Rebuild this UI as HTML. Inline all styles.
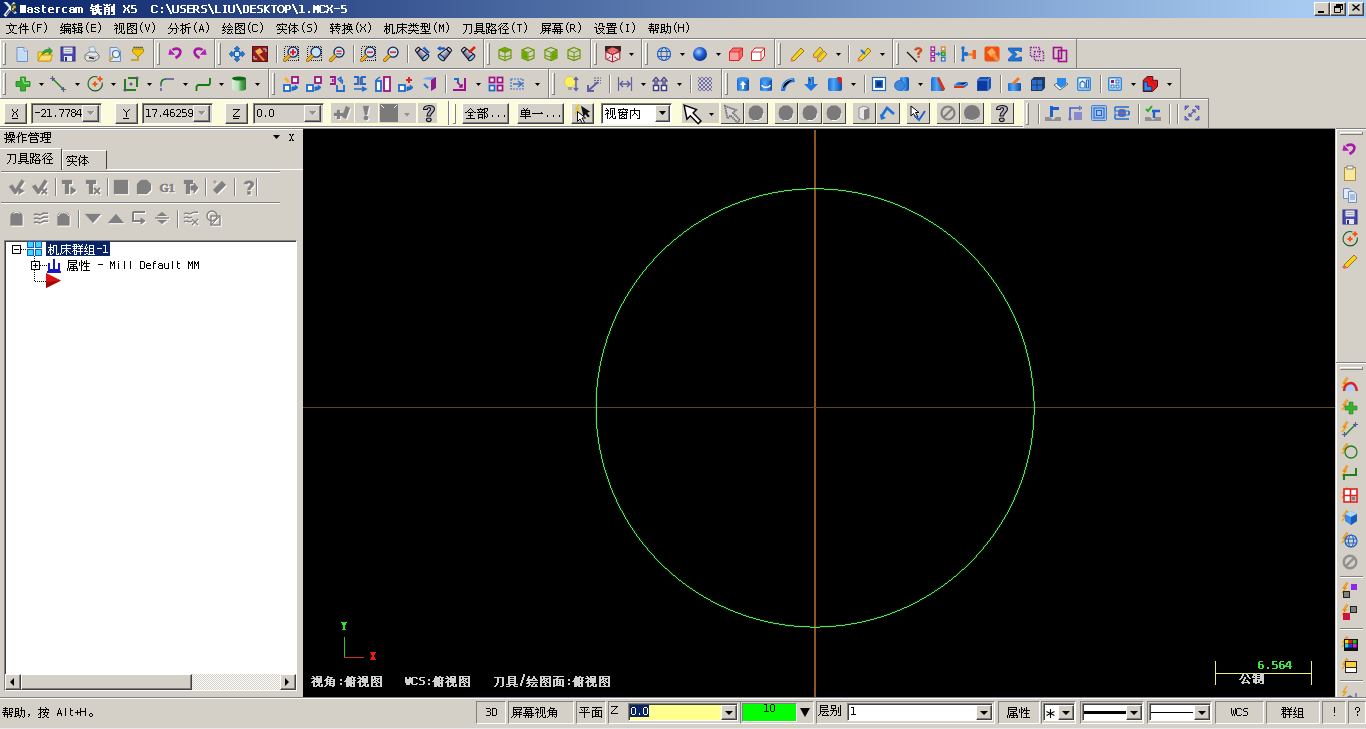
<!DOCTYPE html>
<html><head><meta charset="utf-8"><title>Mastercam X5</title>
<style>
*{margin:0;padding:0;box-sizing:border-box}
html,body{width:1366px;height:729px;overflow:hidden;background:#D4D0C8;position:relative;font-family:"Liberation Sans",sans-serif;font-size:12px}
.a{position:absolute}
.t{white-space:pre}
svg.a{overflow:visible}
</style></head><body>
<div class="a" style="left:0;top:0;width:1366px;height:18px;background:linear-gradient(90deg,#0A246A 0px,#A6CAF0 1300px)"></div>
<svg class="a" style="left:2px;top:1px" width="16" height="16" viewBox="0 0 16 16"><path d="M1.5 1L5 1L15 12L12.5 13Z" fill="#D8E4F0"/><path d="M1.5 14L4 16L14 2.5L11.5 1Z" fill="#F0F4FA"/><path d="M9 4L14 2L15 7L12 12L9 9Z" fill="#28301A" opacity=".85"/><circle cx="12.5" cy="6" r="1.6" fill="#C8B040"/><circle cx="11" cy="8" r="1" fill="#E8D880"/><path d="M4 14L8 9" stroke="#384838" stroke-width="1.2"/></svg>
<div class="a" style="left:20px;top:5px;width:6px;height:8px;background:#fff;"></div>
<svg class="a" style="left:19px;top:4px;" width="64" height="12" shape-rendering="crispEdges"><path d="M9 3h4v1h-4zM8 4h2v1h-2zM12 4h2v1h-2zM9 5h5v1h-5zM8 6h2v1h-2zM12 6h2v1h-2zM8 7h2v1h-2zM12 7h2v1h-2zM9 8h5v1h-5zM16 3h4v1h-4zM15 4h2v1h-2zM19 4h2v1h-2zM16 5h3v1h-3zM18 6h2v1h-2zM15 7h2v1h-2zM19 7h2v1h-2zM16 8h4v1h-4zM23 1h2v1h-2zM23 2h2v1h-2zM23 3h4v1h-4zM23 4h2v1h-2zM23 5h2v1h-2zM23 6h2v1h-2zM23 7h2v1h-2zM24 8h3v1h-3zM30 3h4v1h-4zM29 4h2v1h-2zM33 4h2v1h-2zM29 5h6v1h-6zM29 6h2v1h-2zM29 7h2v1h-2zM30 8h5v1h-5zM37 3h4v1h-4zM37 4h2v1h-2zM37 5h2v1h-2zM37 6h2v1h-2zM37 7h2v1h-2zM37 8h2v1h-2zM44 3h4v1h-4zM43 4h2v1h-2zM43 5h2v1h-2zM43 6h2v1h-2zM43 7h2v1h-2zM44 8h4v1h-4zM51 3h4v1h-4zM50 4h2v1h-2zM54 4h2v1h-2zM51 5h5v1h-5zM50 6h2v1h-2zM54 6h2v1h-2zM50 7h2v1h-2zM54 7h2v1h-2zM51 8h5v1h-5zM56 3h4v1h-4zM60 3h3v1h-3zM56 4h2v1h-2zM59 4h2v1h-2zM62 4h2v1h-2zM56 5h2v1h-2zM59 5h2v1h-2zM62 5h2v1h-2zM56 6h2v1h-2zM59 6h2v1h-2zM62 6h2v1h-2zM56 7h2v1h-2zM59 7h2v1h-2zM62 7h2v1h-2zM56 8h2v1h-2zM59 8h2v1h-2zM62 8h2v1h-2z" fill="#fff"/></svg>
<svg class="a" style="left:90px;top:4px;" width="27" height="12" shape-rendering="crispEdges"><path d="M1 0h2v1h-2zM7 0h2v1h-2zM1 1h2v1h-2zM5 1h2v1h-2zM7 1h2v1h-2zM1 2h11v1h-11zM0 3h2v1h-2zM5 3h2v1h-2zM7 3h2v1h-2zM0 4h6v1h-6zM7 4h2v1h-2zM2 5h2v1h-2zM5 5h7v1h-7zM0 6h6v1h-6zM6 6h2v1h-2zM8 6h2v1h-2zM2 7h2v1h-2zM6 7h2v1h-2zM8 7h2v1h-2zM2 8h2v1h-2zM4 8h2v1h-2zM6 8h2v1h-2zM8 8h2v1h-2zM10 8h2v1h-2zM2 9h3v1h-3zM5 9h2v1h-2zM8 9h2v1h-2zM10 9h2v1h-2zM2 10h2v1h-2zM4 10h2v1h-2zM9 10h3v1h-3zM13 0h2v1h-2zM16 0h2v1h-2zM19 0h2v1h-2zM23 0h2v1h-2zM14 1h2v1h-2zM16 1h2v1h-2zM18 1h2v1h-2zM23 1h2v1h-2zM16 2h2v1h-2zM21 2h2v1h-2zM23 2h2v1h-2zM14 3h6v1h-6zM21 3h2v1h-2zM23 3h2v1h-2zM14 4h2v1h-2zM18 4h2v1h-2zM21 4h2v1h-2zM23 4h2v1h-2zM14 5h6v1h-6zM21 5h2v1h-2zM23 5h2v1h-2zM14 6h2v1h-2zM18 6h2v1h-2zM21 6h2v1h-2zM23 6h2v1h-2zM14 7h6v1h-6zM21 7h2v1h-2zM23 7h2v1h-2zM14 8h2v1h-2zM18 8h2v1h-2zM23 8h2v1h-2zM14 9h2v1h-2zM18 9h2v1h-2zM23 9h2v1h-2zM14 10h2v1h-2zM17 10h3v1h-3zM21 10h4v1h-4z" fill="#fff"/></svg>
<svg class="a" style="left:123px;top:4px;" width="15" height="12" shape-rendering="crispEdges"><path d="M0 1h2v1h-2zM5 1h2v1h-2zM0 2h2v1h-2zM5 2h2v1h-2zM1 3h2v1h-2zM4 3h2v1h-2zM2 4h3v1h-3zM1 5h2v1h-2zM4 5h2v1h-2zM1 6h2v1h-2zM4 6h2v1h-2zM0 7h2v1h-2zM5 7h2v1h-2zM0 8h2v1h-2zM5 8h2v1h-2zM8 1h5v1h-5zM8 2h2v1h-2zM8 3h2v1h-2zM8 4h5v1h-5zM12 5h2v1h-2zM12 6h2v1h-2zM12 7h2v1h-2zM8 8h5v1h-5z" fill="#fff"/></svg>
<svg class="a" style="left:151px;top:4px;" width="197" height="12" shape-rendering="crispEdges"><path d="M1 1h5v1h-5zM0 2h2v1h-2zM5 2h2v1h-2zM0 3h2v1h-2zM0 4h2v1h-2zM0 5h2v1h-2zM0 6h2v1h-2zM0 7h2v1h-2zM5 7h2v1h-2zM1 8h5v1h-5zM10 3h2v1h-2zM10 4h2v1h-2zM10 7h2v1h-2zM10 8h2v1h-2zM15 0h2v1h-2zM15 1h2v1h-2zM16 2h2v1h-2zM16 3h2v1h-2zM17 4h2v1h-2zM17 5h2v1h-2zM18 6h2v1h-2zM18 7h2v1h-2zM19 8h2v1h-2zM19 9h2v1h-2zM21 1h2v1h-2zM26 1h2v1h-2zM21 2h2v1h-2zM26 2h2v1h-2zM21 3h2v1h-2zM26 3h2v1h-2zM21 4h2v1h-2zM26 4h2v1h-2zM21 5h2v1h-2zM26 5h2v1h-2zM21 6h2v1h-2zM26 6h2v1h-2zM21 7h2v1h-2zM26 7h2v1h-2zM22 8h5v1h-5zM30 1h5v1h-5zM29 2h2v1h-2zM29 3h2v1h-2zM30 4h4v1h-4zM33 5h2v1h-2zM33 6h2v1h-2zM33 7h2v1h-2zM29 8h5v1h-5zM36 1h6v1h-6zM36 2h2v1h-2zM36 3h2v1h-2zM36 4h6v1h-6zM36 5h2v1h-2zM36 6h2v1h-2zM36 7h2v1h-2zM36 8h6v1h-6zM42 1h5v1h-5zM42 2h2v1h-2zM46 2h2v1h-2zM42 3h2v1h-2zM46 3h2v1h-2zM42 4h2v1h-2zM46 4h2v1h-2zM42 5h5v1h-5zM42 6h2v1h-2zM45 6h2v1h-2zM42 7h2v1h-2zM46 7h2v1h-2zM42 8h2v1h-2zM47 8h2v1h-2zM51 1h5v1h-5zM50 2h2v1h-2zM50 3h2v1h-2zM51 4h4v1h-4zM54 5h2v1h-2zM54 6h2v1h-2zM54 7h2v1h-2zM50 8h5v1h-5zM57 0h2v1h-2zM57 1h2v1h-2zM58 2h2v1h-2zM58 3h2v1h-2zM59 4h2v1h-2zM59 5h2v1h-2zM60 6h2v1h-2zM60 7h2v1h-2zM61 8h2v1h-2zM61 9h2v1h-2zM64 1h2v1h-2zM64 2h2v1h-2zM64 3h2v1h-2zM64 4h2v1h-2zM64 5h2v1h-2zM64 6h2v1h-2zM64 7h2v1h-2zM64 8h6v1h-6zM72 1h4v1h-4zM73 2h2v1h-2zM73 3h2v1h-2zM73 4h2v1h-2zM73 5h2v1h-2zM73 6h2v1h-2zM73 7h2v1h-2zM72 8h4v1h-4zM77 1h2v1h-2zM82 1h2v1h-2zM77 2h2v1h-2zM82 2h2v1h-2zM77 3h2v1h-2zM82 3h2v1h-2zM77 4h2v1h-2zM82 4h2v1h-2zM77 5h2v1h-2zM82 5h2v1h-2zM77 6h2v1h-2zM82 6h2v1h-2zM77 7h2v1h-2zM82 7h2v1h-2zM78 8h5v1h-5zM85 0h2v1h-2zM85 1h2v1h-2zM86 2h2v1h-2zM86 3h2v1h-2zM87 4h2v1h-2zM87 5h2v1h-2zM88 6h2v1h-2zM88 7h2v1h-2zM89 8h2v1h-2zM89 9h2v1h-2zM92 1h5v1h-5zM92 2h2v1h-2zM96 2h2v1h-2zM92 3h2v1h-2zM96 3h2v1h-2zM92 4h2v1h-2zM96 4h2v1h-2zM92 5h2v1h-2zM96 5h2v1h-2zM92 6h2v1h-2zM96 6h2v1h-2zM92 7h2v1h-2zM96 7h2v1h-2zM92 8h5v1h-5zM99 1h6v1h-6zM99 2h2v1h-2zM99 3h2v1h-2zM99 4h6v1h-6zM99 5h2v1h-2zM99 6h2v1h-2zM99 7h2v1h-2zM99 8h6v1h-6zM107 1h5v1h-5zM106 2h2v1h-2zM106 3h2v1h-2zM107 4h4v1h-4zM110 5h2v1h-2zM110 6h2v1h-2zM110 7h2v1h-2zM106 8h5v1h-5zM113 1h2v1h-2zM117 1h2v1h-2zM113 2h2v1h-2zM116 2h2v1h-2zM113 3h2v1h-2zM115 3h2v1h-2zM113 4h3v1h-3zM113 5h3v1h-3zM113 6h2v1h-2zM115 6h2v1h-2zM113 7h2v1h-2zM116 7h2v1h-2zM113 8h2v1h-2zM117 8h2v1h-2zM120 1h6v1h-6zM122 2h2v1h-2zM122 3h2v1h-2zM122 4h2v1h-2zM122 5h2v1h-2zM122 6h2v1h-2zM122 7h2v1h-2zM122 8h2v1h-2zM128 1h4v1h-4zM127 2h2v1h-2zM131 2h2v1h-2zM126 3h2v1h-2zM132 3h2v1h-2zM126 4h2v1h-2zM132 4h2v1h-2zM126 5h2v1h-2zM132 5h2v1h-2zM126 6h2v1h-2zM132 6h2v1h-2zM127 7h2v1h-2zM131 7h2v1h-2zM128 8h4v1h-4zM134 1h5v1h-5zM134 2h2v1h-2zM138 2h2v1h-2zM134 3h2v1h-2zM138 3h2v1h-2zM134 4h2v1h-2zM138 4h2v1h-2zM134 5h5v1h-5zM134 6h2v1h-2zM134 7h2v1h-2zM134 8h2v1h-2zM141 0h2v1h-2zM141 1h2v1h-2zM142 2h2v1h-2zM142 3h2v1h-2zM143 4h2v1h-2zM143 5h2v1h-2zM144 6h2v1h-2zM144 7h2v1h-2zM145 8h2v1h-2zM145 9h2v1h-2zM148 1h4v1h-4zM150 2h2v1h-2zM150 3h2v1h-2zM150 4h2v1h-2zM150 5h2v1h-2zM150 6h2v1h-2zM150 7h2v1h-2zM148 8h6v1h-6zM157 7h2v1h-2zM157 8h2v1h-2zM162 1h2v1h-2zM166 1h2v1h-2zM162 2h3v1h-3zM165 2h3v1h-3zM162 3h3v1h-3zM165 3h3v1h-3zM162 4h2v1h-2zM164 4h2v1h-2zM166 4h2v1h-2zM162 5h2v1h-2zM164 5h2v1h-2zM166 5h2v1h-2zM162 6h2v1h-2zM166 6h2v1h-2zM162 7h2v1h-2zM166 7h2v1h-2zM162 8h2v1h-2zM166 8h2v1h-2zM169 1h5v1h-5zM168 2h2v1h-2zM173 2h2v1h-2zM168 3h2v1h-2zM168 4h2v1h-2zM168 5h2v1h-2zM168 6h2v1h-2zM168 7h2v1h-2zM173 7h2v1h-2zM169 8h5v1h-5zM175 1h2v1h-2zM180 1h2v1h-2zM175 2h2v1h-2zM180 2h2v1h-2zM176 3h2v1h-2zM179 3h2v1h-2zM177 4h3v1h-3zM176 5h2v1h-2zM179 5h2v1h-2zM176 6h2v1h-2zM179 6h2v1h-2zM175 7h2v1h-2zM180 7h2v1h-2zM175 8h2v1h-2zM180 8h2v1h-2zM183 4h6v1h-6zM190 1h5v1h-5zM190 2h2v1h-2zM190 3h2v1h-2zM190 4h5v1h-5zM194 5h2v1h-2zM194 6h2v1h-2zM194 7h2v1h-2zM190 8h5v1h-5z" fill="#fff"/></svg>
<div class="a" style="left:1314px;top:2px;width:16px;height:14px;background:#D4D0C8;border-top:1px solid #fff;border-left:1px solid #fff;border-right:1px solid #404040;border-bottom:1px solid #404040;box-shadow:inset -1px -1px 0 #808080"></div>
<div class="a" style="left:1330px;top:2px;width:16px;height:14px;background:#D4D0C8;border-top:1px solid #fff;border-left:1px solid #fff;border-right:1px solid #404040;border-bottom:1px solid #404040;box-shadow:inset -1px -1px 0 #808080"></div>
<div class="a" style="left:1348px;top:2px;width:16px;height:14px;background:#D4D0C8;border-top:1px solid #fff;border-left:1px solid #fff;border-right:1px solid #404040;border-bottom:1px solid #404040;box-shadow:inset -1px -1px 0 #808080"></div>
<svg class="a" style="left:1318px;top:11px" width="6" height="2" viewBox="0 0 6 2"><rect width="6" height="2" fill="#000"/></svg>
<svg class="a" style="left:1334px;top:4px" width="9" height="9" viewBox="0 0 9 9"><path d="M2.5 2.5V0.5H8.5V5.5H6.5M0.5 2.5H6.5V8.5H0.5Z M2.5 1H8.5" stroke="#000" fill="none"/><rect x="2" y="0" width="7" height="2" fill="#000"/><rect x="0" y="2.5" width="7" height="1.5" fill="#000"/></svg>
<svg class="a" style="left:1352px;top:4px" width="8" height="7" viewBox="0 0 8 7"><path d="M0.5 0.5L7.5 6.5M7.5 0.5L0.5 6.5" stroke="#000" stroke-width="1.6"/></svg>
<svg class="a" style="left:6px;top:23px;" width="43" height="12" shape-rendering="crispEdges"><path d="M4 0h1v1h-1zM5 1h1v1h-1zM0 2h11v1h-11zM3 3h1v1h-1zM7 3h1v1h-1zM3 4h1v1h-1zM7 4h1v1h-1zM3 5h1v1h-1zM7 5h1v1h-1zM4 6h1v1h-1zM6 6h1v1h-1zM4 7h1v1h-1zM6 7h1v1h-1zM5 8h1v1h-1zM3 9h2v1h-2zM6 9h2v1h-2zM0 10h3v1h-3zM8 10h3v1h-3zM15 0h1v1h-1zM19 0h1v1h-1zM15 1h1v1h-1zM17 1h1v1h-1zM19 1h1v1h-1zM14 2h1v1h-1zM17 2h1v1h-1zM19 2h1v1h-1zM14 3h1v1h-1zM16 3h6v1h-6zM13 4h3v1h-3zM19 4h1v1h-1zM12 5h1v1h-1zM14 5h1v1h-1zM19 5h1v1h-1zM14 6h1v1h-1zM16 6h7v1h-7zM14 7h1v1h-1zM19 7h1v1h-1zM14 8h1v1h-1zM19 8h1v1h-1zM14 9h1v1h-1zM19 9h1v1h-1zM14 10h1v1h-1zM19 10h1v1h-1zM28 -1h1v1h-1zM27 0h1v1h-1zM27 1h1v1h-1zM26 2h1v1h-1zM26 3h1v1h-1zM26 4h1v1h-1zM26 5h1v1h-1zM26 6h1v1h-1zM27 7h1v1h-1zM27 8h1v1h-1zM28 9h1v1h-1zM31 1h5v1h-5zM31 2h1v1h-1zM31 3h1v1h-1zM31 4h4v1h-4zM31 5h1v1h-1zM31 6h1v1h-1zM31 7h1v1h-1zM31 8h1v1h-1zM38 -1h1v1h-1zM39 0h1v1h-1zM39 1h1v1h-1zM40 2h1v1h-1zM40 3h1v1h-1zM40 4h1v1h-1zM40 5h1v1h-1zM40 6h1v1h-1zM39 7h1v1h-1zM39 8h1v1h-1zM38 9h1v1h-1z" fill="#000"/></svg>
<svg class="a" style="left:60px;top:23px;" width="43" height="12" shape-rendering="crispEdges"><path d="M2 0h1v1h-1zM7 0h1v1h-1zM2 1h1v1h-1zM4 1h7v1h-7zM1 2h1v1h-1zM4 2h1v1h-1zM10 2h1v1h-1zM1 3h1v1h-1zM3 3h8v1h-8zM0 4h3v1h-3zM4 4h1v1h-1zM2 5h1v1h-1zM4 5h7v1h-7zM1 6h1v1h-1zM4 6h1v1h-1zM6 6h1v1h-1zM8 6h1v1h-1zM10 6h1v1h-1zM0 7h11v1h-11zM4 8h1v1h-1zM6 8h1v1h-1zM8 8h1v1h-1zM10 8h1v1h-1zM2 9h3v1h-3zM6 9h1v1h-1zM8 9h1v1h-1zM10 9h1v1h-1zM0 10h2v1h-2zM4 10h1v1h-1zM9 10h2v1h-2zM14 0h1v1h-1zM18 0h4v1h-4zM12 1h5v1h-5zM18 1h1v1h-1zM21 1h1v1h-1zM13 2h1v1h-1zM18 2h4v1h-4zM13 3h2v1h-2zM12 4h1v1h-1zM14 4h1v1h-1zM17 4h6v1h-6zM12 5h5v1h-5zM18 5h1v1h-1zM21 5h1v1h-1zM14 6h1v1h-1zM18 6h2v1h-2zM21 6h1v1h-1zM14 7h3v1h-3zM18 7h1v1h-1zM20 7h2v1h-2zM12 8h3v1h-3zM18 8h1v1h-1zM21 8h2v1h-2zM14 9h1v1h-1zM16 9h6v1h-6zM14 10h1v1h-1zM21 10h1v1h-1zM28 -1h1v1h-1zM27 0h1v1h-1zM27 1h1v1h-1zM26 2h1v1h-1zM26 3h1v1h-1zM26 4h1v1h-1zM26 5h1v1h-1zM26 6h1v1h-1zM27 7h1v1h-1zM27 8h1v1h-1zM28 9h1v1h-1zM31 1h5v1h-5zM31 2h1v1h-1zM31 3h1v1h-1zM31 4h5v1h-5zM31 5h1v1h-1zM31 6h1v1h-1zM31 7h1v1h-1zM31 8h5v1h-5zM38 -1h1v1h-1zM39 0h1v1h-1zM39 1h1v1h-1zM40 2h1v1h-1zM40 3h1v1h-1zM40 4h1v1h-1zM40 5h1v1h-1zM40 6h1v1h-1zM39 7h1v1h-1zM39 8h1v1h-1zM38 9h1v1h-1z" fill="#000"/></svg>
<svg class="a" style="left:114px;top:23px;" width="43" height="12" shape-rendering="crispEdges"><path d="M1 0h1v1h-1zM5 0h5v1h-5zM2 1h1v1h-1zM5 1h1v1h-1zM9 1h1v1h-1zM0 2h4v1h-4zM5 2h1v1h-1zM7 2h1v1h-1zM9 2h1v1h-1zM3 3h1v1h-1zM5 3h1v1h-1zM7 3h1v1h-1zM9 3h1v1h-1zM2 4h1v1h-1zM5 4h1v1h-1zM7 4h1v1h-1zM9 4h1v1h-1zM1 5h3v1h-3zM5 5h1v1h-1zM7 5h1v1h-1zM9 5h1v1h-1zM0 6h1v1h-1zM2 6h1v1h-1zM5 6h1v1h-1zM7 6h1v1h-1zM9 6h1v1h-1zM2 7h1v1h-1zM7 7h1v1h-1zM2 8h1v1h-1zM6 8h2v1h-2zM10 8h1v1h-1zM2 9h1v1h-1zM5 9h1v1h-1zM7 9h1v1h-1zM10 9h1v1h-1zM2 10h1v1h-1zM4 10h1v1h-1zM8 10h3v1h-3zM13 0h10v1h-10zM13 1h1v1h-1zM16 1h1v1h-1zM22 1h1v1h-1zM13 2h1v1h-1zM16 2h5v1h-5zM22 2h1v1h-1zM13 3h1v1h-1zM15 3h2v1h-2zM19 3h1v1h-1zM22 3h1v1h-1zM13 4h2v1h-2zM17 4h2v1h-2zM22 4h1v1h-1zM13 5h1v1h-1zM16 5h1v1h-1zM19 5h1v1h-1zM22 5h1v1h-1zM13 6h3v1h-3zM17 6h1v1h-1zM20 6h3v1h-3zM13 7h1v1h-1zM18 7h1v1h-1zM22 7h1v1h-1zM13 8h1v1h-1zM17 8h1v1h-1zM22 8h1v1h-1zM13 9h1v1h-1zM18 9h1v1h-1zM22 9h1v1h-1zM13 10h10v1h-10zM28 -1h1v1h-1zM27 0h1v1h-1zM27 1h1v1h-1zM26 2h1v1h-1zM26 3h1v1h-1zM26 4h1v1h-1zM26 5h1v1h-1zM26 6h1v1h-1zM27 7h1v1h-1zM27 8h1v1h-1zM28 9h1v1h-1zM31 1h1v1h-1zM35 1h1v1h-1zM31 2h1v1h-1zM35 2h1v1h-1zM31 3h1v1h-1zM35 3h1v1h-1zM32 4h1v1h-1zM34 4h1v1h-1zM32 5h1v1h-1zM34 5h1v1h-1zM32 6h1v1h-1zM34 6h1v1h-1zM33 7h1v1h-1zM33 8h1v1h-1zM38 -1h1v1h-1zM39 0h1v1h-1zM39 1h1v1h-1zM40 2h1v1h-1zM40 3h1v1h-1zM40 4h1v1h-1zM40 5h1v1h-1zM40 6h1v1h-1zM39 7h1v1h-1zM39 8h1v1h-1zM38 9h1v1h-1z" fill="#000"/></svg>
<svg class="a" style="left:168px;top:23px;" width="43" height="12" shape-rendering="crispEdges"><path d="M3 0h1v1h-1zM7 0h1v1h-1zM3 1h1v1h-1zM7 1h1v1h-1zM2 2h1v1h-1zM8 2h1v1h-1zM2 3h1v1h-1zM8 3h1v1h-1zM1 4h1v1h-1zM9 4h1v1h-1zM0 5h1v1h-1zM2 5h7v1h-7zM10 5h1v1h-1zM4 6h1v1h-1zM8 6h1v1h-1zM4 7h1v1h-1zM8 7h1v1h-1zM3 8h1v1h-1zM8 8h1v1h-1zM2 9h1v1h-1zM8 9h1v1h-1zM0 10h2v1h-2zM6 10h2v1h-2zM14 0h1v1h-1zM20 0h2v1h-2zM14 1h1v1h-1zM17 1h3v1h-3zM12 2h6v1h-6zM14 3h1v1h-1zM17 3h1v1h-1zM14 4h1v1h-1zM17 4h6v1h-6zM14 5h2v1h-2zM17 5h1v1h-1zM20 5h1v1h-1zM13 6h2v1h-2zM16 6h2v1h-2zM20 6h1v1h-1zM12 7h1v1h-1zM14 7h1v1h-1zM17 7h1v1h-1zM20 7h1v1h-1zM14 8h1v1h-1zM17 8h1v1h-1zM20 8h1v1h-1zM14 9h1v1h-1zM16 9h1v1h-1zM20 9h1v1h-1zM14 10h2v1h-2zM20 10h1v1h-1zM28 -1h1v1h-1zM27 0h1v1h-1zM27 1h1v1h-1zM26 2h1v1h-1zM26 3h1v1h-1zM26 4h1v1h-1zM26 5h1v1h-1zM26 6h1v1h-1zM27 7h1v1h-1zM27 8h1v1h-1zM28 9h1v1h-1zM33 1h1v1h-1zM33 2h1v1h-1zM32 3h1v1h-1zM34 3h1v1h-1zM32 4h1v1h-1zM34 4h1v1h-1zM32 5h1v1h-1zM34 5h1v1h-1zM31 6h5v1h-5zM31 7h1v1h-1zM35 7h1v1h-1zM31 8h1v1h-1zM35 8h1v1h-1zM38 -1h1v1h-1zM39 0h1v1h-1zM39 1h1v1h-1zM40 2h1v1h-1zM40 3h1v1h-1zM40 4h1v1h-1zM40 5h1v1h-1zM40 6h1v1h-1zM39 7h1v1h-1zM39 8h1v1h-1zM38 9h1v1h-1z" fill="#000"/></svg>
<svg class="a" style="left:222px;top:23px;" width="43" height="12" shape-rendering="crispEdges"><path d="M2 0h1v1h-1zM7 0h1v1h-1zM2 1h1v1h-1zM7 1h1v1h-1zM1 2h1v1h-1zM6 2h1v1h-1zM8 2h1v1h-1zM1 3h1v1h-1zM3 3h1v1h-1zM5 3h1v1h-1zM9 3h1v1h-1zM0 4h3v1h-3zM4 4h1v1h-1zM6 4h3v1h-3zM10 4h1v1h-1zM2 5h1v1h-1zM1 6h1v1h-1zM3 6h1v1h-1zM5 6h6v1h-6zM0 7h3v1h-3zM7 7h1v1h-1zM3 8h1v1h-1zM6 8h1v1h-1zM9 8h1v1h-1zM2 9h1v1h-1zM5 9h1v1h-1zM9 9h1v1h-1zM0 10h2v1h-2zM5 10h4v1h-4zM10 10h1v1h-1zM13 0h10v1h-10zM13 1h1v1h-1zM16 1h1v1h-1zM22 1h1v1h-1zM13 2h1v1h-1zM16 2h5v1h-5zM22 2h1v1h-1zM13 3h1v1h-1zM15 3h2v1h-2zM19 3h1v1h-1zM22 3h1v1h-1zM13 4h2v1h-2zM17 4h2v1h-2zM22 4h1v1h-1zM13 5h1v1h-1zM16 5h1v1h-1zM19 5h1v1h-1zM22 5h1v1h-1zM13 6h3v1h-3zM17 6h1v1h-1zM20 6h3v1h-3zM13 7h1v1h-1zM18 7h1v1h-1zM22 7h1v1h-1zM13 8h1v1h-1zM17 8h1v1h-1zM22 8h1v1h-1zM13 9h1v1h-1zM18 9h1v1h-1zM22 9h1v1h-1zM13 10h10v1h-10zM28 -1h1v1h-1zM27 0h1v1h-1zM27 1h1v1h-1zM26 2h1v1h-1zM26 3h1v1h-1zM26 4h1v1h-1zM26 5h1v1h-1zM26 6h1v1h-1zM27 7h1v1h-1zM27 8h1v1h-1zM28 9h1v1h-1zM31 1h4v1h-4zM30 2h1v1h-1zM35 2h1v1h-1zM30 3h1v1h-1zM30 4h1v1h-1zM30 5h1v1h-1zM30 6h1v1h-1zM30 7h1v1h-1zM35 7h1v1h-1zM31 8h4v1h-4zM38 -1h1v1h-1zM39 0h1v1h-1zM39 1h1v1h-1zM40 2h1v1h-1zM40 3h1v1h-1zM40 4h1v1h-1zM40 5h1v1h-1zM40 6h1v1h-1zM39 7h1v1h-1zM39 8h1v1h-1zM38 9h1v1h-1z" fill="#000"/></svg>
<svg class="a" style="left:276px;top:23px;" width="43" height="12" shape-rendering="crispEdges"><path d="M6 0h1v1h-1zM1 1h10v1h-10zM1 2h1v1h-1zM3 2h1v1h-1zM10 2h1v1h-1zM0 3h1v1h-1zM4 3h1v1h-1zM6 3h1v1h-1zM9 3h1v1h-1zM2 4h1v1h-1zM6 4h1v1h-1zM3 5h1v1h-1zM6 5h1v1h-1zM1 6h10v1h-10zM6 7h1v1h-1zM5 8h1v1h-1zM7 8h1v1h-1zM4 9h1v1h-1zM8 9h1v1h-1zM1 10h3v1h-3zM9 10h2v1h-2zM14 0h1v1h-1zM18 0h1v1h-1zM14 1h1v1h-1zM18 1h1v1h-1zM13 2h1v1h-1zM15 2h7v1h-7zM13 3h1v1h-1zM18 3h1v1h-1zM12 4h2v1h-2zM17 4h3v1h-3zM13 5h1v1h-1zM16 5h1v1h-1zM18 5h1v1h-1zM20 5h1v1h-1zM13 6h1v1h-1zM15 6h1v1h-1zM18 6h1v1h-1zM21 6h1v1h-1zM13 7h2v1h-2zM18 7h1v1h-1zM22 7h1v1h-1zM13 8h1v1h-1zM16 8h5v1h-5zM13 9h1v1h-1zM18 9h1v1h-1zM13 10h1v1h-1zM18 10h1v1h-1zM28 -1h1v1h-1zM27 0h1v1h-1zM27 1h1v1h-1zM26 2h1v1h-1zM26 3h1v1h-1zM26 4h1v1h-1zM26 5h1v1h-1zM26 6h1v1h-1zM27 7h1v1h-1zM27 8h1v1h-1zM28 9h1v1h-1zM32 1h4v1h-4zM31 2h1v1h-1zM31 3h1v1h-1zM32 4h3v1h-3zM35 5h1v1h-1zM35 6h1v1h-1zM35 7h1v1h-1zM31 8h4v1h-4zM38 -1h1v1h-1zM39 0h1v1h-1zM39 1h1v1h-1zM40 2h1v1h-1zM40 3h1v1h-1zM40 4h1v1h-1zM40 5h1v1h-1zM40 6h1v1h-1zM39 7h1v1h-1zM39 8h1v1h-1zM38 9h1v1h-1z" fill="#000"/></svg>
<svg class="a" style="left:330px;top:23px;" width="43" height="12" shape-rendering="crispEdges"><path d="M2 0h1v1h-1zM7 0h1v1h-1zM0 1h4v1h-4zM5 1h5v1h-5zM1 2h1v1h-1zM7 2h1v1h-1zM1 3h2v1h-2zM4 3h7v1h-7zM0 4h1v1h-1zM2 4h1v1h-1zM6 4h1v1h-1zM0 5h4v1h-4zM5 5h5v1h-5zM2 6h1v1h-1zM9 6h1v1h-1zM2 7h3v1h-3zM6 7h1v1h-1zM8 7h1v1h-1zM0 8h3v1h-3zM7 8h1v1h-1zM2 9h1v1h-1zM8 9h1v1h-1zM2 10h1v1h-1zM8 10h1v1h-1zM14 0h1v1h-1zM18 0h1v1h-1zM14 1h1v1h-1zM18 1h4v1h-4zM12 2h6v1h-6zM20 2h1v1h-1zM14 3h1v1h-1zM17 3h5v1h-5zM14 4h1v1h-1zM16 4h2v1h-2zM19 4h1v1h-1zM21 4h1v1h-1zM14 5h2v1h-2zM17 5h1v1h-1zM19 5h1v1h-1zM21 5h1v1h-1zM13 6h2v1h-2zM16 6h7v1h-7zM12 7h1v1h-1zM14 7h1v1h-1zM19 7h1v1h-1zM14 8h1v1h-1zM18 8h1v1h-1zM20 8h1v1h-1zM14 9h1v1h-1zM17 9h1v1h-1zM21 9h1v1h-1zM12 10h3v1h-3zM16 10h1v1h-1zM22 10h1v1h-1zM28 -1h1v1h-1zM27 0h1v1h-1zM27 1h1v1h-1zM26 2h1v1h-1zM26 3h1v1h-1zM26 4h1v1h-1zM26 5h1v1h-1zM26 6h1v1h-1zM27 7h1v1h-1zM27 8h1v1h-1zM28 9h1v1h-1zM30 1h1v1h-1zM35 1h1v1h-1zM30 2h1v1h-1zM35 2h1v1h-1zM31 3h1v1h-1zM34 3h1v1h-1zM32 4h2v1h-2zM31 5h1v1h-1zM34 5h1v1h-1zM31 6h1v1h-1zM34 6h1v1h-1zM30 7h1v1h-1zM35 7h1v1h-1zM30 8h1v1h-1zM35 8h1v1h-1zM38 -1h1v1h-1zM39 0h1v1h-1zM39 1h1v1h-1zM40 2h1v1h-1zM40 3h1v1h-1zM40 4h1v1h-1zM40 5h1v1h-1zM40 6h1v1h-1zM39 7h1v1h-1zM39 8h1v1h-1zM38 9h1v1h-1z" fill="#000"/></svg>
<svg class="a" style="left:384px;top:23px;" width="67" height="12" shape-rendering="crispEdges"><path d="M2 0h1v1h-1zM2 1h1v1h-1zM5 1h4v1h-4zM2 2h1v1h-1zM5 2h1v1h-1zM8 2h1v1h-1zM0 3h6v1h-6zM8 3h1v1h-1zM2 4h1v1h-1zM5 4h1v1h-1zM8 4h1v1h-1zM1 5h3v1h-3zM5 5h1v1h-1zM8 5h1v1h-1zM1 6h2v1h-2zM4 6h2v1h-2zM8 6h1v1h-1zM0 7h1v1h-1zM2 7h1v1h-1zM5 7h1v1h-1zM8 7h1v1h-1zM0 8h1v1h-1zM2 8h1v1h-1zM5 8h1v1h-1zM8 8h1v1h-1zM2 9h1v1h-1zM4 9h1v1h-1zM8 9h1v1h-1zM10 9h1v1h-1zM2 10h2v1h-2zM8 10h3v1h-3zM18 0h1v1h-1zM13 1h10v1h-10zM13 2h1v1h-1zM18 2h1v1h-1zM13 3h1v1h-1zM18 3h1v1h-1zM13 4h10v1h-10zM13 5h1v1h-1zM18 5h1v1h-1zM13 6h1v1h-1zM17 6h3v1h-3zM13 7h1v1h-1zM16 7h1v1h-1zM18 7h1v1h-1zM20 7h1v1h-1zM13 8h1v1h-1zM15 8h1v1h-1zM18 8h1v1h-1zM21 8h1v1h-1zM12 9h1v1h-1zM14 9h1v1h-1zM18 9h1v1h-1zM22 9h1v1h-1zM12 10h1v1h-1zM18 10h1v1h-1zM26 0h1v1h-1zM29 0h1v1h-1zM32 0h1v1h-1zM27 1h1v1h-1zM29 1h1v1h-1zM31 1h1v1h-1zM24 2h11v1h-11zM27 3h1v1h-1zM29 3h1v1h-1zM31 3h1v1h-1zM26 4h1v1h-1zM29 4h1v1h-1zM32 4h1v1h-1zM25 5h1v1h-1zM33 5h1v1h-1zM29 6h1v1h-1zM24 7h11v1h-11zM28 8h1v1h-1zM30 8h1v1h-1zM27 9h1v1h-1zM31 9h1v1h-1zM24 10h3v1h-3zM32 10h3v1h-3zM37 0h6v1h-6zM45 0h1v1h-1zM38 1h1v1h-1zM40 1h1v1h-1zM43 1h1v1h-1zM45 1h1v1h-1zM38 2h1v1h-1zM40 2h1v1h-1zM43 2h1v1h-1zM45 2h1v1h-1zM36 3h8v1h-8zM45 3h1v1h-1zM38 4h1v1h-1zM40 4h1v1h-1zM43 4h1v1h-1zM45 4h1v1h-1zM38 5h1v1h-1zM40 5h1v1h-1zM45 5h1v1h-1zM37 6h1v1h-1zM40 6h2v1h-2zM44 6h2v1h-2zM41 7h1v1h-1zM38 8h7v1h-7zM41 9h1v1h-1zM36 10h11v1h-11zM52 -1h1v1h-1zM51 0h1v1h-1zM51 1h1v1h-1zM50 2h1v1h-1zM50 3h1v1h-1zM50 4h1v1h-1zM50 5h1v1h-1zM50 6h1v1h-1zM51 7h1v1h-1zM51 8h1v1h-1zM52 9h1v1h-1zM55 1h1v1h-1zM59 1h1v1h-1zM55 2h2v1h-2zM58 2h2v1h-2zM55 3h2v1h-2zM58 3h2v1h-2zM55 4h1v1h-1zM57 4h1v1h-1zM59 4h1v1h-1zM55 5h1v1h-1zM57 5h1v1h-1zM59 5h1v1h-1zM55 6h1v1h-1zM59 6h1v1h-1zM55 7h1v1h-1zM59 7h1v1h-1zM55 8h1v1h-1zM59 8h1v1h-1zM62 -1h1v1h-1zM63 0h1v1h-1zM63 1h1v1h-1zM64 2h1v1h-1zM64 3h1v1h-1zM64 4h1v1h-1zM64 5h1v1h-1zM64 6h1v1h-1zM63 7h1v1h-1zM63 8h1v1h-1zM62 9h1v1h-1z" fill="#000"/></svg>
<svg class="a" style="left:462px;top:23px;" width="67" height="12" shape-rendering="crispEdges"><path d="M1 1h9v1h-9zM4 2h1v1h-1zM9 2h1v1h-1zM4 3h1v1h-1zM9 3h1v1h-1zM4 4h1v1h-1zM9 4h1v1h-1zM4 5h1v1h-1zM9 5h1v1h-1zM4 6h1v1h-1zM9 6h1v1h-1zM3 7h1v1h-1zM9 7h1v1h-1zM3 8h1v1h-1zM9 8h1v1h-1zM2 9h1v1h-1zM9 9h1v1h-1zM1 10h1v1h-1zM7 10h2v1h-2zM14 0h7v1h-7zM14 1h1v1h-1zM20 1h1v1h-1zM14 2h7v1h-7zM14 3h1v1h-1zM20 3h1v1h-1zM14 4h7v1h-7zM14 5h1v1h-1zM20 5h1v1h-1zM14 6h7v1h-7zM14 7h1v1h-1zM20 7h1v1h-1zM12 8h11v1h-11zM15 9h1v1h-1zM19 9h1v1h-1zM12 10h3v1h-3zM20 10h3v1h-3zM24 0h4v1h-4zM29 0h1v1h-1zM24 1h1v1h-1zM27 1h1v1h-1zM29 1h5v1h-5zM24 2h1v1h-1zM27 2h1v1h-1zM29 2h1v1h-1zM33 2h1v1h-1zM24 3h1v1h-1zM27 3h2v1h-2zM30 3h1v1h-1zM32 3h1v1h-1zM24 4h4v1h-4zM31 4h1v1h-1zM26 5h1v1h-1zM30 5h1v1h-1zM32 5h1v1h-1zM24 6h1v1h-1zM26 6h2v1h-2zM29 6h1v1h-1zM33 6h1v1h-1zM24 7h1v1h-1zM26 7h1v1h-1zM28 7h7v1h-7zM24 8h1v1h-1zM26 8h1v1h-1zM29 8h1v1h-1zM33 8h1v1h-1zM24 9h1v1h-1zM26 9h2v1h-2zM29 9h1v1h-1zM33 9h1v1h-1zM24 10h2v1h-2zM29 10h5v1h-5zM39 0h1v1h-1zM41 0h5v1h-5zM38 1h1v1h-1zM44 1h1v1h-1zM37 2h1v1h-1zM40 2h1v1h-1zM43 2h1v1h-1zM36 3h1v1h-1zM39 3h1v1h-1zM42 3h1v1h-1zM44 3h1v1h-1zM38 4h1v1h-1zM41 4h1v1h-1zM45 4h1v1h-1zM37 5h2v1h-2zM40 5h1v1h-1zM46 5h1v1h-1zM36 6h1v1h-1zM38 6h1v1h-1zM41 6h5v1h-5zM38 7h1v1h-1zM43 7h1v1h-1zM38 8h1v1h-1zM43 8h1v1h-1zM38 9h1v1h-1zM43 9h1v1h-1zM38 10h1v1h-1zM40 10h7v1h-7zM52 -1h1v1h-1zM51 0h1v1h-1zM51 1h1v1h-1zM50 2h1v1h-1zM50 3h1v1h-1zM50 4h1v1h-1zM50 5h1v1h-1zM50 6h1v1h-1zM51 7h1v1h-1zM51 8h1v1h-1zM52 9h1v1h-1zM55 1h5v1h-5zM57 2h1v1h-1zM57 3h1v1h-1zM57 4h1v1h-1zM57 5h1v1h-1zM57 6h1v1h-1zM57 7h1v1h-1zM57 8h1v1h-1zM62 -1h1v1h-1zM63 0h1v1h-1zM63 1h1v1h-1zM64 2h1v1h-1zM64 3h1v1h-1zM64 4h1v1h-1zM64 5h1v1h-1zM64 6h1v1h-1zM63 7h1v1h-1zM63 8h1v1h-1zM62 9h1v1h-1z" fill="#000"/></svg>
<svg class="a" style="left:540px;top:23px;" width="43" height="12" shape-rendering="crispEdges"><path d="M2 0h9v1h-9zM2 1h1v1h-1zM10 1h1v1h-1zM2 2h9v1h-9zM2 3h1v1h-1zM4 3h1v1h-1zM9 3h1v1h-1zM2 4h1v1h-1zM5 4h1v1h-1zM8 4h1v1h-1zM2 5h9v1h-9zM2 6h1v1h-1zM5 6h1v1h-1zM8 6h1v1h-1zM2 7h9v1h-9zM2 8h1v1h-1zM5 8h1v1h-1zM8 8h1v1h-1zM1 9h1v1h-1zM4 9h1v1h-1zM8 9h1v1h-1zM0 10h1v1h-1zM3 10h1v1h-1zM8 10h1v1h-1zM12 0h11v1h-11zM15 1h1v1h-1zM19 1h1v1h-1zM14 2h7v1h-7zM14 3h1v1h-1zM20 3h1v1h-1zM14 4h7v1h-7zM14 5h1v1h-1zM16 5h1v1h-1zM20 5h1v1h-1zM12 6h11v1h-11zM15 7h1v1h-1zM17 7h1v1h-1zM20 7h1v1h-1zM12 8h11v1h-11zM14 9h1v1h-1zM17 9h1v1h-1zM20 9h1v1h-1zM14 10h1v1h-1zM17 10h1v1h-1zM19 10h2v1h-2zM28 -1h1v1h-1zM27 0h1v1h-1zM27 1h1v1h-1zM26 2h1v1h-1zM26 3h1v1h-1zM26 4h1v1h-1zM26 5h1v1h-1zM26 6h1v1h-1zM27 7h1v1h-1zM27 8h1v1h-1zM28 9h1v1h-1zM30 1h4v1h-4zM30 2h1v1h-1zM34 2h1v1h-1zM30 3h1v1h-1zM34 3h1v1h-1zM30 4h1v1h-1zM34 4h1v1h-1zM30 5h4v1h-4zM30 6h1v1h-1zM33 6h1v1h-1zM30 7h1v1h-1zM34 7h1v1h-1zM30 8h1v1h-1zM35 8h1v1h-1zM38 -1h1v1h-1zM39 0h1v1h-1zM39 1h1v1h-1zM40 2h1v1h-1zM40 3h1v1h-1zM40 4h1v1h-1zM40 5h1v1h-1zM40 6h1v1h-1zM39 7h1v1h-1zM39 8h1v1h-1zM38 9h1v1h-1z" fill="#000"/></svg>
<svg class="a" style="left:594px;top:23px;" width="43" height="12" shape-rendering="crispEdges"><path d="M1 0h1v1h-1zM5 0h4v1h-4zM2 1h1v1h-1zM5 1h1v1h-1zM8 1h1v1h-1zM5 2h1v1h-1zM8 2h1v1h-1zM4 3h1v1h-1zM8 3h3v1h-3zM0 4h3v1h-3zM2 5h1v1h-1zM4 5h6v1h-6zM2 6h1v1h-1zM5 6h1v1h-1zM9 6h1v1h-1zM2 7h1v1h-1zM6 7h1v1h-1zM8 7h1v1h-1zM2 8h2v1h-2zM7 8h1v1h-1zM2 9h1v1h-1zM6 9h1v1h-1zM8 9h1v1h-1zM3 10h3v1h-3zM9 10h2v1h-2zM13 0h9v1h-9zM13 1h1v1h-1zM16 1h1v1h-1zM18 1h1v1h-1zM21 1h1v1h-1zM13 2h9v1h-9zM17 3h1v1h-1zM12 4h11v1h-11zM14 5h1v1h-1zM20 5h1v1h-1zM14 6h7v1h-7zM14 7h1v1h-1zM20 7h1v1h-1zM14 8h7v1h-7zM14 9h1v1h-1zM20 9h1v1h-1zM12 10h11v1h-11zM28 -1h1v1h-1zM27 0h1v1h-1zM27 1h1v1h-1zM26 2h1v1h-1zM26 3h1v1h-1zM26 4h1v1h-1zM26 5h1v1h-1zM26 6h1v1h-1zM27 7h1v1h-1zM27 8h1v1h-1zM28 9h1v1h-1zM32 1h3v1h-3zM33 2h1v1h-1zM33 3h1v1h-1zM33 4h1v1h-1zM33 5h1v1h-1zM33 6h1v1h-1zM33 7h1v1h-1zM32 8h3v1h-3zM38 -1h1v1h-1zM39 0h1v1h-1zM39 1h1v1h-1zM40 2h1v1h-1zM40 3h1v1h-1zM40 4h1v1h-1zM40 5h1v1h-1zM40 6h1v1h-1zM39 7h1v1h-1zM39 8h1v1h-1zM38 9h1v1h-1z" fill="#000"/></svg>
<svg class="a" style="left:648px;top:23px;" width="43" height="12" shape-rendering="crispEdges"><path d="M3 0h1v1h-1zM1 1h5v1h-5zM7 1h4v1h-4zM3 2h1v1h-1zM7 2h1v1h-1zM10 2h1v1h-1zM1 3h5v1h-5zM7 3h1v1h-1zM9 3h1v1h-1zM3 4h1v1h-1zM7 4h1v1h-1zM10 4h1v1h-1zM0 5h6v1h-6zM7 5h4v1h-4zM2 6h1v1h-1zM5 6h1v1h-1zM7 6h1v1h-1zM1 7h9v1h-9zM2 8h1v1h-1zM5 8h1v1h-1zM9 8h1v1h-1zM2 9h1v1h-1zM5 9h1v1h-1zM8 9h2v1h-2zM5 10h1v1h-1zM19 0h1v1h-1zM13 1h4v1h-4zM19 1h1v1h-1zM13 2h1v1h-1zM16 2h1v1h-1zM19 2h1v1h-1zM13 3h1v1h-1zM16 3h1v1h-1zM18 3h5v1h-5zM13 4h4v1h-4zM19 4h1v1h-1zM22 4h1v1h-1zM13 5h1v1h-1zM16 5h1v1h-1zM19 5h1v1h-1zM22 5h1v1h-1zM13 6h4v1h-4zM19 6h1v1h-1zM22 6h1v1h-1zM13 7h1v1h-1zM16 7h1v1h-1zM19 7h1v1h-1zM22 7h1v1h-1zM13 8h1v1h-1zM15 8h4v1h-4zM22 8h1v1h-1zM12 9h3v1h-3zM18 9h1v1h-1zM20 9h1v1h-1zM22 9h1v1h-1zM17 10h1v1h-1zM21 10h1v1h-1zM28 -1h1v1h-1zM27 0h1v1h-1zM27 1h1v1h-1zM26 2h1v1h-1zM26 3h1v1h-1zM26 4h1v1h-1zM26 5h1v1h-1zM26 6h1v1h-1zM27 7h1v1h-1zM27 8h1v1h-1zM28 9h1v1h-1zM30 1h1v1h-1zM35 1h1v1h-1zM30 2h1v1h-1zM35 2h1v1h-1zM30 3h1v1h-1zM35 3h1v1h-1zM30 4h6v1h-6zM30 5h1v1h-1zM35 5h1v1h-1zM30 6h1v1h-1zM35 6h1v1h-1zM30 7h1v1h-1zM35 7h1v1h-1zM30 8h1v1h-1zM35 8h1v1h-1zM38 -1h1v1h-1zM39 0h1v1h-1zM39 1h1v1h-1zM40 2h1v1h-1zM40 3h1v1h-1zM40 4h1v1h-1zM40 5h1v1h-1zM40 6h1v1h-1zM39 7h1v1h-1zM39 8h1v1h-1zM38 9h1v1h-1z" fill="#000"/></svg>
<div class="a" style="left:0px;top:38px;width:1366px;height:1px;background:#808080;"></div>
<div class="a" style="left:0px;top:39px;width:1366px;height:1px;background:#FFFFFF;"></div>
<div class="a" style="left:0px;top:39px;width:154px;height:30px;background:#D4D0C8;"></div>
<div class="a" style="left:0px;top:39px;width:153px;height:1px;background:#FFFFFF;"></div>
<div class="a" style="left:0px;top:39px;width:1px;height:29px;background:#FFFFFF;"></div>
<div class="a" style="left:153px;top:39px;width:1px;height:30px;background:#808080;"></div>
<div class="a" style="left:0px;top:68px;width:154px;height:1px;background:#808080;"></div>
<div class="a" style="left:3px;top:43px;width:3px;height:22px;background:#808080;"></div>
<div class="a" style="left:3px;top:43px;width:2px;height:21px;background:#FFFFFF;"></div>
<div class="a" style="left:4px;top:44px;width:1px;height:20px;background:#D4D0C8;"></div>
<div class="a" style="left:154px;top:39px;width:61px;height:30px;background:#D4D0C8;"></div>
<div class="a" style="left:154px;top:39px;width:60px;height:1px;background:#FFFFFF;"></div>
<div class="a" style="left:154px;top:39px;width:1px;height:29px;background:#FFFFFF;"></div>
<div class="a" style="left:214px;top:39px;width:1px;height:30px;background:#808080;"></div>
<div class="a" style="left:154px;top:68px;width:61px;height:1px;background:#808080;"></div>
<div class="a" style="left:157px;top:43px;width:3px;height:22px;background:#808080;"></div>
<div class="a" style="left:157px;top:43px;width:2px;height:21px;background:#FFFFFF;"></div>
<div class="a" style="left:158px;top:44px;width:1px;height:20px;background:#D4D0C8;"></div>
<div class="a" style="left:215px;top:39px;width:269px;height:30px;background:#D4D0C8;"></div>
<div class="a" style="left:215px;top:39px;width:268px;height:1px;background:#FFFFFF;"></div>
<div class="a" style="left:215px;top:39px;width:1px;height:29px;background:#FFFFFF;"></div>
<div class="a" style="left:483px;top:39px;width:1px;height:30px;background:#808080;"></div>
<div class="a" style="left:215px;top:68px;width:269px;height:1px;background:#808080;"></div>
<div class="a" style="left:218px;top:43px;width:3px;height:22px;background:#808080;"></div>
<div class="a" style="left:218px;top:43px;width:2px;height:21px;background:#FFFFFF;"></div>
<div class="a" style="left:219px;top:44px;width:1px;height:20px;background:#D4D0C8;"></div>
<div class="a" style="left:484px;top:39px;width:107px;height:30px;background:#D4D0C8;"></div>
<div class="a" style="left:484px;top:39px;width:106px;height:1px;background:#FFFFFF;"></div>
<div class="a" style="left:484px;top:39px;width:1px;height:29px;background:#FFFFFF;"></div>
<div class="a" style="left:590px;top:39px;width:1px;height:30px;background:#808080;"></div>
<div class="a" style="left:484px;top:68px;width:107px;height:1px;background:#808080;"></div>
<div class="a" style="left:487px;top:43px;width:3px;height:22px;background:#808080;"></div>
<div class="a" style="left:487px;top:43px;width:2px;height:21px;background:#FFFFFF;"></div>
<div class="a" style="left:488px;top:44px;width:1px;height:20px;background:#D4D0C8;"></div>
<div class="a" style="left:591px;top:39px;width:51px;height:30px;background:#D4D0C8;"></div>
<div class="a" style="left:591px;top:39px;width:50px;height:1px;background:#FFFFFF;"></div>
<div class="a" style="left:591px;top:39px;width:1px;height:29px;background:#FFFFFF;"></div>
<div class="a" style="left:641px;top:39px;width:1px;height:30px;background:#808080;"></div>
<div class="a" style="left:591px;top:68px;width:51px;height:1px;background:#808080;"></div>
<div class="a" style="left:594px;top:43px;width:3px;height:22px;background:#808080;"></div>
<div class="a" style="left:594px;top:43px;width:2px;height:21px;background:#FFFFFF;"></div>
<div class="a" style="left:595px;top:44px;width:1px;height:20px;background:#D4D0C8;"></div>
<div class="a" style="left:642px;top:39px;width:133px;height:30px;background:#D4D0C8;"></div>
<div class="a" style="left:642px;top:39px;width:132px;height:1px;background:#FFFFFF;"></div>
<div class="a" style="left:642px;top:39px;width:1px;height:29px;background:#FFFFFF;"></div>
<div class="a" style="left:774px;top:39px;width:1px;height:30px;background:#808080;"></div>
<div class="a" style="left:642px;top:68px;width:133px;height:1px;background:#808080;"></div>
<div class="a" style="left:645px;top:43px;width:3px;height:22px;background:#808080;"></div>
<div class="a" style="left:645px;top:43px;width:2px;height:21px;background:#FFFFFF;"></div>
<div class="a" style="left:646px;top:44px;width:1px;height:20px;background:#D4D0C8;"></div>
<div class="a" style="left:775px;top:39px;width:118px;height:30px;background:#D4D0C8;"></div>
<div class="a" style="left:775px;top:39px;width:117px;height:1px;background:#FFFFFF;"></div>
<div class="a" style="left:775px;top:39px;width:1px;height:29px;background:#FFFFFF;"></div>
<div class="a" style="left:892px;top:39px;width:1px;height:30px;background:#808080;"></div>
<div class="a" style="left:775px;top:68px;width:118px;height:1px;background:#808080;"></div>
<div class="a" style="left:778px;top:43px;width:3px;height:22px;background:#808080;"></div>
<div class="a" style="left:778px;top:43px;width:2px;height:21px;background:#FFFFFF;"></div>
<div class="a" style="left:779px;top:44px;width:1px;height:20px;background:#D4D0C8;"></div>
<div class="a" style="left:893px;top:39px;width:184px;height:30px;background:#D4D0C8;"></div>
<div class="a" style="left:893px;top:39px;width:183px;height:1px;background:#FFFFFF;"></div>
<div class="a" style="left:893px;top:39px;width:1px;height:29px;background:#FFFFFF;"></div>
<div class="a" style="left:1076px;top:39px;width:1px;height:30px;background:#808080;"></div>
<div class="a" style="left:893px;top:68px;width:184px;height:1px;background:#808080;"></div>
<div class="a" style="left:896px;top:43px;width:3px;height:22px;background:#808080;"></div>
<div class="a" style="left:896px;top:43px;width:2px;height:21px;background:#FFFFFF;"></div>
<div class="a" style="left:897px;top:44px;width:1px;height:20px;background:#D4D0C8;"></div>
<svg class="a" style="left:14px;top:46px" width="16" height="16" viewBox="0 0 16 16"><path d="M3 1.5H10L13.5 5V15.5H3Z" fill="#DDEBFB" stroke="#6F8FC0"/><path d="M10 1.5V5H13.5" fill="#fff" stroke="#6F8FC0"/><path d="M4 3H9V6H12.5V15H4Z" fill="#C2DCF6"/></svg>
<svg class="a" style="left:37px;top:46px" width="16" height="16" viewBox="0 0 16 16"><path d="M1 6H6L7 5H14V15H1Z" fill="#F6D34A" stroke="#C89C10"/><path d="M1 15L4 9H15.5L13 15Z" fill="#FAE070" stroke="#C89C10"/><path d="M5 9C6 4 9 3 12 3.5V1.5L15.5 5L12 8.5V6C9.5 5.5 7 7 5 9Z" fill="#2FA83C" stroke="#1B7A26" stroke-width=".6"/></svg>
<svg class="a" style="left:60px;top:46px" width="16" height="16" viewBox="0 0 16 16"><rect x="1" y="1" width="14" height="14" fill="#4A4AAE" stroke="#2C2C80"/><rect x="3.5" y="1.5" width="9" height="6" fill="#E8E8F4"/><rect x="4.5" y="3" width="7" height="1" fill="#9AA"/><rect x="4.5" y="5" width="7" height="1" fill="#9AA"/><rect x="4" y="10" width="8" height="5" fill="#E8E8F4"/><rect x="5" y="11" width="2" height="4" fill="#2C2C80"/></svg>
<svg class="a" style="left:84px;top:46px" width="16" height="16" viewBox="0 0 16 16"><path d="M5 1.5L10 0.5L12 6L6 7Z" fill="#D8EAFA" stroke="#7A90B0" stroke-width=".7"/><path d="M1 9L5 6H12L15 9V12L11 15H3L1 13Z" fill="#E4E4E4" stroke="#6A6A6A" stroke-width=".9"/><path d="M1 9L11 11L15 9M11 11V15" stroke="#8A8A8A" stroke-width=".7" fill="none"/><path d="M5 11.5L10 12.5" stroke="#202020" stroke-width="1.4"/></svg>
<svg class="a" style="left:107px;top:46px" width="16" height="16" viewBox="0 0 16 16"><path d="M3 1.5H10L13.5 5V15.5H3Z" fill="#D6E6F8" stroke="#6F8FC0"/><circle cx="9" cy="8" r="3.5" fill="#E8F4FF" stroke="#4A6FA0" stroke-width="1.2"/><path d="M6.5 10.5L2 15" stroke="#E0A020" stroke-width="2"/></svg>
<svg class="a" style="left:130px;top:46px" width="16" height="16" viewBox="0 0 16 16"><path d="M3.5 1.5H13" stroke="#302000" stroke-width="1.6" stroke-dasharray="1.2 .8"/><path d="M2.5 3H13.5V6L8 11L2.5 6Z" fill="#F4C400" stroke="#A08000" stroke-width=".8"/><path d="M8 11V14H1" stroke="#C09800" stroke-width="1.5" fill="none"/></svg>
<svg class="a" style="left:168px;top:46px" width="16" height="16" viewBox="0 0 16 16"><path d="M4.5 4C6.5 2.2 10.5 2 12 4.2C13.5 6.8 11.5 9.8 7.5 12" stroke="#A818A8" stroke-width="2.7" fill="none"/><path d="M0.3 8.8L1.8 2.8L7.2 8.8Z" fill="#B020B8"/></svg>
<svg class="a" style="left:191px;top:46px" width="16" height="16" viewBox="0 0 16 16"><g transform="translate(16 0) scale(-1 1)"><path d="M4.5 4C6.5 2.2 10.5 2 12 4.2C13.5 6.8 11.5 9.8 7.5 12" stroke="#A818A8" stroke-width="2.7" fill="none"/><path d="M0.3 8.8L1.8 2.8L7.2 8.8Z" fill="#B020B8"/></g></svg>
<svg class="a" style="left:229px;top:46px" width="16" height="16" viewBox="0 0 16 16"><path d="M8 0L11 3H9.5V6.5H13V5L16 8L13 11V9.5H9.5V13H11L8 16L5 13H6.5V9.5H3V11L0 8L3 5V6.5H6.5V3H5Z" fill="#1E78D8" stroke="#0E50A0" stroke-width=".5"/><rect x="5.5" y="5.5" width="5" height="5" fill="#D0E8FF" stroke="#0E50A0" stroke-width=".8"/></svg>
<svg class="a" style="left:252px;top:46px" width="16" height="16" viewBox="0 0 16 16"><rect x="0.5" y="0.5" width="15" height="15" fill="#8A1C22" stroke="#5A1018"/><path d="M3 5L8 2L11 6L6 9Z" fill="#F7B050"/><path d="M7 8L13 14L11 15L6 9Z" fill="#F09030"/><path d="M11 3H14V6M2 10V13H5" stroke="#fff" stroke-width=".8" fill="none"/></svg>
<svg class="a" style="left:283px;top:46px" width="16" height="16" viewBox="0 0 16 16"><rect x="1.5" y="0.5" width="14" height="14" fill="none" stroke="#101830" stroke-width="1" stroke-dasharray="1 1" shape-rendering="crispEdges"/><circle cx="10" cy="6.2" r="5" fill="#C8E4FA" stroke="#13234E" stroke-width="1.3"/><path d="M10 3.2V9.2M7 6.2H13" stroke="#E02020" stroke-width="2"/><path d="M5.8 10.2L1.8 14.2" stroke="#7A5A00" stroke-width="3.6" stroke-linecap="round"/><path d="M5.8 10.2L1.8 14.2" stroke="#F4B020" stroke-width="2.4" stroke-linecap="round"/></svg>
<svg class="a" style="left:306px;top:46px" width="16" height="16" viewBox="0 0 16 16"><rect x="1.5" y="0.5" width="14" height="14" fill="none" stroke="#101830" stroke-width="1" stroke-dasharray="1 1" shape-rendering="crispEdges"/><circle cx="10" cy="6.2" r="5" fill="#C8E4FA" stroke="#13234E" stroke-width="1.3"/><path d="M5.8 10.2L1.8 14.2" stroke="#7A5A00" stroke-width="3.6" stroke-linecap="round"/><path d="M5.8 10.2L1.8 14.2" stroke="#F4B020" stroke-width="2.4" stroke-linecap="round"/></svg>
<svg class="a" style="left:329px;top:46px" width="16" height="16" viewBox="0 0 16 16"><circle cx="10" cy="6.2" r="5" fill="#C8E4FA" stroke="#13234E" stroke-width="1.3"/><rect x="7.5" y="4.5" width="5" height="1.5" fill="#E03020"/><rect x="7.5" y="7" width="5" height="1.5" fill="#A05050"/><path d="M5.8 10.2L1.8 14.2" stroke="#7A5A00" stroke-width="3.6" stroke-linecap="round"/><path d="M5.8 10.2L1.8 14.2" stroke="#F4B020" stroke-width="2.4" stroke-linecap="round"/></svg>
<svg class="a" style="left:360px;top:46px" width="16" height="16" viewBox="0 0 16 16"><rect x="1.5" y="0.5" width="14" height="14" fill="none" stroke="#101830" stroke-width="1" stroke-dasharray="1 1" shape-rendering="crispEdges"/><circle cx="10" cy="6.2" r="5" fill="#C8E4FA" stroke="#13234E" stroke-width="1.3"/><rect x="7" y="5.4" width="6" height="1.7" fill="#E03020"/><path d="M5.8 10.2L1.8 14.2" stroke="#7A5A00" stroke-width="3.6" stroke-linecap="round"/><path d="M5.8 10.2L1.8 14.2" stroke="#F4B020" stroke-width="2.4" stroke-linecap="round"/></svg>
<svg class="a" style="left:383px;top:46px" width="16" height="16" viewBox="0 0 16 16"><circle cx="10" cy="6.2" r="5" fill="#C8E4FA" stroke="#13234E" stroke-width="1.3"/><rect x="7" y="5.4" width="6" height="1.7" fill="#E03020"/><path d="M5.8 10.2L1.8 14.2" stroke="#7A5A00" stroke-width="3.6" stroke-linecap="round"/><path d="M5.8 10.2L1.8 14.2" stroke="#F4B020" stroke-width="2.4" stroke-linecap="round"/></svg>
<svg class="a" style="left:414px;top:46px" width="16" height="16" viewBox="0 0 16 16"><defs><linearGradient id="bng" x1="0" y1="0" x2="0" y2="1"><stop offset="0" stop-color="#F0F0FA"/><stop offset=".5" stop-color="#A0A0C0"/><stop offset="1" stop-color="#505070"/></linearGradient></defs><g transform="rotate(45 8 8)"><rect x="0.5" y="5.6" width="3" height="4.8" rx="1" fill="#C8C8D8" stroke="#101020" stroke-width="1"/><path d="M3.5 5.2L13 4.2V11.8L3.5 10.8Z" fill="url(#bng)" stroke="#101020" stroke-width="1"/><ellipse cx="13.2" cy="8" rx="1.8" ry="3.9" fill="#8EC6F2" stroke="#101020" stroke-width="1"/></g><path d="M9.5 1.5L15 7" stroke="#1A5AC8" stroke-width="2.4"/><path d="M10 0.5L12 2" stroke="#70A8F0" stroke-width="1"/></svg>
<svg class="a" style="left:437px;top:46px" width="16" height="16" viewBox="0 0 16 16"><g transform="translate(16 0) scale(-1 1)"><defs><linearGradient id="bng" x1="0" y1="0" x2="0" y2="1"><stop offset="0" stop-color="#F0F0FA"/><stop offset=".5" stop-color="#A0A0C0"/><stop offset="1" stop-color="#505070"/></linearGradient></defs><g transform="rotate(45 8 8)"><rect x="0.5" y="5.6" width="3" height="4.8" rx="1" fill="#C8C8D8" stroke="#101020" stroke-width="1"/><path d="M3.5 5.2L13 4.2V11.8L3.5 10.8Z" fill="url(#bng)" stroke="#101020" stroke-width="1"/><ellipse cx="13.2" cy="8" rx="1.8" ry="3.9" fill="#8EC6F2" stroke="#101020" stroke-width="1"/></g></g><path d="M2 2.5H8" stroke="#1A5AC8" stroke-width="2.2"/><path d="M0 2.5L3.5 0V5Z" fill="#1A5AC8"/></svg>
<svg class="a" style="left:460px;top:46px" width="16" height="16" viewBox="0 0 16 16"><defs><linearGradient id="bng" x1="0" y1="0" x2="0" y2="1"><stop offset="0" stop-color="#F0F0FA"/><stop offset=".5" stop-color="#A0A0C0"/><stop offset="1" stop-color="#505070"/></linearGradient></defs><g transform="rotate(45 8 8)"><rect x="0.5" y="5.6" width="3" height="4.8" rx="1" fill="#C8C8D8" stroke="#101020" stroke-width="1"/><path d="M3.5 5.2L13 4.2V11.8L3.5 10.8Z" fill="url(#bng)" stroke="#101020" stroke-width="1"/><ellipse cx="13.2" cy="8" rx="1.8" ry="3.9" fill="#8EC6F2" stroke="#101020" stroke-width="1"/></g><path d="M9 6.5L15 1" stroke="#E02010" stroke-width="2.4"/></svg>
<svg class="a" style="left:497px;top:46px" width="16" height="16" viewBox="0 0 16 16"><path d="M8 1.5L14 4V12L8 14.5L2 12V4Z" fill="none" stroke="#6A9A00" stroke-width="1.2"/><path d="M2.5 4.2L8 6.5L13.5 4.2L8 2Z" fill="#6AAA00"/><path d="M2.5 4.5V11.8L7.5 14V6.8Z" fill="none"/><path d="M13.5 4.5V11.8L8.5 14V6.8Z" fill="none"/><path d="M2 4L8 6.5L14 4M8 6.5V14.5M2 9.5L8 11L14 9.5" stroke="#6A9A00" stroke-width="1" fill="none"/></svg>
<svg class="a" style="left:520px;top:46px" width="16" height="16" viewBox="0 0 16 16"><path d="M8 1.5L14 4V12L8 14.5L2 12V4Z" fill="none" stroke="#6A9A00" stroke-width="1.2"/><path d="M2.5 4.2L8 6.5L13.5 4.2L8 2Z" fill="none"/><path d="M2.5 4.5V11.8L7.5 14V6.8Z" fill="#6AAA00"/><path d="M13.5 4.5V11.8L8.5 14V6.8Z" fill="none"/><path d="M2 4L8 6.5L14 4M8 6.5V14.5M2 9.5L8 11L14 9.5" stroke="#6A9A00" stroke-width="1" fill="none"/></svg>
<svg class="a" style="left:543px;top:46px" width="16" height="16" viewBox="0 0 16 16"><path d="M8 1.5L14 4V12L8 14.5L2 12V4Z" fill="none" stroke="#6A9A00" stroke-width="1.2"/><path d="M2.5 4.2L8 6.5L13.5 4.2L8 2Z" fill="none"/><path d="M2.5 4.5V11.8L7.5 14V6.8Z" fill="none"/><path d="M13.5 4.5V11.8L8.5 14V6.8Z" fill="#6AAA00"/><path d="M2 4L8 6.5L14 4M8 6.5V14.5M2 9.5L8 11L14 9.5" stroke="#6A9A00" stroke-width="1" fill="none"/></svg>
<svg class="a" style="left:566px;top:46px" width="16" height="16" viewBox="0 0 16 16"><path d="M8 1.5L14 4V12L8 14.5L2 12V4Z" fill="none" stroke="#6A9A00" stroke-width="1.2"/><path d="M2.5 4.2L8 6.5L13.5 4.2L8 2Z" fill="none"/><path d="M2.5 4.5V11.8L7.5 14V6.8Z" fill="none"/><path d="M13.5 4.5V11.8L8.5 14V6.8Z" fill="none"/><path d="M2 4L8 6.5L14 4M8 6.5V14.5M2 9.5L8 11L14 9.5" stroke="#6A9A00" stroke-width="1" fill="none"/></svg>
<svg class="a" style="left:605px;top:46px" width="16" height="16" viewBox="0 0 16 16"><rect x="0" y="0" width="16" height="5.5" fill="#3A2222"/><path d="M0.8 5.5V13L7.5 16L14.8 13V5.5L7.5 8.5Z" fill="#F6E2E2" stroke="#B02030" stroke-width="1.1"/><path d="M2 4L7.5 1.2L14 4L7.5 7.5Z" fill="#F26A6A"/><path d="M0.8 5.5L7.5 8.5L14.8 5.5M7.5 8.5V16" stroke="#B02030" stroke-width="1.1" fill="none"/><g fill="#802020"><circle cx="3" cy="12.5" r=".7"/><circle cx="4.8" cy="11.2" r=".7"/><circle cx="10.2" cy="11.2" r=".7"/><circle cx="12" cy="12.5" r=".7"/></g></svg>
<svg class="a" style="left:656px;top:46px" width="16" height="16" viewBox="0 0 16 16"><circle cx="8" cy="8" r="6.5" fill="none" stroke="#1E60C8" stroke-width="1.2"/><ellipse cx="8" cy="8" rx="3" ry="6.5" fill="none" stroke="#1E60C8"/><path d="M1.5 5.5H14.5M1.5 10.5H14.5" stroke="#1E60C8"/></svg>
<svg class="a" style="left:692px;top:46px" width="16" height="16" viewBox="0 0 16 16"><defs><radialGradient id="sg" cx=".4" cy=".35" r=".7"><stop offset="0" stop-color="#A8D0FF"/><stop offset=".5" stop-color="#2060D0"/><stop offset="1" stop-color="#0A2A80"/></radialGradient></defs><circle cx="8" cy="8" r="7" fill="url(#sg)"/></svg>
<svg class="a" style="left:728px;top:46px" width="16" height="16" viewBox="0 0 16 16"><path d="M1.5 6L5 2H14.5V10L11 14.5H1.5Z" fill="#F07070" stroke="#E02020"/><path d="M1.5 6H11V14.5M11 6L14.5 2" stroke="#E02020" fill="none"/><path d="M2 6.5H10.5V14H2Z" fill="#F8A0A0"/></svg>
<svg class="a" style="left:750px;top:46px" width="16" height="16" viewBox="0 0 16 16"><path d="M1.5 6L5 2H14.5V10L11 14.5H1.5Z" fill="#fff" stroke="#E02020"/><path d="M1.5 6H11V14.5M11 6L14.5 2" stroke="#E02020" fill="none"/></svg>
<svg class="a" style="left:789px;top:46px" width="16" height="16" viewBox="0 0 16 16"><path d="M2 13L12 2L15 5L5 15Z" fill="#F4D020" stroke="#806000" stroke-width=".8"/><path d="M2 13L5 15L3 16L1 15Z" fill="#F08080"/></svg>
<svg class="a" style="left:812px;top:46px" width="16" height="16" viewBox="0 0 16 16"><path d="M1 9L8 1L11 4L4 12Z" fill="#F4D020" stroke="#806000" stroke-width=".7"/><path d="M5 13L12 5L15 8L8 16Z" fill="#F4D020" stroke="#806000" stroke-width=".7"/><circle cx="2" cy="11" r="1.3" fill="#F08080"/><circle cx="6" cy="15" r="1.3" fill="#F08080"/></svg>
<svg class="a" style="left:856px;top:46px" width="16" height="16" viewBox="0 0 16 16"><path d="M2 13L12 2L15 5L5 15Z" fill="#F4D020" stroke="#806000" stroke-width=".8"/><path d="M2 13L5 15L3 16L1 15Z" fill="#F08080"/><path d="M5 4L9 8" stroke="#2070D0" stroke-width="2"/></svg>
<svg class="a" style="left:907px;top:46px" width="16" height="16" viewBox="0 0 16 16"><path d="M0 6L10 16" stroke="#101010" stroke-width="1.3"/><path d="M7.5 4C7.5 0.5 15 0.5 15 4C15 6.5 12.5 6.5 12.5 8.5H10.5C10.5 5.5 13 5.5 13 4C13 2.5 9.8 2.5 9.8 4Z" fill="#E04818" stroke="#C03010" stroke-width=".5"/><rect x="10.5" y="9.8" width="2.2" height="2" fill="#E04818"/></svg>
<svg class="a" style="left:930px;top:46px" width="16" height="16" viewBox="0 0 16 16"><g fill="#fff" stroke="#A020A0" stroke-width="1.3"><rect x="1" y="1" width="3.5" height="3.5"/><rect x="1" y="6.2" width="3.5" height="3.5"/><rect x="1" y="11.5" width="3.5" height="3.5"/></g><rect x="11.5" y="1" width="3.5" height="3.5" fill="#fff" stroke="#D08030" stroke-width="1.3"/><rect x="11.5" y="6.2" width="3.5" height="3.5" fill="#90D060" stroke="#309030" stroke-width="1.3"/><rect x="11.5" y="11.5" width="3.5" height="3.5" fill="#fff" stroke="#3070D0" stroke-width="1.3"/><path d="M5.5 8H8.5" stroke="#3080E0" stroke-width="2"/><path d="M8 5.5L11 8L8 10.5Z" fill="#3080E0"/></svg>
<svg class="a" style="left:961px;top:46px" width="16" height="16" viewBox="0 0 16 16"><path d="M2 1.5V14.5M1 8H7" stroke="#1E70D0" stroke-width="2.2"/><circle cx="2" cy="2" r="1.8" fill="#1E70D0"/><circle cx="2" cy="14" r="1.8" fill="#1E70D0"/><circle cx="5" cy="8" r="2.3" fill="#1E70D0"/><rect x="11.5" y="4" width="3.5" height="9" fill="#F06020"/><path d="M7 8.5H12" stroke="#F08030" stroke-width="2.4"/></svg>
<svg class="a" style="left:984px;top:46px" width="16" height="16" viewBox="0 0 16 16"><rect x="0.5" y="0.5" width="15" height="15" rx="2" fill="#F05010"/><path d="M3 6L8 2L12 7L7 11Z" fill="#F8B060"/><path d="M7 9L12 15H15V13L10 7Z" fill="#F09040"/></svg>
<svg class="a" style="left:1007px;top:46px" width="16" height="16" viewBox="0 0 16 16"><path d="M1.5 2H14.5V5.5H12.5L12 4.5H6.5L10 8.5L6.5 12H12L12.5 11H14.5V15H1.5V13L6 8.5L1.5 4Z" fill="#1E78E0" stroke="#0A4AA0" stroke-width=".7"/></svg>
<svg class="a" style="left:1029px;top:46px" width="16" height="16" viewBox="0 0 16 16"><rect x="1.5" y="1.5" width="9" height="9" fill="none" stroke="#9020A0" stroke-width="1.4" stroke-dasharray="1.5 1"/><rect x="5.5" y="5.5" width="9" height="9" fill="none" stroke="#9020A0" stroke-width="1.4" stroke-dasharray="1.5 1"/></svg>
<svg class="a" style="left:1052px;top:46px" width="16" height="16" viewBox="0 0 16 16"><rect x="1.5" y="1.5" width="8" height="11" fill="none" stroke="#A0108A" stroke-width="1.6"/><rect x="6.5" y="4.5" width="8" height="11" fill="none" stroke="#A0108A" stroke-width="1.6"/></svg>
<div class="a" style="left:276px;top:45px;width:1px;height:18px;background:#808080;"></div>
<div class="a" style="left:277px;top:45px;width:1px;height:18px;background:#FFFFFF;"></div>
<div class="a" style="left:353px;top:45px;width:1px;height:18px;background:#808080;"></div>
<div class="a" style="left:354px;top:45px;width:1px;height:18px;background:#FFFFFF;"></div>
<div class="a" style="left:407px;top:45px;width:1px;height:18px;background:#808080;"></div>
<div class="a" style="left:408px;top:45px;width:1px;height:18px;background:#FFFFFF;"></div>
<div class="a" style="left:848px;top:45px;width:1px;height:18px;background:#808080;"></div>
<div class="a" style="left:849px;top:45px;width:1px;height:18px;background:#FFFFFF;"></div>
<div class="a" style="left:954px;top:45px;width:1px;height:18px;background:#808080;"></div>
<div class="a" style="left:955px;top:45px;width:1px;height:18px;background:#FFFFFF;"></div>
<svg class="a" style="left:629px;top:53px" width="5" height="3" viewBox="0 0 5 3"><path d="M0 0H5L2.5 3Z" fill="#000"/></svg>
<svg class="a" style="left:680px;top:53px" width="5" height="3" viewBox="0 0 5 3"><path d="M0 0H5L2.5 3Z" fill="#000"/></svg>
<svg class="a" style="left:716px;top:53px" width="5" height="3" viewBox="0 0 5 3"><path d="M0 0H5L2.5 3Z" fill="#000"/></svg>
<svg class="a" style="left:836px;top:53px" width="5" height="3" viewBox="0 0 5 3"><path d="M0 0H5L2.5 3Z" fill="#000"/></svg>
<svg class="a" style="left:880px;top:53px" width="5" height="3" viewBox="0 0 5 3"><path d="M0 0H5L2.5 3Z" fill="#000"/></svg>
<div class="a" style="left:0px;top:69px;width:269px;height:30px;background:#D4D0C8;"></div>
<div class="a" style="left:0px;top:69px;width:268px;height:1px;background:#FFFFFF;"></div>
<div class="a" style="left:0px;top:69px;width:1px;height:29px;background:#FFFFFF;"></div>
<div class="a" style="left:268px;top:69px;width:1px;height:30px;background:#808080;"></div>
<div class="a" style="left:0px;top:98px;width:269px;height:1px;background:#808080;"></div>
<div class="a" style="left:3px;top:73px;width:3px;height:22px;background:#808080;"></div>
<div class="a" style="left:3px;top:73px;width:2px;height:21px;background:#FFFFFF;"></div>
<div class="a" style="left:4px;top:74px;width:1px;height:20px;background:#D4D0C8;"></div>
<div class="a" style="left:269px;top:69px;width:280px;height:30px;background:#D4D0C8;"></div>
<div class="a" style="left:269px;top:69px;width:279px;height:1px;background:#FFFFFF;"></div>
<div class="a" style="left:269px;top:69px;width:1px;height:29px;background:#FFFFFF;"></div>
<div class="a" style="left:548px;top:69px;width:1px;height:30px;background:#808080;"></div>
<div class="a" style="left:269px;top:98px;width:280px;height:1px;background:#808080;"></div>
<div class="a" style="left:272px;top:73px;width:3px;height:22px;background:#808080;"></div>
<div class="a" style="left:272px;top:73px;width:2px;height:21px;background:#FFFFFF;"></div>
<div class="a" style="left:273px;top:74px;width:1px;height:20px;background:#D4D0C8;"></div>
<div class="a" style="left:549px;top:69px;width:173px;height:30px;background:#D4D0C8;"></div>
<div class="a" style="left:549px;top:69px;width:172px;height:1px;background:#FFFFFF;"></div>
<div class="a" style="left:549px;top:69px;width:1px;height:29px;background:#FFFFFF;"></div>
<div class="a" style="left:721px;top:69px;width:1px;height:30px;background:#808080;"></div>
<div class="a" style="left:549px;top:98px;width:173px;height:1px;background:#808080;"></div>
<div class="a" style="left:552px;top:73px;width:3px;height:22px;background:#808080;"></div>
<div class="a" style="left:552px;top:73px;width:2px;height:21px;background:#FFFFFF;"></div>
<div class="a" style="left:553px;top:74px;width:1px;height:20px;background:#D4D0C8;"></div>
<div class="a" style="left:722px;top:69px;width:459px;height:30px;background:#D4D0C8;"></div>
<div class="a" style="left:722px;top:69px;width:458px;height:1px;background:#FFFFFF;"></div>
<div class="a" style="left:722px;top:69px;width:1px;height:29px;background:#FFFFFF;"></div>
<div class="a" style="left:1180px;top:69px;width:1px;height:30px;background:#808080;"></div>
<div class="a" style="left:722px;top:98px;width:459px;height:1px;background:#808080;"></div>
<div class="a" style="left:725px;top:73px;width:3px;height:22px;background:#808080;"></div>
<div class="a" style="left:725px;top:73px;width:2px;height:21px;background:#FFFFFF;"></div>
<div class="a" style="left:726px;top:74px;width:1px;height:20px;background:#D4D0C8;"></div>
<svg class="a" style="left:15px;top:76px" width="16" height="16" viewBox="0 0 16 16"><path d="M5.5 1H10.5V5.5H15V10.5H10.5V15H5.5V10.5H1V5.5H5.5Z" fill="#38B030" stroke="#208020" stroke-width=".8"/><path d="M6.5 2H9V6.5H14V8H9" fill="#90E080"/></svg>
<svg class="a" style="left:50px;top:76px" width="16" height="16" viewBox="0 0 16 16"><path d="M3 3L13 13" stroke="#208020" stroke-width="1.4"/><path d="M0 2.5H5M2.5 0V5M11 13.5H16M13.5 11V16" stroke="#5A5AA0" stroke-width="1.2"/></svg>
<svg class="a" style="left:87px;top:76px" width="16" height="16" viewBox="0 0 16 16"><path d="M10.5 0.9A7.2 7.2 0 1 0 15.3 6.5" fill="none" stroke="#1A5A1A" stroke-width="1.1"/><path d="M5.5 8H10.5M8 5.5V10.5M10.5 3H15.5M13 0.5V5.5" stroke="#F05A10" stroke-width="2"/></svg>
<svg class="a" style="left:123px;top:76px" width="16" height="16" viewBox="0 0 16 16"><path d="M2 3V14H13" stroke="#208020" stroke-width="2" fill="none"/><path d="M5 2H14V11" stroke="#208020" stroke-width="2" fill="none"/><circle cx="8" cy="8" r="1.5" fill="#5A5A80"/><circle cx="14" cy="2" r="1.6" fill="#5A5A80"/><circle cx="2" cy="14" r="1.6" fill="#5A5A80"/></svg>
<svg class="a" style="left:159px;top:76px" width="16" height="16" viewBox="0 0 16 16"><path d="M2 15V8C2 5 4 3 7 3" stroke="#5A5AA0" stroke-width="1.6" fill="none" stroke-dasharray="3 1.5"/><path d="M7 3H15" stroke="#5A5AA0" stroke-width="1.6"/><path d="M2 8C2 5 4 3 7 3" stroke="#208020" stroke-width="1.6" fill="none"/></svg>
<svg class="a" style="left:195px;top:76px" width="16" height="16" viewBox="0 0 16 16"><path d="M1.5 15V10.5L3 9H14L15 7.5V2" stroke="#107A10" stroke-width="1.8" fill="none"/></svg>
<svg class="a" style="left:231px;top:76px" width="16" height="16" viewBox="0 0 16 16"><defs><linearGradient id="cg" x1="0" x2="1"><stop offset="0" stop-color="#D8F0D8"/><stop offset=".45" stop-color="#B8E0B8"/><stop offset=".65" stop-color="#5AA85A"/><stop offset="1" stop-color="#2A7A2A"/></linearGradient></defs><path d="M1 2.5V13C1 15.5 15 15.5 15 13V2.5Z" fill="url(#cg)"/><ellipse cx="8" cy="2.5" rx="7" ry="2" fill="#0A6A1A"/></svg>
<svg class="a" style="left:283px;top:76px" width="16" height="16" viewBox="0 0 16 16"><rect x="1" y="9" width="6" height="6" fill="#fff" stroke="#1E6ACD" stroke-width="1.8"/><rect x="9" y="1" width="6" height="6" fill="#fff" stroke="#A0108A" stroke-width="1.8"/><path d="M9 15V11H13L12 9L15 11.5L12 14" fill="#1E6ACD" stroke="#1E6ACD"/><path d="M2 2L6 6" stroke="#F8B020" stroke-width="3"/></svg>
<svg class="a" style="left:306px;top:76px" width="16" height="16" viewBox="0 0 16 16"><rect x="1" y="9" width="6" height="6" fill="#fff" stroke="#1E6ACD" stroke-width="1.8"/><rect x="9" y="1" width="6" height="6" fill="#fff" stroke="#A0108A" stroke-width="1.8"/><path d="M9 15V11H13L12 9L15 11.5L12 14" fill="#1E6ACD" stroke="#1E6ACD"/></svg>
<svg class="a" style="left:329px;top:76px" width="16" height="16" viewBox="0 0 16 16"><path d="M1 1H6V8H1" fill="none" stroke="#A0108A" stroke-width="1.8"/><rect x="3" y="3" width="1.5" height="3" fill="#A0108A"/><path d="M8 9V15H15V9" fill="none" stroke="#1E6ACD" stroke-width="1.8"/><path d="M9 3L12 1V6Z M11 3C14 3 14 6 13 8" fill="none" stroke="#1E6ACD" stroke-width="1.2"/></svg>
<svg class="a" style="left:352px;top:76px" width="16" height="16" viewBox="0 0 16 16"><path d="M2 1H6V8H2M14 1H10V8H14" fill="none" stroke="#1E6ACD" stroke-width="1.8"/><rect x="7.5" y="1" width="1.5" height="8" fill="#606080"/><path d="M2 13H12M10 11L14 13L10 15" stroke="#1E6ACD" stroke-width="1.5" fill="none"/></svg>
<svg class="a" style="left:375px;top:76px" width="16" height="16" viewBox="0 0 16 16"><rect x="1" y="5" width="5" height="10" fill="#fff" stroke="#1E6ACD" stroke-width="1.8"/><rect x="9" y="1" width="6" height="14" fill="#fff" stroke="#A0108A" stroke-width="1.8"/><path d="M1 4L5 1" stroke="#1E6ACD" stroke-width="1.4"/></svg>
<svg class="a" style="left:398px;top:76px" width="16" height="16" viewBox="0 0 16 16"><rect x="1" y="9" width="6" height="6" fill="#fff" stroke="#1E6ACD" stroke-width="1.8"/><path d="M9 15V11H13L12 9L15 11.5L12 14" fill="#1E6ACD" stroke="#1E6ACD"/><path d="M11 1V7M8 4H14" stroke="#E02020" stroke-width="2"/></svg>
<svg class="a" style="left:421px;top:76px" width="16" height="16" viewBox="0 0 16 16"><path d="M1 3L6 1H15L10 4Z" fill="#7AB0F0"/><path d="M10 4L15 1V12L10 15Z" fill="#8A1A8A"/><path d="M3 8L7 12" stroke="#1E6ACD" stroke-width="2"/></svg>
<svg class="a" style="left:452px;top:76px" width="16" height="16" viewBox="0 0 16 16"><path d="M2 3H6V7" stroke="#1E6ACD" stroke-width="2" fill="none"/><path d="M1 14H13V2" stroke="#A0108A" stroke-width="2" fill="none"/><path d="M5 6L10 11M7 11H10V8" stroke="#A0108A" stroke-width="1.6" fill="none"/></svg>
<svg class="a" style="left:488px;top:76px" width="16" height="16" viewBox="0 0 16 16"><rect x="1.5" y="1.5" width="5" height="5" fill="#fff" stroke="#A0108A" stroke-width="1.8"/><rect x="9.5" y="1.5" width="5" height="5" fill="#fff" stroke="#A0108A" stroke-width="1.8"/><rect x="1.5" y="9.5" width="5" height="5" fill="#fff" stroke="#1E6ACD" stroke-width="1.8"/><rect x="9.5" y="9.5" width="5" height="5" fill="#fff" stroke="#A0108A" stroke-width="1.8"/></svg>
<svg class="a" style="left:510px;top:76px" width="16" height="16" viewBox="0 0 16 16"><path d="M1 3H13V13H1Z" fill="none" stroke="#4070D0" stroke-width="1.2" stroke-dasharray="2 1"/><path d="M3 8H11M8 5L12 8L8 11" stroke="#4070D0" stroke-width="1.5" fill="none"/></svg>
<svg class="a" style="left:563px;top:76px" width="16" height="16" viewBox="0 0 16 16"><circle cx="7" cy="6" r="5.5" fill="#F8F060" stroke="#D0C020" stroke-width=".6"/><rect x="5" y="11" width="4" height="3" fill="#A0A0A0"/><path d="M13 2V14M11 4L13 1.5L15 4M11 12L13 14.5L15 12" stroke="#6060A0" stroke-width="1.4" fill="none"/></svg>
<svg class="a" style="left:586px;top:76px" width="16" height="16" viewBox="0 0 16 16"><path d="M8 2H15M8 4.5H15M8 7H15" stroke="#6060A0" stroke-width="1" stroke-dasharray="2 1"/><path d="M12 6L3 14M2 9V15H8" stroke="#6060A0" stroke-width="2" fill="none"/></svg>
<svg class="a" style="left:617px;top:76px" width="16" height="16" viewBox="0 0 16 16"><path d="M1.5 1V15M14.5 1V15" stroke="#6060A0" stroke-width="1.2"/><path d="M3 8H13M6 5L3 8L6 11M10 5L13 8L10 11" stroke="#6060A0" stroke-width="1.4" fill="none"/></svg>
<svg class="a" style="left:652px;top:76px" width="16" height="16" viewBox="0 0 16 16"><path d="M4 1L1 5H3V9M4 1L7 5H5V9M12 1L9 5H11V9M12 1L15 5H13V9" stroke="#404080" stroke-width="1.2" fill="#A0A0D0"/><rect x="1.5" y="9.5" width="5" height="5" fill="#fff" stroke="#404080" stroke-width="1.5"/><rect x="9.5" y="9.5" width="5" height="5" fill="#fff" stroke="#404080" stroke-width="1.5"/></svg>
<svg class="a" style="left:697px;top:76px" width="16" height="16" viewBox="0 0 16 16"><pattern id="ck" width="4" height="4" patternUnits="userSpaceOnUse"><rect width="2" height="2" fill="#7070B0"/><rect x="2" y="2" width="2" height="2" fill="#7070B0"/></pattern><rect x="1" y="1" width="14" height="14" fill="url(#ck)"/></svg>
<svg class="a" style="left:735px;top:76px" width="16" height="16" viewBox="0 0 16 16"><defs><linearGradient id="bg1" x1="0" x2="1"><stop offset="0" stop-color="#1A6AD8"/><stop offset=".4" stop-color="#50A8F8"/><stop offset="1" stop-color="#0A4AA8"/></linearGradient></defs><path d="M2 3V14C2 15.5 14 15.5 14 14V3Z" fill="url(#bg1)"/><ellipse cx="8" cy="3" rx="6" ry="2" fill="#3A90E8"/><path d="M8 5L5 9H7V13H9V9H11Z" fill="#fff"/></svg>
<svg class="a" style="left:758px;top:76px" width="16" height="16" viewBox="0 0 16 16"><defs><linearGradient id="bg1" x1="0" x2="1"><stop offset="0" stop-color="#1A6AD8"/><stop offset=".4" stop-color="#50A8F8"/><stop offset="1" stop-color="#0A4AA8"/></linearGradient></defs><path d="M2 3V14C2 15.5 14 15.5 14 14V3Z" fill="url(#bg1)"/><ellipse cx="8" cy="3" rx="6" ry="2" fill="#3A90E8"/><path d="M4 9C4 12 12 12 12 9" stroke="#fff" stroke-width="1.5" fill="none"/></svg>
<svg class="a" style="left:780px;top:76px" width="16" height="16" viewBox="0 0 16 16"><path d="M1 15C1 7 6 2 14 2L15 6C9 6 6 9 5 15Z" fill="#1E78E0"/><path d="M2 13C3 7 7 4 13 3" stroke="#80C0FF" stroke-width="1"/></svg>
<svg class="a" style="left:803px;top:76px" width="16" height="16" viewBox="0 0 16 16"><path d="M5 1H11V8H15L8 15L1 8H5Z" fill="#1E78E0"/><path d="M6 2H8V9" stroke="#80C0FF"/></svg>
<svg class="a" style="left:827px;top:76px" width="16" height="16" viewBox="0 0 16 16"><defs><linearGradient id="bg1" x1="0" x2="1"><stop offset="0" stop-color="#1A6AD8"/><stop offset=".4" stop-color="#50A8F8"/><stop offset="1" stop-color="#0A4AA8"/></linearGradient></defs><rect x="1" y="2" width="14" height="13" rx="2" fill="url(#bg1)"/><path d="M10 1H13C15 1 15 3 15 5V8C13 7 11 5 10 1Z" fill="#E02020"/></svg>
<svg class="a" style="left:871px;top:76px" width="16" height="16" viewBox="0 0 16 16"><rect x="1.5" y="1.5" width="13" height="13" fill="#fff" stroke="#1E6ACD" stroke-width="1.2"/><rect x="4" y="4" width="8" height="8" fill="#1E6ACD"/><rect x="5.5" y="5.5" width="5" height="5" fill="#0A3080"/></svg>
<svg class="a" style="left:894px;top:76px" width="16" height="16" viewBox="0 0 16 16"><defs><linearGradient id="bg1" x1="0" x2="1"><stop offset="0" stop-color="#1A6AD8"/><stop offset=".4" stop-color="#50A8F8"/><stop offset="1" stop-color="#0A4AA8"/></linearGradient></defs><rect x="6" y="1" width="9" height="14" rx="2" fill="url(#bg1)"/><circle cx="5.5" cy="9.5" r="5" fill="#3A88E0" stroke="#1A50B0" stroke-width=".6"/></svg>
<svg class="a" style="left:930px;top:76px" width="16" height="16" viewBox="0 0 16 16"><defs><linearGradient id="bg1" x1="0" x2="1"><stop offset="0" stop-color="#1A6AD8"/><stop offset=".4" stop-color="#50A8F8"/><stop offset="1" stop-color="#0A4AA8"/></linearGradient></defs><path d="M1 3L2 1H9L15 13L13 15H1Z" fill="url(#bg1)"/><path d="M9 1L15 13L13 15L7 3Z" fill="#E03010"/></svg>
<svg class="a" style="left:953px;top:76px" width="16" height="16" viewBox="0 0 16 16"><path d="M1 9L5 6H15V9L11 12H1Z" fill="#2A7AE0"/><path d="M1 9H11L15 6" stroke="#80C0FF"/><path d="M1 10H11V12H1Z" fill="#E03010"/></svg>
<svg class="a" style="left:976px;top:76px" width="16" height="16" viewBox="0 0 16 16"><path d="M1 4L4 1H15V12L12 15H1Z" fill="#1A50B0"/><rect x="2" y="4" width="10" height="10" fill="#0A3AA0"/><path d="M1 4H12V15M12 4L15 1" stroke="#5A9AF0" fill="none"/></svg>
<svg class="a" style="left:1007px;top:76px" width="16" height="16" viewBox="0 0 16 16"><defs><linearGradient id="bg1" x1="0" x2="1"><stop offset="0" stop-color="#1A6AD8"/><stop offset=".4" stop-color="#50A8F8"/><stop offset="1" stop-color="#0A4AA8"/></linearGradient></defs><rect x="1" y="7" width="13" height="8" rx="1" fill="url(#bg1)"/><path d="M6 8L12 2" stroke="#F07820" stroke-width="3"/></svg>
<svg class="a" style="left:1030px;top:76px" width="16" height="16" viewBox="0 0 16 16"><path d="M1 4L4 1H15V12L12 15H1Z" fill="#223A60"/><rect x="2" y="4" width="4.5" height="4.5" fill="#2A70D0"/><rect x="7.5" y="4" width="4.5" height="4.5" fill="#2A70D0"/><rect x="2" y="9.5" width="4.5" height="4.5" fill="#2A70D0"/><rect x="7.5" y="9.5" width="4.5" height="4.5" fill="#2A70D0"/></svg>
<svg class="a" style="left:1053px;top:76px" width="16" height="16" viewBox="0 0 16 16"><path d="M1 9L7 14L15 8L9 4Z" fill="#fff" stroke="#404040" stroke-width=".8"/><path d="M4 2H13V9L8 12L4 9Z" fill="#2A8AF0"/></svg>
<svg class="a" style="left:1076px;top:76px" width="16" height="16" viewBox="0 0 16 16"><rect x="1" y="1" width="14" height="14" rx="2" fill="#2A8AE0"/><rect x="2.5" y="2.5" width="11" height="11" fill="#E8F2FF"/><path d="M4 7L6.5 5L9 7V12H4Z M10.5 4H12.5V12H10.5Z" fill="none" stroke="#2A70C0" stroke-width="1.2"/></svg>
<svg class="a" style="left:1107px;top:76px" width="16" height="16" viewBox="0 0 16 16"><rect x="1" y="1" width="14" height="14" rx="2" fill="#2A8AE0"/><rect x="2.5" y="2.5" width="11" height="11" fill="#E8F2FF"/><rect x="4" y="4" width="3" height="3" fill="#802060"/><rect x="9" y="4" width="3" height="3" fill="none" stroke="#2A70C0"/><rect x="4" y="9" width="3" height="3" fill="none" stroke="#2A70C0"/><rect x="9" y="9" width="3" height="3" fill="none" stroke="#2A70C0"/></svg>
<svg class="a" style="left:1142px;top:76px" width="16" height="16" viewBox="0 0 16 16"><path d="M1.2 4.3L5.3 0.5H10.8V4.3H15.5V10.6L10.5 15.5H1.2Z" fill="#E81818" stroke="#301020" stroke-width=".9"/><path d="M2 6H5.3V10.6H9.7V14.7H2Z" fill="#3A8AE8" stroke="#0A2A70" stroke-width=".7"/><path d="M5.5 1.5L10 6M10 6L14.5 10.5" stroke="#901010" stroke-width=".6"/></svg>
<div class="a" style="left:445px;top:75px;width:1px;height:18px;background:#808080;"></div>
<div class="a" style="left:446px;top:75px;width:1px;height:18px;background:#FFFFFF;"></div>
<div class="a" style="left:609px;top:75px;width:1px;height:18px;background:#808080;"></div>
<div class="a" style="left:610px;top:75px;width:1px;height:18px;background:#FFFFFF;"></div>
<div class="a" style="left:690px;top:75px;width:1px;height:18px;background:#808080;"></div>
<div class="a" style="left:691px;top:75px;width:1px;height:18px;background:#FFFFFF;"></div>
<div class="a" style="left:864px;top:75px;width:1px;height:18px;background:#808080;"></div>
<div class="a" style="left:865px;top:75px;width:1px;height:18px;background:#FFFFFF;"></div>
<div class="a" style="left:1000px;top:75px;width:1px;height:18px;background:#808080;"></div>
<div class="a" style="left:1001px;top:75px;width:1px;height:18px;background:#FFFFFF;"></div>
<div class="a" style="left:1100px;top:75px;width:1px;height:18px;background:#808080;"></div>
<div class="a" style="left:1101px;top:75px;width:1px;height:18px;background:#FFFFFF;"></div>
<svg class="a" style="left:39px;top:83px" width="5" height="3" viewBox="0 0 5 3"><path d="M0 0H5L2.5 3Z" fill="#000"/></svg>
<svg class="a" style="left:75px;top:83px" width="5" height="3" viewBox="0 0 5 3"><path d="M0 0H5L2.5 3Z" fill="#000"/></svg>
<svg class="a" style="left:111px;top:83px" width="5" height="3" viewBox="0 0 5 3"><path d="M0 0H5L2.5 3Z" fill="#000"/></svg>
<svg class="a" style="left:147px;top:83px" width="5" height="3" viewBox="0 0 5 3"><path d="M0 0H5L2.5 3Z" fill="#000"/></svg>
<svg class="a" style="left:183px;top:83px" width="5" height="3" viewBox="0 0 5 3"><path d="M0 0H5L2.5 3Z" fill="#000"/></svg>
<svg class="a" style="left:219px;top:83px" width="5" height="3" viewBox="0 0 5 3"><path d="M0 0H5L2.5 3Z" fill="#000"/></svg>
<svg class="a" style="left:255px;top:83px" width="5" height="3" viewBox="0 0 5 3"><path d="M0 0H5L2.5 3Z" fill="#000"/></svg>
<svg class="a" style="left:476px;top:83px" width="5" height="3" viewBox="0 0 5 3"><path d="M0 0H5L2.5 3Z" fill="#000"/></svg>
<svg class="a" style="left:535px;top:83px" width="5" height="3" viewBox="0 0 5 3"><path d="M0 0H5L2.5 3Z" fill="#000"/></svg>
<svg class="a" style="left:641px;top:83px" width="5" height="3" viewBox="0 0 5 3"><path d="M0 0H5L2.5 3Z" fill="#000"/></svg>
<svg class="a" style="left:677px;top:83px" width="5" height="3" viewBox="0 0 5 3"><path d="M0 0H5L2.5 3Z" fill="#000"/></svg>
<svg class="a" style="left:851px;top:83px" width="5" height="3" viewBox="0 0 5 3"><path d="M0 0H5L2.5 3Z" fill="#000"/></svg>
<svg class="a" style="left:918px;top:83px" width="5" height="3" viewBox="0 0 5 3"><path d="M0 0H5L2.5 3Z" fill="#000"/></svg>
<svg class="a" style="left:1131px;top:83px" width="5" height="3" viewBox="0 0 5 3"><path d="M0 0H5L2.5 3Z" fill="#000"/></svg>
<svg class="a" style="left:1167px;top:83px" width="5" height="3" viewBox="0 0 5 3"><path d="M0 0H5L2.5 3Z" fill="#000"/></svg>
<div class="a" style="left:0px;top:98px;width:1209px;height:1px;background:#808080;"></div>
<div class="a" style="left:0px;top:68px;width:1181px;height:1px;background:#808080;"></div>
<div class="a" style="left:0px;top:99px;width:1023px;height:27px;background:#FCFBDC;"></div>
<div class="a" style="left:0px;top:99px;width:1023px;height:1px;background:#FFFFFF;"></div>
<div class="a" style="left:0px;top:126px;width:1023px;height:1px;background:#808080;"></div>
<div class="a" style="left:0px;top:127px;width:1023px;height:1px;background:#FFFFFF;"></div>
<div class="a" style="left:1023px;top:99px;width:186px;height:30px;background:#D4D0C8;"></div>
<div class="a" style="left:1023px;top:99px;width:185px;height:1px;background:#FFFFFF;"></div>
<div class="a" style="left:1023px;top:99px;width:1px;height:29px;background:#FFFFFF;"></div>
<div class="a" style="left:1208px;top:99px;width:1px;height:30px;background:#808080;"></div>
<div class="a" style="left:1023px;top:128px;width:186px;height:1px;background:#808080;"></div>
<div class="a" style="left:4px;top:103px;width:23px;height:21px;background:#D4D0C8;border-top:1px solid #fff;border-left:1px solid #fff;border-right:1px solid #404040;border-bottom:1px solid #404040;box-shadow:inset -1px -1px 0 #808080"></div>
<svg class="a" style="left:12px;top:108px;" width="7" height="12" shape-rendering="crispEdges"><path d="M0 1h1v1h-1zM5 1h1v1h-1zM0 2h1v1h-1zM5 2h1v1h-1zM1 3h1v1h-1zM4 3h1v1h-1zM2 4h2v1h-2zM1 5h1v1h-1zM4 5h1v1h-1zM1 6h1v1h-1zM4 6h1v1h-1zM0 7h1v1h-1zM5 7h1v1h-1zM0 8h1v1h-1zM5 8h1v1h-1z" fill="#000"/></svg>
<div class="a" style="left:12px;top:118px;width:6px;height:1px;background:#000;"></div>
<div class="a" style="left:31px;top:103px;width:71px;height:21px;background:#D4D0C8;border-top:1px solid #808080;border-left:1px solid #808080;border-right:1px solid #fff;border-bottom:1px solid #fff;box-shadow:inset 1px 1px 0 #404040"></div>
<svg class="a" style="left:34px;top:108px;overflow:hidden" width="52" height="12" shape-rendering="crispEdges"><path d="M1 4h5v1h-5zM8 1h3v1h-3zM7 2h1v1h-1zM11 2h1v1h-1zM11 3h1v1h-1zM11 4h1v1h-1zM10 5h1v1h-1zM9 6h1v1h-1zM8 7h1v1h-1zM7 8h5v1h-5zM13 1h3v1h-3zM15 2h1v1h-1zM15 3h1v1h-1zM15 4h1v1h-1zM15 5h1v1h-1zM15 6h1v1h-1zM15 7h1v1h-1zM13 8h5v1h-5zM21 7h1v1h-1zM21 8h1v1h-1zM25 1h5v1h-5zM29 2h1v1h-1zM29 3h1v1h-1zM28 4h1v1h-1zM28 5h1v1h-1zM27 6h1v1h-1zM27 7h1v1h-1zM27 8h1v1h-1zM31 1h5v1h-5zM35 2h1v1h-1zM35 3h1v1h-1zM34 4h1v1h-1zM34 5h1v1h-1zM33 6h1v1h-1zM33 7h1v1h-1zM33 8h1v1h-1zM38 1h3v1h-3zM37 2h1v1h-1zM41 2h1v1h-1zM37 3h1v1h-1zM41 3h1v1h-1zM38 4h3v1h-3zM37 5h1v1h-1zM41 5h1v1h-1zM37 6h1v1h-1zM41 6h1v1h-1zM37 7h1v1h-1zM41 7h1v1h-1zM38 8h3v1h-3zM45 1h2v1h-2zM44 2h1v1h-1zM46 2h1v1h-1zM43 3h1v1h-1zM46 3h1v1h-1zM43 4h1v1h-1zM46 4h1v1h-1zM42 5h1v1h-1zM46 5h1v1h-1zM42 6h6v1h-6zM46 7h1v1h-1zM46 8h1v1h-1zM50 1h3v1h-3zM49 2h1v1h-1zM53 2h1v1h-1zM49 3h1v1h-1zM53 3h1v1h-1zM49 4h1v1h-1zM53 4h1v1h-1zM50 5h4v1h-4zM53 6h1v1h-1zM49 7h1v1h-1zM53 7h1v1h-1zM50 8h3v1h-3z" fill="#000"/></svg>
<div class="a" style="left:82px;top:105px;width:17px;height:17px;background:#D4D0C8;border-top:1px solid #fff;border-left:1px solid #fff;border-right:1px solid #404040;border-bottom:1px solid #404040;box-shadow:inset -1px -1px 0 #808080"></div>
<svg class="a" style="left:87px;top:111px" width="8" height="5" viewBox="0 0 8 5"><path d="M0 0H8L4 4.5Z" fill="#909090"/><path d="M4 4.5L8 0" stroke="#fff"/></svg>
<div class="a" style="left:115px;top:103px;width:23px;height:21px;background:#D4D0C8;border-top:1px solid #fff;border-left:1px solid #fff;border-right:1px solid #404040;border-bottom:1px solid #404040;box-shadow:inset -1px -1px 0 #808080"></div>
<svg class="a" style="left:123px;top:108px;" width="7" height="12" shape-rendering="crispEdges"><path d="M0 1h1v1h-1zM6 1h1v1h-1zM1 2h1v1h-1zM5 2h1v1h-1zM2 3h1v1h-1zM4 3h1v1h-1zM3 4h1v1h-1zM3 5h1v1h-1zM3 6h1v1h-1zM3 7h1v1h-1zM3 8h1v1h-1z" fill="#000"/></svg>
<div class="a" style="left:123px;top:118px;width:6px;height:1px;background:#000;"></div>
<div class="a" style="left:142px;top:103px;width:71px;height:21px;background:#D4D0C8;border-top:1px solid #808080;border-left:1px solid #808080;border-right:1px solid #fff;border-bottom:1px solid #fff;box-shadow:inset 1px 1px 0 #404040"></div>
<svg class="a" style="left:145px;top:108px;overflow:hidden" width="52" height="12" shape-rendering="crispEdges"><path d="M1 1h3v1h-3zM3 2h1v1h-1zM3 3h1v1h-1zM3 4h1v1h-1zM3 5h1v1h-1zM3 6h1v1h-1zM3 7h1v1h-1zM1 8h5v1h-5zM7 1h5v1h-5zM11 2h1v1h-1zM11 3h1v1h-1zM10 4h1v1h-1zM10 5h1v1h-1zM9 6h1v1h-1zM9 7h1v1h-1zM9 8h1v1h-1zM15 7h1v1h-1zM15 8h1v1h-1zM21 1h2v1h-2zM20 2h1v1h-1zM22 2h1v1h-1zM19 3h1v1h-1zM22 3h1v1h-1zM19 4h1v1h-1zM22 4h1v1h-1zM18 5h1v1h-1zM22 5h1v1h-1zM18 6h6v1h-6zM22 7h1v1h-1zM22 8h1v1h-1zM26 1h3v1h-3zM25 2h1v1h-1zM25 3h1v1h-1zM25 4h4v1h-4zM25 5h1v1h-1zM29 5h1v1h-1zM25 6h1v1h-1zM29 6h1v1h-1zM25 7h1v1h-1zM29 7h1v1h-1zM26 8h3v1h-3zM32 1h3v1h-3zM31 2h1v1h-1zM35 2h1v1h-1zM35 3h1v1h-1zM35 4h1v1h-1zM34 5h1v1h-1zM33 6h1v1h-1zM32 7h1v1h-1zM31 8h5v1h-5zM37 1h4v1h-4zM37 2h1v1h-1zM37 3h1v1h-1zM37 4h4v1h-4zM41 5h1v1h-1zM41 6h1v1h-1zM41 7h1v1h-1zM37 8h4v1h-4zM44 1h3v1h-3zM43 2h1v1h-1zM47 2h1v1h-1zM43 3h1v1h-1zM47 3h1v1h-1zM43 4h1v1h-1zM47 4h1v1h-1zM44 5h4v1h-4zM47 6h1v1h-1zM43 7h1v1h-1zM47 7h1v1h-1zM44 8h3v1h-3z" fill="#000"/></svg>
<div class="a" style="left:193px;top:105px;width:17px;height:17px;background:#D4D0C8;border-top:1px solid #fff;border-left:1px solid #fff;border-right:1px solid #404040;border-bottom:1px solid #404040;box-shadow:inset -1px -1px 0 #808080"></div>
<svg class="a" style="left:198px;top:111px" width="8" height="5" viewBox="0 0 8 5"><path d="M0 0H8L4 4.5Z" fill="#909090"/><path d="M4 4.5L8 0" stroke="#fff"/></svg>
<div class="a" style="left:225px;top:103px;width:23px;height:21px;background:#D4D0C8;border-top:1px solid #fff;border-left:1px solid #fff;border-right:1px solid #404040;border-bottom:1px solid #404040;box-shadow:inset -1px -1px 0 #808080"></div>
<svg class="a" style="left:233px;top:108px;" width="7" height="12" shape-rendering="crispEdges"><path d="M0 1h7v1h-7zM5 2h1v1h-1zM4 3h1v1h-1zM3 4h1v1h-1zM2 5h1v1h-1zM1 6h1v1h-1zM0 7h1v1h-1zM0 8h7v1h-7z" fill="#000"/></svg>
<div class="a" style="left:233px;top:118px;width:6px;height:1px;background:#000;"></div>
<div class="a" style="left:253px;top:103px;width:71px;height:21px;background:#D4D0C8;border-top:1px solid #808080;border-left:1px solid #808080;border-right:1px solid #fff;border-bottom:1px solid #fff;box-shadow:inset 1px 1px 0 #404040"></div>
<svg class="a" style="left:256px;top:108px;overflow:hidden" width="52" height="12" shape-rendering="crispEdges"><path d="M2 1h3v1h-3zM1 2h1v1h-1zM5 2h1v1h-1zM1 3h1v1h-1zM5 3h1v1h-1zM1 4h1v1h-1zM5 4h1v1h-1zM1 5h1v1h-1zM5 5h1v1h-1zM1 6h1v1h-1zM5 6h1v1h-1zM1 7h1v1h-1zM5 7h1v1h-1zM2 8h3v1h-3zM9 7h1v1h-1zM9 8h1v1h-1zM14 1h3v1h-3zM13 2h1v1h-1zM17 2h1v1h-1zM13 3h1v1h-1zM17 3h1v1h-1zM13 4h1v1h-1zM17 4h1v1h-1zM13 5h1v1h-1zM17 5h1v1h-1zM13 6h1v1h-1zM17 6h1v1h-1zM13 7h1v1h-1zM17 7h1v1h-1zM14 8h3v1h-3z" fill="#000"/></svg>
<div class="a" style="left:304px;top:105px;width:17px;height:17px;background:#D4D0C8;border-top:1px solid #fff;border-left:1px solid #fff;border-right:1px solid #404040;border-bottom:1px solid #404040;box-shadow:inset -1px -1px 0 #808080"></div>
<svg class="a" style="left:309px;top:111px" width="8" height="5" viewBox="0 0 8 5"><path d="M0 0H8L4 4.5Z" fill="#909090"/><path d="M4 4.5L8 0" stroke="#fff"/></svg>
<div class="a" style="left:331px;top:103px;width:23px;height:20px;background:#D4D0C8;"></div>
<svg class="a" style="left:334px;top:105px" width="16" height="16" viewBox="0 0 16 16"><g transform="translate(1 1)" fill="#fff" stroke="#fff"><path d="M3 5H6V8H9V11H6V14H3V11H0V8H3Z" stroke-width=".3"/><path d="M12 1L16 3L12 14L8 12Z" stroke-width=".3"/></g><g fill="#808080" stroke="#808080"><path d="M3 5H6V8H9V11H6V14H3V11H0V8H3Z" stroke-width=".3"/><path d="M12 1L16 3L12 14L8 12Z" stroke-width=".3"/></g></svg>
<div class="a" style="left:355px;top:103px;width:23px;height:20px;background:#D4D0C8;"></div>
<svg class="a" style="left:358px;top:105px" width="16" height="16" viewBox="0 0 16 16"><g transform="translate(1 1)" fill="#fff" stroke="#fff"><path d="M5 1H11L9 10H7Z" stroke-width=".3"/><circle cx="8" cy="13" r="2"/></g><g fill="#808080" stroke="#808080"><path d="M5 1H11L9 10H7Z" stroke-width=".3"/><circle cx="8" cy="13" r="2"/></g></svg>
<div class="a" style="left:379px;top:103px;width:37px;height:20px;background:#D4D0C8;"></div>
<svg class="a" style="left:380px;top:104px" width="18" height="18" viewBox="0 0 18 18"><rect x="0" y="0" width="18" height="18" fill="#7A7A7A"/><path d="M1 1L4 4M17 1L14 4" stroke="#fff"/></svg>
<svg class="a" style="left:404px;top:113px" width="6" height="4" viewBox="0 0 6 4"><path d="M0 0H6L3 3.5Z" fill="#909090"/></svg>
<div class="a" style="left:418px;top:103px;width:19px;height:20px;background:#D4D0C8;"></div>
<svg class="a" style="left:421px;top:103px" width="16" height="20" viewBox="0 0 16 20"><path d="M2.5 6.5C2.5 1.5 13.5 1 13.5 6C13.5 9.5 9.5 9.5 9.5 13H6C6 8.5 9.5 8.5 9.5 6.3C9.5 4 6.2 4.2 6.2 6.5Z" fill="#B0B0C8" stroke="#101010" stroke-width="1.1"/><ellipse cx="7.8" cy="16.8" rx="2.4" ry="1.8" fill="#B0B0C8" stroke="#101010" stroke-width="1.1"/></svg>
<div class="a" style="left:448px;top:101px;width:1px;height:24px;background:#808080;"></div>
<div class="a" style="left:449px;top:101px;width:1px;height:24px;background:#FFFFFF;"></div>
<div class="a" style="left:453px;top:104px;width:3px;height:20px;background:#808080;"></div>
<div class="a" style="left:453px;top:104px;width:2px;height:19px;background:#FFFFFF;"></div>
<div class="a" style="left:454px;top:105px;width:1px;height:18px;background:#FCFBDC;"></div>
<div class="a" style="left:462px;top:103px;width:47px;height:21px;background:#D4D0C8;border-top:1px solid #fff;border-left:1px solid #fff;border-right:1px solid #404040;border-bottom:1px solid #404040;box-shadow:inset -1px -1px 0 #808080"></div>
<svg class="a" style="left:465px;top:108px;" width="43" height="12" shape-rendering="crispEdges"><path d="M5 0h1v1h-1zM4 1h1v1h-1zM6 1h1v1h-1zM3 2h1v1h-1zM7 2h1v1h-1zM2 3h1v1h-1zM8 3h1v1h-1zM0 4h2v1h-2zM3 4h5v1h-5zM9 4h2v1h-2zM5 5h1v1h-1zM5 6h1v1h-1zM3 7h5v1h-5zM5 8h1v1h-1zM5 9h1v1h-1zM1 10h9v1h-9zM15 0h1v1h-1zM19 0h4v1h-4zM12 1h8v1h-8zM22 1h1v1h-1zM13 2h1v1h-1zM17 2h1v1h-1zM19 2h1v1h-1zM22 2h1v1h-1zM14 3h1v1h-1zM16 3h1v1h-1zM19 3h1v1h-1zM21 3h1v1h-1zM12 4h9v1h-9zM19 5h1v1h-1zM21 5h1v1h-1zM13 6h5v1h-5zM19 6h1v1h-1zM22 6h1v1h-1zM13 7h1v1h-1zM17 7h1v1h-1zM19 7h1v1h-1zM22 7h1v1h-1zM13 8h1v1h-1zM17 8h1v1h-1zM19 8h2v1h-2zM22 8h1v1h-1zM13 9h5v1h-5zM19 9h1v1h-1zM21 9h1v1h-1zM13 10h1v1h-1zM17 10h1v1h-1zM19 10h1v1h-1zM27 7h1v1h-1zM27 8h1v1h-1zM33 7h1v1h-1zM33 8h1v1h-1zM39 7h1v1h-1zM39 8h1v1h-1z" fill="#000"/></svg>
<div class="a" style="left:517px;top:103px;width:47px;height:21px;background:#D4D0C8;border-top:1px solid #fff;border-left:1px solid #fff;border-right:1px solid #404040;border-bottom:1px solid #404040;box-shadow:inset -1px -1px 0 #808080"></div>
<svg class="a" style="left:520px;top:108px;" width="43" height="12" shape-rendering="crispEdges"><path d="M3 0h1v1h-1zM7 0h1v1h-1zM4 1h1v1h-1zM6 1h1v1h-1zM1 2h9v1h-9zM1 3h1v1h-1zM5 3h1v1h-1zM9 3h1v1h-1zM1 4h9v1h-9zM1 5h1v1h-1zM5 5h1v1h-1zM9 5h1v1h-1zM1 6h9v1h-9zM5 7h1v1h-1zM0 8h11v1h-11zM5 9h1v1h-1zM5 10h1v1h-1zM21 4h1v1h-1zM12 5h11v1h-11zM27 7h1v1h-1zM27 8h1v1h-1zM33 7h1v1h-1zM33 8h1v1h-1zM39 7h1v1h-1zM39 8h1v1h-1z" fill="#000"/></svg>
<div class="a" style="left:571px;top:103px;width:23px;height:21px;background:#D4D0C8;border-top:1px solid #fff;border-left:1px solid #fff;border-right:1px solid #404040;border-bottom:1px solid #404040;box-shadow:inset -1px -1px 0 #808080"></div>
<svg class="a" style="left:573px;top:104px" width="20" height="20" viewBox="0 0 18 20"><path d="M5 0.5L2 5H4.5L1 10" stroke="#F0C000" stroke-width="1.4" fill="none"/><path d="M8 1L16 8.5L12.8 9L14.8 12.8L12.8 13.8L10.8 10L8.5 12.5Z" fill="#101010" transform="rotate(-10 12 7)"/><path d="M3.5 7.5V17.5L6 15L8.5 19.5L10.5 18.5L8 14H11.5Z" fill="#fff" stroke="#000" stroke-width="1"/></svg>
<div class="a" style="left:601px;top:103px;width:71px;height:21px;background:#FFFFFF;border-top:1px solid #808080;border-left:1px solid #808080;border-right:1px solid #fff;border-bottom:1px solid #fff;box-shadow:inset 1px 1px 0 #404040"></div>
<svg class="a" style="left:605px;top:108px;" width="37" height="12" shape-rendering="crispEdges"><path d="M1 0h1v1h-1zM5 0h5v1h-5zM2 1h1v1h-1zM5 1h1v1h-1zM9 1h1v1h-1zM0 2h4v1h-4zM5 2h1v1h-1zM7 2h1v1h-1zM9 2h1v1h-1zM3 3h1v1h-1zM5 3h1v1h-1zM7 3h1v1h-1zM9 3h1v1h-1zM2 4h1v1h-1zM5 4h1v1h-1zM7 4h1v1h-1zM9 4h1v1h-1zM1 5h3v1h-3zM5 5h1v1h-1zM7 5h1v1h-1zM9 5h1v1h-1zM0 6h1v1h-1zM2 6h1v1h-1zM5 6h1v1h-1zM7 6h1v1h-1zM9 6h1v1h-1zM2 7h1v1h-1zM7 7h1v1h-1zM2 8h1v1h-1zM6 8h2v1h-2zM10 8h1v1h-1zM2 9h1v1h-1zM5 9h1v1h-1zM7 9h1v1h-1zM10 9h1v1h-1zM2 10h1v1h-1zM4 10h1v1h-1zM8 10h3v1h-3zM18 0h1v1h-1zM13 1h10v1h-10zM13 2h1v1h-1zM15 2h1v1h-1zM20 2h1v1h-1zM22 2h1v1h-1zM14 3h1v1h-1zM17 3h1v1h-1zM21 3h1v1h-1zM13 4h10v1h-10zM14 5h1v1h-1zM17 5h1v1h-1zM21 5h1v1h-1zM14 6h1v1h-1zM16 6h6v1h-6zM14 7h3v1h-3zM19 7h1v1h-1zM21 7h1v1h-1zM14 8h1v1h-1zM17 8h2v1h-2zM21 8h1v1h-1zM14 9h1v1h-1zM16 9h1v1h-1zM19 9h1v1h-1zM21 9h1v1h-1zM14 10h8v1h-8zM29 0h1v1h-1zM29 1h1v1h-1zM25 2h10v1h-10zM25 3h1v1h-1zM29 3h1v1h-1zM34 3h1v1h-1zM25 4h1v1h-1zM29 4h1v1h-1zM34 4h1v1h-1zM25 5h1v1h-1zM29 5h2v1h-2zM34 5h1v1h-1zM25 6h1v1h-1zM28 6h1v1h-1zM31 6h1v1h-1zM34 6h1v1h-1zM25 7h1v1h-1zM27 7h1v1h-1zM32 7h1v1h-1zM34 7h1v1h-1zM25 8h1v1h-1zM34 8h1v1h-1zM25 9h1v1h-1zM34 9h1v1h-1zM25 10h1v1h-1zM32 10h3v1h-3z" fill="#000"/></svg>
<div class="a" style="left:655px;top:105px;width:15px;height:17px;background:#D4D0C8;border-top:1px solid #fff;border-left:1px solid #fff;border-right:1px solid #404040;border-bottom:1px solid #404040;box-shadow:inset -1px -1px 0 #808080"></div>
<svg class="a" style="left:659px;top:111px" width="7" height="4" viewBox="0 0 7 4"><path d="M0 0H7L3.5 4Z" fill="#000"/></svg>
<div class="a" style="left:682px;top:103px;width:37px;height:20px;background:#D4D0C8;"></div>
<svg class="a" style="left:683px;top:104px" width="18" height="18" viewBox="0 0 16 16"><path d="M1 1L12 5L9 8L16 15L13.5 17.5L6.5 10.5L3.5 13.5Z" fill="#fff" stroke="#000" stroke-width="1.3" stroke-linejoin="miter"/></svg>
<svg class="a" style="left:709px;top:113px" width="5" height="3" viewBox="0 0 5 3"><path d="M0 0H5L2.5 3Z" fill="#000"/></svg>
<div class="a" style="left:721px;top:103px;width:23px;height:21px;background:#D4D0C8;border-right:1px solid #404040;border-bottom:1px solid #404040"></div>
<svg class="a" style="left:724px;top:105px" width="16" height="16" viewBox="0 0 16 16"><path d="M1 1L12 5L9 8L16 15L13.5 17.5L6.5 10.5L3.5 13.5Z" fill="#D8D8D8" stroke="#707070" stroke-width="1.8" stroke-dasharray="1.6 .6"/></svg>
<div class="a" style="left:745px;top:103px;width:23px;height:21px;background:#D4D0C8;border-right:1px solid #404040;border-bottom:1px solid #404040"></div>
<svg class="a" style="left:748px;top:105px" width="16" height="16" viewBox="0 0 16 16"><path d="M5.5 0.5H10.5L14.5 3.5L15.5 8L14.5 12.5L10.5 15.5H5.5L1.5 12.5L0.5 8L1.5 3.5Z" fill="#7A7A7A"/><path d="M15.5 8L14.5 12.5L10.5 15.5H5.5" stroke="#fff" fill="none"/></svg>
<div class="a" style="left:775px;top:103px;width:23px;height:21px;background:#D4D0C8;border-right:1px solid #404040;border-bottom:1px solid #404040"></div>
<svg class="a" style="left:778px;top:105px" width="16" height="16" viewBox="0 0 16 16"><path d="M5.5 0.5H10.5L14.5 3.5L15.5 8L14.5 12.5L10.5 15.5H5.5L1.5 12.5L0.5 8L1.5 3.5Z" fill="#7A7A7A"/><path d="M15.5 8L14.5 12.5L10.5 15.5H5.5" stroke="#fff" fill="none"/></svg>
<div class="a" style="left:799px;top:103px;width:23px;height:21px;background:#D4D0C8;border-right:1px solid #404040;border-bottom:1px solid #404040"></div>
<svg class="a" style="left:802px;top:105px" width="16" height="16" viewBox="0 0 16 16"><path d="M5.5 0.5H10.5L14.5 3.5L15.5 8L14.5 12.5L10.5 15.5H5.5L1.5 12.5L0.5 8L1.5 3.5Z" fill="#7A7A7A"/><path d="M15.5 8L14.5 12.5L10.5 15.5H5.5" stroke="#fff" fill="none"/></svg>
<div class="a" style="left:823px;top:103px;width:23px;height:21px;background:#D4D0C8;border-right:1px solid #404040;border-bottom:1px solid #404040"></div>
<svg class="a" style="left:826px;top:105px" width="16" height="16" viewBox="0 0 16 16"><path d="M5.5 0.5H10.5L14.5 3.5L15.5 8L14.5 12.5L10.5 15.5H5.5L1.5 12.5L0.5 8L1.5 3.5Z" fill="#7A7A7A"/><path d="M15.5 8L14.5 12.5L10.5 15.5H5.5" stroke="#fff" fill="none"/></svg>
<div class="a" style="left:853px;top:103px;width:23px;height:21px;background:#D4D0C8;border-right:1px solid #404040;border-bottom:1px solid #404040"></div>
<svg class="a" style="left:856px;top:105px" width="16" height="16" viewBox="0 0 16 16"><path d="M3 3V13L8 15L13 13V3L8 1Z" fill="#E8E8E8" stroke="#909090"/><path d="M8 5L13 3V13L8 15Z" fill="#808080"/></svg>
<div class="a" style="left:877px;top:103px;width:23px;height:21px;background:#D4D0C8;border-right:1px solid #404040;border-bottom:1px solid #404040"></div>
<svg class="a" style="left:880px;top:105px" width="16" height="16" viewBox="0 0 16 16"><path d="M1 12L7 3L14 9" stroke="#1E70D8" stroke-width="2.6" fill="none"/><path d="M0 9L1 15L6 13Z" fill="#1E70D8"/></svg>
<div class="a" style="left:907px;top:103px;width:23px;height:21px;background:#D4D0C8;border-right:1px solid #404040;border-bottom:1px solid #404040"></div>
<svg class="a" style="left:910px;top:105px" width="16" height="16" viewBox="0 0 16 16"><path d="M1 1V11L3.5 8.5L6 13L8 12L5.5 7.5H9Z" fill="#fff" stroke="#000"/><path d="M5 11L9 15L15 6" stroke="#2060D0" stroke-width="2" fill="none"/></svg>
<div class="a" style="left:937px;top:103px;width:23px;height:21px;background:#D4D0C8;border-right:1px solid #404040;border-bottom:1px solid #404040"></div>
<svg class="a" style="left:940px;top:105px" width="16" height="16" viewBox="0 0 16 16"><circle cx="8" cy="8" r="6.5" fill="none" stroke="#808080" stroke-width="2.2"/><path d="M3.5 12.5L12.5 3.5" stroke="#808080" stroke-width="2.2"/></svg>
<div class="a" style="left:961px;top:103px;width:23px;height:21px;background:#D4D0C8;border-right:1px solid #404040;border-bottom:1px solid #404040"></div>
<svg class="a" style="left:964px;top:105px" width="16" height="16" viewBox="0 0 16 16"><circle cx="8" cy="8" r="8" fill="#7A7A7A"/><path d="M3 14C6 16 11 16 14 13" stroke="#fff" fill="none"/></svg>
<div class="a" style="left:991px;top:103px;width:23px;height:21px;background:#D4D0C8;border-right:1px solid #404040;border-bottom:1px solid #404040"></div>
<svg class="a" style="left:994px;top:103px" width="16" height="20" viewBox="0 0 16 20"><path d="M2.5 6.5C2.5 1.5 13.5 1 13.5 6C13.5 9.5 9.5 9.5 9.5 13H6C6 8.5 9.5 8.5 9.5 6.3C9.5 4 6.2 4.2 6.2 6.5Z" fill="#B0B0C8" stroke="#101010" stroke-width="1.1"/><ellipse cx="7.8" cy="16.8" rx="2.4" ry="1.8" fill="#B0B0C8" stroke="#101010" stroke-width="1.1"/></svg>
<div class="a" style="left:1026px;top:103px;width:3px;height:22px;background:#808080;"></div>
<div class="a" style="left:1026px;top:103px;width:2px;height:21px;background:#FFFFFF;"></div>
<div class="a" style="left:1027px;top:104px;width:1px;height:20px;background:#D4D0C8;"></div>
<svg class="a" style="left:1045px;top:105px" width="16" height="16" viewBox="0 0 16 16"><path d="M0 12H5L8 15L11 12H16V16H0Z" fill="#909090"/><path d="M5 1H8V12H5Z" fill="#1E60C8"/><path d="M8 2H14V5H8Z" fill="#1E60C8"/></svg>
<svg class="a" style="left:1068px;top:105px" width="16" height="16" viewBox="0 0 16 16"><path d="M2 14V3H12" stroke="#4060D0" stroke-width="1.6" fill="none"/><circle cx="2" cy="14" r="1.6" fill="#6A6AC0"/><rect x="6" y="7" width="8" height="8" fill="#8A8AD0"/><path d="M11 1L14 3L11 5" stroke="#4060D0" fill="none"/></svg>
<svg class="a" style="left:1091px;top:105px" width="16" height="16" viewBox="0 0 16 16"><rect x="0.5" y="0.5" width="15" height="15" rx="1" fill="#A0C0F0" stroke="#4080D0"/><rect x="3" y="3" width="10" height="10" fill="none" stroke="#2060C0"/><rect x="5.5" y="5.5" width="5" height="5" fill="none" stroke="#2060C0"/></svg>
<svg class="a" style="left:1114px;top:105px" width="16" height="16" viewBox="0 0 16 16"><path d="M1 2H15M1 14H15M1 2V6M1 10V14M15 6V10" stroke="#2070D0" stroke-width="1.5"/><rect x="4" y="4" width="8" height="8" rx="3" fill="#6A6AB0"/><path d="M1 6H15V10H1Z" fill="none" stroke="#2070D0"/></svg>
<svg class="a" style="left:1145px;top:105px" width="16" height="16" viewBox="0 0 16 16"><path d="M0 12H5L8 15L11 12H16V16H0Z" fill="#909090"/><path d="M7 6H15M9 6V13" stroke="#1E60C8" stroke-width="2.4"/><path d="M1 4L3 6L7 1" stroke="#20B020" stroke-width="2" fill="none"/></svg>
<svg class="a" style="left:1184px;top:105px" width="16" height="16" viewBox="0 0 16 16"><path d="M1 1H5L1 5Z M15 1V5L11 1Z M1 15V11L5 15Z M15 15H11L15 11Z" fill="#7A7AE0" stroke="#4040A0" stroke-width=".7"/><path d="M5 11L11 5M8 5H11V8M5 8V11H8" stroke="#6060A0" stroke-width="1.3" fill="none"/></svg>
<div class="a" style="left:1038px;top:104px;width:1px;height:20px;background:#808080;"></div>
<div class="a" style="left:1039px;top:104px;width:1px;height:20px;background:#FFFFFF;"></div>
<div class="a" style="left:1138px;top:104px;width:1px;height:20px;background:#808080;"></div>
<div class="a" style="left:1139px;top:104px;width:1px;height:20px;background:#FFFFFF;"></div>
<div class="a" style="left:1169px;top:104px;width:1px;height:20px;background:#808080;"></div>
<div class="a" style="left:1170px;top:104px;width:1px;height:20px;background:#FFFFFF;"></div>
<div class="a" style="left:1177px;top:104px;width:1px;height:20px;background:#808080;"></div>
<div class="a" style="left:1178px;top:104px;width:1px;height:20px;background:#FFFFFF;"></div>
<div class="a" style="left:0px;top:128px;width:303px;height:569px;background:#D4D0C8;"></div>
<div class="a" style="left:0px;top:128px;width:303px;height:1px;background:#808080;"></div>
<div class="a" style="left:0px;top:129px;width:303px;height:1px;background:#FFFFFF;"></div>
<svg class="a" style="left:4px;top:132px;" width="49" height="12" shape-rendering="crispEdges"><path d="M2 0h1v1h-1zM5 0h5v1h-5zM2 1h1v1h-1zM5 1h1v1h-1zM9 1h1v1h-1zM0 2h4v1h-4zM5 2h5v1h-5zM2 3h1v1h-1zM4 3h3v1h-3zM8 3h3v1h-3zM2 4h1v1h-1zM4 4h1v1h-1zM6 4h1v1h-1zM8 4h1v1h-1zM10 4h1v1h-1zM2 5h5v1h-5zM8 5h3v1h-3zM0 6h3v1h-3zM7 6h1v1h-1zM2 7h9v1h-9zM2 8h1v1h-1zM6 8h3v1h-3zM2 9h1v1h-1zM5 9h1v1h-1zM7 9h1v1h-1zM9 9h1v1h-1zM1 10h2v1h-2zM4 10h1v1h-1zM7 10h1v1h-1zM10 10h1v1h-1zM15 0h1v1h-1zM17 0h1v1h-1zM15 1h1v1h-1zM17 1h1v1h-1zM14 2h1v1h-1zM17 2h6v1h-6zM14 3h1v1h-1zM16 3h1v1h-1zM18 3h1v1h-1zM13 4h3v1h-3zM18 4h1v1h-1zM12 5h1v1h-1zM14 5h1v1h-1zM18 5h4v1h-4zM14 6h1v1h-1zM18 6h1v1h-1zM14 7h1v1h-1zM18 7h1v1h-1zM14 8h1v1h-1zM18 8h5v1h-5zM14 9h1v1h-1zM18 9h1v1h-1zM14 10h1v1h-1zM18 10h1v1h-1zM26 0h1v1h-1zM31 0h1v1h-1zM26 1h4v1h-4zM31 1h4v1h-4zM25 2h1v1h-1zM27 2h1v1h-1zM30 2h1v1h-1zM32 2h1v1h-1zM24 3h11v1h-11zM24 4h1v1h-1zM34 4h1v1h-1zM26 5h7v1h-7zM26 6h1v1h-1zM32 6h1v1h-1zM26 7h8v1h-8zM26 8h1v1h-1zM33 8h1v1h-1zM26 9h1v1h-1zM33 9h1v1h-1zM26 10h8v1h-8zM40 0h7v1h-7zM36 1h5v1h-5zM43 1h1v1h-1zM46 1h1v1h-1zM38 2h1v1h-1zM40 2h7v1h-7zM38 3h1v1h-1zM40 3h1v1h-1zM43 3h1v1h-1zM46 3h1v1h-1zM38 4h1v1h-1zM40 4h1v1h-1zM43 4h1v1h-1zM46 4h1v1h-1zM36 5h11v1h-11zM38 6h1v1h-1zM43 6h1v1h-1zM38 7h1v1h-1zM41 7h5v1h-5zM38 8h2v1h-2zM43 8h1v1h-1zM36 9h2v1h-2zM43 9h1v1h-1zM40 10h7v1h-7z" fill="#000"/></svg>
<svg class="a" style="left:273px;top:135px" width="7" height="4" viewBox="0 0 7 4"><path d="M0 0H7L3.5 4Z" fill="#000"/></svg>
<div class="a" style="left:0px;top:148px;width:62px;height:22px;background:#D4D0C8;border-top:1px solid #fff;border-right:1px solid #404040"></div>
<svg class="a" style="left:6px;top:153px;" width="49" height="12" shape-rendering="crispEdges"><path d="M1 1h9v1h-9zM4 2h1v1h-1zM9 2h1v1h-1zM4 3h1v1h-1zM9 3h1v1h-1zM4 4h1v1h-1zM9 4h1v1h-1zM4 5h1v1h-1zM9 5h1v1h-1zM4 6h1v1h-1zM9 6h1v1h-1zM3 7h1v1h-1zM9 7h1v1h-1zM3 8h1v1h-1zM9 8h1v1h-1zM2 9h1v1h-1zM9 9h1v1h-1zM1 10h1v1h-1zM7 10h2v1h-2zM14 0h7v1h-7zM14 1h1v1h-1zM20 1h1v1h-1zM14 2h7v1h-7zM14 3h1v1h-1zM20 3h1v1h-1zM14 4h7v1h-7zM14 5h1v1h-1zM20 5h1v1h-1zM14 6h7v1h-7zM14 7h1v1h-1zM20 7h1v1h-1zM12 8h11v1h-11zM15 9h1v1h-1zM19 9h1v1h-1zM12 10h3v1h-3zM20 10h3v1h-3zM24 0h4v1h-4zM29 0h1v1h-1zM24 1h1v1h-1zM27 1h1v1h-1zM29 1h5v1h-5zM24 2h1v1h-1zM27 2h1v1h-1zM29 2h1v1h-1zM33 2h1v1h-1zM24 3h1v1h-1zM27 3h2v1h-2zM30 3h1v1h-1zM32 3h1v1h-1zM24 4h4v1h-4zM31 4h1v1h-1zM26 5h1v1h-1zM30 5h1v1h-1zM32 5h1v1h-1zM24 6h1v1h-1zM26 6h2v1h-2zM29 6h1v1h-1zM33 6h1v1h-1zM24 7h1v1h-1zM26 7h1v1h-1zM28 7h7v1h-7zM24 8h1v1h-1zM26 8h1v1h-1zM29 8h1v1h-1zM33 8h1v1h-1zM24 9h1v1h-1zM26 9h2v1h-2zM29 9h1v1h-1zM33 9h1v1h-1zM24 10h2v1h-2zM29 10h5v1h-5zM39 0h1v1h-1zM41 0h5v1h-5zM38 1h1v1h-1zM44 1h1v1h-1zM37 2h1v1h-1zM40 2h1v1h-1zM43 2h1v1h-1zM36 3h1v1h-1zM39 3h1v1h-1zM42 3h1v1h-1zM44 3h1v1h-1zM38 4h1v1h-1zM41 4h1v1h-1zM45 4h1v1h-1zM37 5h2v1h-2zM40 5h1v1h-1zM46 5h1v1h-1zM36 6h1v1h-1zM38 6h1v1h-1zM41 6h5v1h-5zM38 7h1v1h-1zM43 7h1v1h-1zM38 8h1v1h-1zM43 8h1v1h-1zM38 9h1v1h-1zM43 9h1v1h-1zM38 10h1v1h-1zM40 10h7v1h-7z" fill="#000"/></svg>
<div class="a" style="left:62px;top:150px;width:45px;height:19px;background:#D4D0C8;border-top:1px solid #fff;border-left:1px solid #fff;border-right:1px solid #404040"></div>
<svg class="a" style="left:66px;top:155px;" width="25" height="12" shape-rendering="crispEdges"><path d="M6 0h1v1h-1zM1 1h10v1h-10zM1 2h1v1h-1zM3 2h1v1h-1zM10 2h1v1h-1zM0 3h1v1h-1zM4 3h1v1h-1zM6 3h1v1h-1zM9 3h1v1h-1zM2 4h1v1h-1zM6 4h1v1h-1zM3 5h1v1h-1zM6 5h1v1h-1zM1 6h10v1h-10zM6 7h1v1h-1zM5 8h1v1h-1zM7 8h1v1h-1zM4 9h1v1h-1zM8 9h1v1h-1zM1 10h3v1h-3zM9 10h2v1h-2zM14 0h1v1h-1zM18 0h1v1h-1zM14 1h1v1h-1zM18 1h1v1h-1zM13 2h1v1h-1zM15 2h7v1h-7zM13 3h1v1h-1zM18 3h1v1h-1zM12 4h2v1h-2zM17 4h3v1h-3zM13 5h1v1h-1zM16 5h1v1h-1zM18 5h1v1h-1zM20 5h1v1h-1zM13 6h1v1h-1zM15 6h1v1h-1zM18 6h1v1h-1zM21 6h1v1h-1zM13 7h2v1h-2zM18 7h1v1h-1zM22 7h1v1h-1zM13 8h1v1h-1zM16 8h5v1h-5zM13 9h1v1h-1zM18 9h1v1h-1zM13 10h1v1h-1zM18 10h1v1h-1z" fill="#000"/></svg>
<div class="a" style="left:107px;top:169px;width:196px;height:1px;background:#FFFFFF;"></div>
<div class="a" style="left:1px;top:171px;width:279px;height:1px;background:#808080;"></div>
<div class="a" style="left:1px;top:172px;width:279px;height:1px;background:#FFFFFF;"></div>
<div class="a" style="left:1px;top:202px;width:279px;height:1px;background:#808080;"></div>
<div class="a" style="left:1px;top:203px;width:279px;height:1px;background:#FFFFFF;"></div>
<svg class="a" style="left:9px;top:179px" width="16" height="16" viewBox="0 0 16 16"><g transform="translate(1 1)" fill="#fff" stroke="#fff"><path d="M0 7.5L3.5 5.5L6.5 10L12.5 0.5L15.5 2.5L7 15H5.5Z" stroke-width=".3"/><path d="M9.5 8.5L15.5 12L9.5 15.5Z" stroke-width=".3"/></g><g fill="#808080" stroke="#808080"><path d="M0 7.5L3.5 5.5L6.5 10L12.5 0.5L15.5 2.5L7 15H5.5Z" stroke-width=".3"/><path d="M9.5 8.5L15.5 12L9.5 15.5Z" stroke-width=".3"/></g></svg>
<svg class="a" style="left:32px;top:179px" width="16" height="16" viewBox="0 0 16 16"><g transform="translate(1 1)" fill="#fff" stroke="#fff"><path d="M0 7.5L3.5 5.5L6.5 10L12.5 0.5L15.5 2.5L7 15H5.5Z" stroke-width=".3"/><path d="M9.5 9.5L15 15M15 9.5L9.5 15" stroke-width="2"/></g><g fill="#808080" stroke="#808080"><path d="M0 7.5L3.5 5.5L6.5 10L12.5 0.5L15.5 2.5L7 15H5.5Z" stroke-width=".3"/><path d="M9.5 9.5L15 15M15 9.5L9.5 15" stroke-width="2"/></g></svg>
<svg class="a" style="left:61px;top:179px" width="16" height="16" viewBox="0 0 16 16"><g transform="translate(1 1)" fill="#fff" stroke="#fff"><path d="M1 1H11V5H8V15H4V5H1Z" stroke-width=".3"/><path d="M10 8L15 11.5L10 15Z"/></g><g fill="#808080" stroke="#808080"><path d="M1 1H11V5H8V15H4V5H1Z" stroke-width=".3"/><path d="M10 8L15 11.5L10 15Z"/></g></svg>
<svg class="a" style="left:85px;top:179px" width="16" height="16" viewBox="0 0 16 16"><g transform="translate(1 1)" fill="#fff" stroke="#fff"><path d="M1 1H11V5H8V15H4V5H1Z" stroke-width=".3"/><path d="M9 9L15 15M15 9L9 15" stroke-width="2"/></g><g fill="#808080" stroke="#808080"><path d="M1 1H11V5H8V15H4V5H1Z" stroke-width=".3"/><path d="M9 9L15 15M15 9L9 15" stroke-width="2"/></g></svg>
<svg class="a" style="left:113px;top:179px" width="16" height="16" viewBox="0 0 16 16"><g transform="translate(1 1)" fill="#fff" stroke="#fff"><rect x="1" y="1" width="14" height="14" stroke-width=".3"/></g><g fill="#808080" stroke="#808080"><rect x="1" y="1" width="14" height="14" stroke-width=".3"/></g></svg>
<svg class="a" style="left:136px;top:179px" width="16" height="16" viewBox="0 0 16 16"><g transform="translate(1 1)" fill="#fff" stroke="#fff"><path d="M5 1H11L15 5V11L11 15H1V5Z" stroke-width=".3"/></g><g fill="#808080" stroke="#808080"><path d="M5 1H11L15 5V11L11 15H1V5Z" stroke-width=".3"/></g></svg>
<svg class="a" style="left:160px;top:179px" width="16" height="16" viewBox="0 0 16 16"><g transform="translate(1 1)" fill="#fff" stroke="#fff"><text x="-0.5" y="13" font-size="12" font-weight="bold" font-family="Liberation Serif" stroke-width=".7">G1</text></g><g fill="#808080" stroke="#808080"><text x="-0.5" y="13" font-size="12" font-weight="bold" font-family="Liberation Serif" stroke-width=".7">G1</text></g></svg>
<svg class="a" style="left:183px;top:179px" width="16" height="16" viewBox="0 0 16 16"><g transform="translate(1 1)" fill="#fff" stroke="#fff"><path d="M1 1H10V5H7V15H3V5H1Z" stroke-width=".3"/><path d="M8 7H11V4L15 9L11 14V11H8Z"/></g><g fill="#808080" stroke="#808080"><path d="M1 1H10V5H7V15H3V5H1Z" stroke-width=".3"/><path d="M8 7H11V4L15 9L11 14V11H8Z"/></g></svg>
<svg class="a" style="left:212px;top:179px" width="16" height="16" viewBox="0 0 16 16"><g transform="translate(1 1)" fill="#fff" stroke="#fff"><path d="M5 15L1 11L10 2L14 6Z" stroke-width=".3"/><path d="M3 1V5M1 3H5" stroke-width=".8"/></g><g fill="#808080" stroke="#808080"><path d="M5 15L1 11L10 2L14 6Z" stroke-width=".3"/><path d="M3 1V5M1 3H5" stroke-width=".8"/></g></svg>
<svg class="a" style="left:241px;top:179px" width="16" height="16" viewBox="0 0 16 16"><g transform="translate(1 1)" fill="#fff" stroke="#fff"><path d="M3 5C3 0.5 13 0.5 13 5C13 8 9.5 8.5 9.5 11H6.5C6.5 7.5 9.5 7.5 9.5 5.2C9.5 3.5 6.5 3.5 6.5 5.2Z" stroke-width=".4"/><rect x="6.5" y="12.5" width="3" height="3" stroke-width=".4"/></g><g fill="#808080" stroke="#808080"><path d="M3 5C3 0.5 13 0.5 13 5C13 8 9.5 8.5 9.5 11H6.5C6.5 7.5 9.5 7.5 9.5 5.2C9.5 3.5 6.5 3.5 6.5 5.2Z" stroke-width=".4"/><rect x="6.5" y="12.5" width="3" height="3" stroke-width=".4"/></g></svg>
<div class="a" style="left:55px;top:178px;width:1px;height:18px;background:#808080;"></div>
<div class="a" style="left:56px;top:178px;width:1px;height:18px;background:#FFFFFF;"></div>
<div class="a" style="left:107px;top:178px;width:1px;height:18px;background:#808080;"></div>
<div class="a" style="left:108px;top:178px;width:1px;height:18px;background:#FFFFFF;"></div>
<div class="a" style="left:205px;top:178px;width:1px;height:18px;background:#808080;"></div>
<div class="a" style="left:206px;top:178px;width:1px;height:18px;background:#FFFFFF;"></div>
<div class="a" style="left:234px;top:178px;width:1px;height:18px;background:#808080;"></div>
<div class="a" style="left:235px;top:178px;width:1px;height:18px;background:#FFFFFF;"></div>
<div class="a" style="left:256px;top:178px;width:1px;height:18px;background:#808080;"></div>
<div class="a" style="left:257px;top:178px;width:1px;height:18px;background:#FFFFFF;"></div>
<svg class="a" style="left:9px;top:210px" width="16" height="16" viewBox="0 0 16 16"><g transform="translate(1 1)" fill="#fff" stroke="#fff"><path d="M1.5 15.5V6C1.5 0.5 13.5 0.5 13.5 6V15.5Z" stroke-width=".3"/></g><g fill="#808080" stroke="#808080"><path d="M1.5 15.5V6C1.5 0.5 13.5 0.5 13.5 6V15.5Z" stroke-width=".3"/></g><path d="M4.5 3.5C6 2 9 2 10.5 3.5" stroke="#fff" stroke-width="1" fill="none"/></svg>
<svg class="a" style="left:33px;top:210px" width="16" height="16" viewBox="0 0 16 16"><g transform="translate(1 1)" fill="#fff" stroke="#fff"><path d="M1 5C4 2 6 7 9 4C11 2 13 4 15 3M1 9C4 6 6 11 9 8C11 6 13 8 15 7M1 13C4 10 6 15 9 12C11 10 13 12 15 11" fill="none" stroke-width="1.6"/></g><g fill="#808080" stroke="#808080"><path d="M1 5C4 2 6 7 9 4C11 2 13 4 15 3M1 9C4 6 6 11 9 8C11 6 13 8 15 7M1 13C4 10 6 15 9 12C11 10 13 12 15 11" fill="none" stroke-width="1.6"/></g></svg>
<svg class="a" style="left:56px;top:210px" width="16" height="16" viewBox="0 0 16 16"><g transform="translate(1 1)" fill="#fff" stroke="#fff"><path d="M1.5 15.5V6C1.5 0.5 13.5 0.5 13.5 6V15.5Z" stroke-width=".3"/></g><g fill="#808080" stroke="#808080"><path d="M1.5 15.5V6C1.5 0.5 13.5 0.5 13.5 6V15.5Z" stroke-width=".3"/></g><path d="M2.5 6C2.5 1.5 12.5 1.5 12.5 6" stroke="#fff" stroke-width="1" fill="none"/></svg>
<svg class="a" style="left:85px;top:210px" width="16" height="16" viewBox="0 0 16 16"><g transform="translate(1 1)" fill="#fff" stroke="#fff"><path d="M0 4H16L8 13Z" stroke-width=".3"/></g><g fill="#808080" stroke="#808080"><path d="M0 4H16L8 13Z" stroke-width=".3"/></g></svg>
<svg class="a" style="left:108px;top:210px" width="16" height="16" viewBox="0 0 16 16"><g transform="translate(1 1)" fill="#fff" stroke="#fff"><path d="M0 13H16L8 4Z" stroke-width=".3"/></g><g fill="#808080" stroke="#808080"><path d="M0 13H16L8 4Z" stroke-width=".3"/></g></svg>
<svg class="a" style="left:131px;top:210px" width="16" height="16" viewBox="0 0 16 16"><g transform="translate(1 1)" fill="#fff" stroke="#fff"><path d="M2 2H14M2 2V11H11" fill="none" stroke-width="2"/><path d="M10 8L14 11L10 14Z"/></g><g fill="#808080" stroke="#808080"><path d="M2 2H14M2 2V11H11" fill="none" stroke-width="2"/><path d="M10 8L14 11L10 14Z"/></g></svg>
<svg class="a" style="left:154px;top:210px" width="16" height="16" viewBox="0 0 16 16"><g transform="translate(1 1)" fill="#fff" stroke="#fff"><path d="M3 6L8 2L13 6Z M3 10L8 14L13 10Z" stroke-width=".3"/><path d="M1 8H15" stroke-width="1.4"/></g><g fill="#808080" stroke="#808080"><path d="M3 6L8 2L13 6Z M3 10L8 14L13 10Z" stroke-width=".3"/><path d="M1 8H15" stroke-width="1.4"/></g></svg>
<svg class="a" style="left:183px;top:210px" width="16" height="16" viewBox="0 0 16 16"><g transform="translate(1 1)" fill="#fff" stroke="#fff"><path d="M1 4C4 1 6 6 9 3C11 1 13 3 15 2M1 8C4 5 6 10 9 7M1 12C4 9 6 14 9 11" fill="none" stroke-width="1.4"/><path d="M9 9L15 15M15 9L9 15" stroke-width="1.2"/></g><g fill="#808080" stroke="#808080"><path d="M1 4C4 1 6 6 9 3C11 1 13 3 15 2M1 8C4 5 6 10 9 7M1 12C4 9 6 14 9 11" fill="none" stroke-width="1.4"/><path d="M9 9L15 15M15 9L9 15" stroke-width="1.2"/></g></svg>
<svg class="a" style="left:206px;top:210px" width="16" height="16" viewBox="0 0 16 16"><g transform="translate(1 1)" fill="#fff" stroke="#fff"><circle cx="6" cy="6" r="5" fill="none" stroke-width="1.4"/><rect x="5" y="6" width="9" height="9" fill="none" stroke-width="1.4"/><path d="M5 15L14 6" stroke-width="1"/></g><g fill="#808080" stroke="#808080"><circle cx="6" cy="6" r="5" fill="none" stroke-width="1.4"/><rect x="5" y="6" width="9" height="9" fill="none" stroke-width="1.4"/><path d="M5 15L14 6" stroke-width="1"/></g></svg>
<div class="a" style="left:78px;top:210px;width:1px;height:18px;background:#808080;"></div>
<div class="a" style="left:79px;top:210px;width:1px;height:18px;background:#FFFFFF;"></div>
<div class="a" style="left:177px;top:210px;width:1px;height:18px;background:#808080;"></div>
<div class="a" style="left:178px;top:210px;width:1px;height:18px;background:#FFFFFF;"></div>
<div class="a" style="left:4px;top:240px;width:293px;height:451px;background:#fff;border-top:1px solid #808080;border-left:1px solid #808080;border-right:1px solid #fff;border-bottom:1px solid #fff;box-shadow:inset 1px 1px 0 #404040"></div>
<svg class="a" style="left:12px;top:245px" width="9" height="9" viewBox="0 0 9 9"><rect x=".5" y=".5" width="8" height="8" fill="#fff" stroke="#000"/><path d="M2 4.5H7" stroke="#000"/></svg>
<svg class="a" style="left:21px;top:249px" width="7" height="1" viewBox="0 0 7 1"><path d="M0 .5H7" stroke="#000" stroke-dasharray="1 1"/></svg>
<svg class="a" style="left:27px;top:241px" width="15" height="15" viewBox="0 0 15 15"><g fill="#40D8F8" stroke="#1A5AC8" stroke-width="1"><rect x=".5" y=".5" width="6" height="6"/><rect x="8.5" y=".5" width="6" height="6"/><rect x=".5" y="8.5" width="6" height="6"/><rect x="8.5" y="8.5" width="6" height="6"/></g></svg>
<div class="a" style="left:46px;top:241px;width:64px;height:15px;background:#0A246A;"></div>
<svg class="a" style="left:48px;top:244px;" width="61" height="12" shape-rendering="crispEdges"><path d="M2 0h1v1h-1zM2 1h1v1h-1zM5 1h4v1h-4zM2 2h1v1h-1zM5 2h1v1h-1zM8 2h1v1h-1zM0 3h6v1h-6zM8 3h1v1h-1zM2 4h1v1h-1zM5 4h1v1h-1zM8 4h1v1h-1zM1 5h3v1h-3zM5 5h1v1h-1zM8 5h1v1h-1zM1 6h2v1h-2zM4 6h2v1h-2zM8 6h1v1h-1zM0 7h1v1h-1zM2 7h1v1h-1zM5 7h1v1h-1zM8 7h1v1h-1zM0 8h1v1h-1zM2 8h1v1h-1zM5 8h1v1h-1zM8 8h1v1h-1zM2 9h1v1h-1zM4 9h1v1h-1zM8 9h1v1h-1zM10 9h1v1h-1zM2 10h2v1h-2zM8 10h3v1h-3zM18 0h1v1h-1zM13 1h10v1h-10zM13 2h1v1h-1zM18 2h1v1h-1zM13 3h1v1h-1zM18 3h1v1h-1zM13 4h10v1h-10zM13 5h1v1h-1zM18 5h1v1h-1zM13 6h1v1h-1zM17 6h3v1h-3zM13 7h1v1h-1zM16 7h1v1h-1zM18 7h1v1h-1zM20 7h1v1h-1zM13 8h1v1h-1zM15 8h1v1h-1zM18 8h1v1h-1zM21 8h1v1h-1zM12 9h1v1h-1zM14 9h1v1h-1zM18 9h1v1h-1zM22 9h1v1h-1zM12 10h1v1h-1zM18 10h1v1h-1zM25 0h4v1h-4zM30 0h1v1h-1zM34 0h1v1h-1zM26 1h1v1h-1zM28 1h1v1h-1zM31 1h1v1h-1zM33 1h1v1h-1zM24 2h11v1h-11zM26 3h1v1h-1zM28 3h1v1h-1zM32 3h1v1h-1zM25 4h4v1h-4zM30 4h5v1h-5zM26 5h1v1h-1zM32 5h1v1h-1zM25 6h4v1h-4zM32 6h1v1h-1zM24 7h1v1h-1zM26 7h1v1h-1zM28 7h7v1h-7zM26 8h1v1h-1zM28 8h1v1h-1zM32 8h1v1h-1zM26 9h1v1h-1zM28 9h1v1h-1zM32 9h1v1h-1zM26 10h3v1h-3zM32 10h1v1h-1zM38 0h1v1h-1zM38 1h1v1h-1zM41 1h5v1h-5zM37 2h1v1h-1zM41 2h1v1h-1zM45 2h1v1h-1zM37 3h1v1h-1zM39 3h1v1h-1zM41 3h1v1h-1zM45 3h1v1h-1zM36 4h3v1h-3zM41 4h5v1h-5zM38 5h1v1h-1zM41 5h1v1h-1zM45 5h1v1h-1zM37 6h1v1h-1zM41 6h1v1h-1zM45 6h1v1h-1zM36 7h4v1h-4zM41 7h5v1h-5zM41 8h1v1h-1zM45 8h1v1h-1zM38 9h2v1h-2zM41 9h1v1h-1zM45 9h1v1h-1zM36 10h2v1h-2zM40 10h7v1h-7zM49 4h5v1h-5zM55 1h3v1h-3zM57 2h1v1h-1zM57 3h1v1h-1zM57 4h1v1h-1zM57 5h1v1h-1zM57 6h1v1h-1zM57 7h1v1h-1zM55 8h5v1h-5z" fill="#fff"/></svg>
<svg class="a" style="left:34px;top:256px" width="1" height="26" viewBox="0 0 1 26"><path d="M.5 0V26" stroke="#000" stroke-dasharray="1 1"/></svg>
<svg class="a" style="left:31px;top:261px" width="9" height="9" viewBox="0 0 9 9"><rect x=".5" y=".5" width="8" height="8" fill="#fff" stroke="#000"/><path d="M2 4.5H7M4.5 2V7" stroke="#000"/></svg>
<svg class="a" style="left:40px;top:265px" width="7" height="1" viewBox="0 0 7 1"><path d="M0 .5H7" stroke="#000" stroke-dasharray="1 1"/></svg>
<svg class="a" style="left:35px;top:281px" width="11" height="1" viewBox="0 0 11 1"><path d="M0 .5H11" stroke="#000" stroke-dasharray="1 1"/></svg>
<svg class="a" style="left:47px;top:259px" width="14" height="14" viewBox="0 0 14 14"><path d="M0 13H14" stroke="#1A1AC0" stroke-width="2"/><path d="M2 4V11M7 0V11M12 4V11M1 11H13" stroke="#1A1AC0" stroke-width="2"/></svg>
<svg class="a" style="left:67px;top:260px;" width="133" height="12" shape-rendering="crispEdges"><path d="M1 0h9v1h-9zM1 1h1v1h-1zM9 1h1v1h-1zM1 2h9v1h-9zM1 3h1v1h-1zM9 3h1v1h-1zM1 4h1v1h-1zM3 4h6v1h-6zM1 5h1v1h-1zM6 5h1v1h-1zM1 6h1v1h-1zM3 6h7v1h-7zM1 7h1v1h-1zM3 7h1v1h-1zM6 7h1v1h-1zM9 7h1v1h-1zM0 8h1v1h-1zM2 8h9v1h-9zM0 9h1v1h-1zM2 9h1v1h-1zM6 9h1v1h-1zM10 9h1v1h-1zM0 10h1v1h-1zM2 10h1v1h-1zM4 10h4v1h-4zM9 10h2v1h-2zM14 0h1v1h-1zM19 0h1v1h-1zM14 1h1v1h-1zM17 1h1v1h-1zM19 1h1v1h-1zM12 2h1v1h-1zM14 2h2v1h-2zM17 2h1v1h-1zM19 2h1v1h-1zM12 3h1v1h-1zM14 3h1v1h-1zM16 3h7v1h-7zM12 4h1v1h-1zM14 4h1v1h-1zM16 4h1v1h-1zM19 4h1v1h-1zM12 5h1v1h-1zM14 5h2v1h-2zM19 5h1v1h-1zM14 6h1v1h-1zM17 6h5v1h-5zM14 7h1v1h-1zM19 7h1v1h-1zM14 8h1v1h-1zM19 8h1v1h-1zM14 9h1v1h-1zM19 9h1v1h-1zM14 10h1v1h-1zM16 10h7v1h-7zM31 4h5v1h-5zM43 1h1v1h-1zM47 1h1v1h-1zM43 2h2v1h-2zM46 2h2v1h-2zM43 3h2v1h-2zM46 3h2v1h-2zM43 4h1v1h-1zM45 4h1v1h-1zM47 4h1v1h-1zM43 5h1v1h-1zM45 5h1v1h-1zM47 5h1v1h-1zM43 6h1v1h-1zM47 6h1v1h-1zM43 7h1v1h-1zM47 7h1v1h-1zM43 8h1v1h-1zM47 8h1v1h-1zM51 1h1v1h-1zM51 3h1v1h-1zM51 4h1v1h-1zM51 5h1v1h-1zM51 6h1v1h-1zM51 7h1v1h-1zM51 8h1v1h-1zM57 1h1v1h-1zM57 2h1v1h-1zM57 3h1v1h-1zM57 4h1v1h-1zM57 5h1v1h-1zM57 6h1v1h-1zM57 7h1v1h-1zM57 8h1v1h-1zM63 1h1v1h-1zM63 2h1v1h-1zM63 3h1v1h-1zM63 4h1v1h-1zM63 5h1v1h-1zM63 6h1v1h-1zM63 7h1v1h-1zM63 8h1v1h-1zM73 1h4v1h-4zM73 2h1v1h-1zM77 2h1v1h-1zM73 3h1v1h-1zM77 3h1v1h-1zM73 4h1v1h-1zM77 4h1v1h-1zM73 5h1v1h-1zM77 5h1v1h-1zM73 6h1v1h-1zM77 6h1v1h-1zM73 7h1v1h-1zM77 7h1v1h-1zM73 8h4v1h-4zM80 3h3v1h-3zM79 4h1v1h-1zM83 4h1v1h-1zM79 5h5v1h-5zM79 6h1v1h-1zM79 7h1v1h-1zM80 8h4v1h-4zM87 1h2v1h-2zM86 2h1v1h-1zM86 3h3v1h-3zM86 4h1v1h-1zM86 5h1v1h-1zM86 6h1v1h-1zM86 7h1v1h-1zM86 8h1v1h-1zM92 3h3v1h-3zM91 4h1v1h-1zM95 4h1v1h-1zM92 5h4v1h-4zM91 6h1v1h-1zM95 6h1v1h-1zM91 7h1v1h-1zM95 7h1v1h-1zM92 8h4v1h-4zM97 3h1v1h-1zM101 3h1v1h-1zM97 4h1v1h-1zM101 4h1v1h-1zM97 5h1v1h-1zM101 5h1v1h-1zM97 6h1v1h-1zM101 6h1v1h-1zM97 7h1v1h-1zM101 7h1v1h-1zM98 8h4v1h-4zM105 1h1v1h-1zM105 2h1v1h-1zM105 3h1v1h-1zM105 4h1v1h-1zM105 5h1v1h-1zM105 6h1v1h-1zM105 7h1v1h-1zM105 8h1v1h-1zM110 1h1v1h-1zM110 2h1v1h-1zM110 3h3v1h-3zM110 4h1v1h-1zM110 5h1v1h-1zM110 6h1v1h-1zM110 7h1v1h-1zM111 8h2v1h-2zM121 1h1v1h-1zM125 1h1v1h-1zM121 2h2v1h-2zM124 2h2v1h-2zM121 3h2v1h-2zM124 3h2v1h-2zM121 4h1v1h-1zM123 4h1v1h-1zM125 4h1v1h-1zM121 5h1v1h-1zM123 5h1v1h-1zM125 5h1v1h-1zM121 6h1v1h-1zM125 6h1v1h-1zM121 7h1v1h-1zM125 7h1v1h-1zM121 8h1v1h-1zM125 8h1v1h-1zM127 1h1v1h-1zM131 1h1v1h-1zM127 2h2v1h-2zM130 2h2v1h-2zM127 3h2v1h-2zM130 3h2v1h-2zM127 4h1v1h-1zM129 4h1v1h-1zM131 4h1v1h-1zM127 5h1v1h-1zM129 5h1v1h-1zM131 5h1v1h-1zM127 6h1v1h-1zM131 6h1v1h-1zM127 7h1v1h-1zM131 7h1v1h-1zM127 8h1v1h-1zM131 8h1v1h-1z" fill="#000"/></svg>
<svg class="a" style="left:46px;top:273px" width="15" height="15" viewBox="0 0 15 15"><path d="M0 0L15 7.5L0 15Z" fill="#E01010"/><path d="M0 9L15 7.5L0 15Z" fill="#A00808"/></svg>
<div class="a" style="left:5px;top:674px;width:291px;height:16px;background:#E8E6E0;"></div>
<div class="a" style="left:5px;top:674px;width:291px;height:16px;background:repeating-conic-gradient(#D4D0C8 0 25%,#fff 0 50%) 0 0/2px 2px"></div>
<div class="a" style="left:5px;top:674px;width:16px;height:16px;background:#D4D0C8;border-top:1px solid #fff;border-left:1px solid #fff;border-right:1px solid #404040;border-bottom:1px solid #404040;box-shadow:inset -1px -1px 0 #808080"></div>
<svg class="a" style="left:10px;top:678px" width="5" height="8" viewBox="0 0 5 8"><path d="M4 0V8L0 4Z" fill="#000"/></svg>
<div class="a" style="left:21px;top:674px;width:171px;height:16px;background:#D4D0C8;border-top:1px solid #fff;border-left:1px solid #fff;border-right:1px solid #404040;border-bottom:1px solid #404040;box-shadow:inset -1px -1px 0 #808080"></div>
<div class="a" style="left:280px;top:674px;width:16px;height:16px;background:#D4D0C8;border-top:1px solid #fff;border-left:1px solid #fff;border-right:1px solid #404040;border-bottom:1px solid #404040;box-shadow:inset -1px -1px 0 #808080"></div>
<svg class="a" style="left:285px;top:678px" width="5" height="8" viewBox="0 0 5 8"><path d="M0 0V8L4 4Z" fill="#000"/></svg>
<div class="a" style="left:303px;top:128px;width:1033px;height:1px;background:#808080;"></div>
<div class="a" style="left:303px;top:129px;width:1033px;height:568px;background:#000;"></div>
<svg class="a" style="left:303px;top:128px" width="1033" height="569" viewBox="0 0 1033 569"><path d="M512 2V569" stroke="#8E5622" stroke-width="2"/><path d="M0 279.5H1033" stroke="#604428" stroke-width="1"/><ellipse cx="512.06" cy="279.93" rx="219.05" ry="219.12" fill="none" stroke="#40B040" stroke-width="2.6" opacity=".22"/><path d="M503 60h18v1h-18zM489 61h14v1h-14zM521 61h14v1h-14zM481 62h8v1h-8zM535 62h8v1h-8zM475 63h6v1h-6zM543 63h6v1h-6zM469 64h6v1h-6zM549 64h6v1h-6zM465 65h4v1h-4zM555 65h4v1h-4zM460 66h5v1h-5zM559 66h5v1h-5zM456 67h4v1h-4zM564 67h4v1h-4zM453 68h3v1h-3zM568 68h3v1h-3zM449 69h4v1h-4zM571 69h4v1h-4zM446 70h3v1h-3zM575 70h3v1h-3zM443 71h3v1h-3zM578 71h3v1h-3zM440 72h3v1h-3zM581 72h3v1h-3zM437 73h3v1h-3zM584 73h3v1h-3zM435 74h2v1h-2zM587 74h3v1h-3zM432 75h3v1h-3zM590 75h2v1h-2zM429 76h3v1h-3zM592 76h3v1h-3zM427 77h2v1h-2zM595 77h2v1h-2zM425 78h2v1h-2zM597 78h2v1h-2zM422 79h3v1h-3zM599 79h3v1h-3zM420 80h2v1h-2zM602 80h2v1h-2zM418 81h2v1h-2zM604 81h2v1h-2zM416 82h2v1h-2zM606 82h2v1h-2zM414 83h2v1h-2zM608 83h2v1h-2zM412 84h2v1h-2zM610 84h2v1h-2zM410 85h2v1h-2zM612 85h2v1h-2zM408 86h2v1h-2zM614 86h2v1h-2zM406 87h2v1h-2zM616 87h2v1h-2zM405 88h1v1h-1zM618 88h2v1h-2zM403 89h2v1h-2zM620 89h1v1h-1zM401 90h2v1h-2zM621 90h2v1h-2zM399 91h2v1h-2zM623 91h2v1h-2zM398 92h1v1h-1zM625 92h1v1h-1zM396 93h2v1h-2zM626 93h2v1h-2zM395 94h1v1h-1zM628 94h2v1h-2zM393 95h2v1h-2zM630 95h1v1h-1zM391 96h2v1h-2zM631 96h2v1h-2zM390 97h1v1h-1zM633 97h1v1h-1zM388 98h2v1h-2zM634 98h2v1h-2zM387 99h1v1h-1zM636 99h1v1h-1zM386 100h1v1h-1zM637 100h2v1h-2zM384 101h2v1h-2zM639 101h1v1h-1zM383 102h1v1h-1zM640 102h1v1h-1zM381 103h2v1h-2zM641 103h2v1h-2zM380 104h1v1h-1zM643 104h1v1h-1zM379 105h1v1h-1zM644 105h1v1h-1zM378 106h1v1h-1zM645 106h2v1h-2zM376 107h2v1h-2zM647 107h1v1h-1zM375 108h1v1h-1zM648 108h1v1h-1zM374 109h1v1h-1zM649 109h1v1h-1zM373 110h1v1h-1zM650 110h2v1h-2zM371 111h2v1h-2zM652 111h1v1h-1zM370 112h1v1h-1zM653 112h1v1h-1zM369 113h1v1h-1zM654 113h1v1h-1zM368 114h1v1h-1zM655 114h1v1h-1zM367 115h1v1h-1zM656 115h1v1h-1zM366 116h1v1h-1zM657 116h2v1h-2zM364 117h2v1h-2zM659 117h1v1h-1zM363 118h1v1h-1zM660 118h1v1h-1zM362 119h1v1h-1zM661 119h1v1h-1zM361 120h1v1h-1zM662 120h1v1h-1zM360 121h1v1h-1zM663 121h1v1h-1zM359 122h1v1h-1zM664 122h1v1h-1zM358 123h1v1h-1zM665 123h1v1h-1zM357 124h1v1h-1zM666 124h1v1h-1zM356 125h1v1h-1zM667 125h1v1h-1zM355 126h1v1h-1zM668 126h1v1h-1zM354 127h1v1h-1zM669 127h1v1h-1zM353 128h1v1h-1zM670 128h1v1h-1zM352 129h1v1h-1zM671 129h1v1h-1zM351 130h1v1h-1zM672 130h1v1h-1zM350 131h1v1h-1zM673 131h1v1h-1zM350 132h1v1h-1zM674 132h1v1h-1zM349 133h1v1h-1zM675 133h1v1h-1zM348 134h1v1h-1zM675 134h1v1h-1zM347 135h1v1h-1zM676 135h1v1h-1zM346 136h1v1h-1zM677 136h1v1h-1zM345 137h1v1h-1zM678 137h1v1h-1zM344 138h1v1h-1zM679 138h1v1h-1zM343 139h1v1h-1zM680 139h1v1h-1zM343 140h1v1h-1zM681 140h1v1h-1zM342 141h1v1h-1zM681 141h1v1h-1zM341 142h1v1h-1zM682 142h1v1h-1zM340 143h1v1h-1zM683 143h1v1h-1zM339 144h1v1h-1zM684 144h1v1h-1zM339 145h1v1h-1zM685 145h1v1h-1zM338 146h1v1h-1zM685 146h1v1h-1zM337 147h1v1h-1zM686 147h1v1h-1zM336 148h1v1h-1zM687 148h1v1h-1zM336 149h1v1h-1zM688 149h1v1h-1zM335 150h1v1h-1zM688 150h1v1h-1zM334 151h1v1h-1zM689 151h1v1h-1zM333 152h1v1h-1zM690 152h1v1h-1zM333 153h1v1h-1zM690 153h1v1h-1zM332 154h1v1h-1zM691 154h1v1h-1zM331 155h1v1h-1zM692 155h1v1h-1zM331 156h1v1h-1zM693 156h1v1h-1zM330 157h1v1h-1zM693 157h1v1h-1zM329 158h1v1h-1zM694 158h1v1h-1zM329 159h1v1h-1zM695 159h1v1h-1zM328 160h1v1h-1zM695 160h1v1h-1zM327 161h1v1h-1zM696 161h1v1h-1zM327 162h1v1h-1zM696 162h1v1h-1zM326 163h1v1h-1zM697 163h1v1h-1zM325 164h1v1h-1zM698 164h1v1h-1zM325 165h1v1h-1zM698 165h1v1h-1zM324 166h1v1h-1zM699 166h1v1h-1zM324 167h1v1h-1zM700 167h1v1h-1zM323 168h1v1h-1zM700 168h1v1h-1zM322 169h1v1h-1zM701 169h1v1h-1zM322 170h1v1h-1zM701 170h1v1h-1zM321 171h1v1h-1zM702 171h1v1h-1zM321 172h1v1h-1zM702 172h1v1h-1zM320 173h1v1h-1zM703 173h1v1h-1zM320 174h1v1h-1zM704 174h1v1h-1zM319 175h1v1h-1zM704 175h1v1h-1zM318 176h1v1h-1zM705 176h1v1h-1zM318 177h1v1h-1zM705 177h1v1h-1zM317 178h1v1h-1zM706 178h1v1h-1zM317 179h1v1h-1zM706 179h1v1h-1zM316 180h1v1h-1zM707 180h1v1h-1zM316 181h1v1h-1zM707 181h1v1h-1zM315 182h1v1h-1zM708 182h1v1h-1zM315 183h1v1h-1zM708 183h1v1h-1zM314 184h1v1h-1zM709 184h1v1h-1zM314 185h1v1h-1zM709 185h1v1h-1zM313 186h1v1h-1zM710 186h1v1h-1zM313 187h1v1h-1zM710 187h1v1h-1zM312 188h1v1h-1zM711 188h1v1h-1zM312 189h1v1h-1zM711 189h1v1h-1zM312 190h1v1h-1zM712 190h1v1h-1zM311 191h1v1h-1zM712 191h1v1h-1zM311 192h1v1h-1zM712 192h1v1h-1zM310 193h1v1h-1zM713 193h1v1h-1zM310 194h1v1h-1zM713 194h1v1h-1zM309 195h1v1h-1zM714 195h1v1h-1zM309 196h1v1h-1zM714 196h1v1h-1zM309 197h1v1h-1zM715 197h1v1h-1zM308 198h1v1h-1zM715 198h1v1h-1zM308 199h1v1h-1zM715 199h1v1h-1zM307 200h1v1h-1zM716 200h1v1h-1zM307 201h1v1h-1zM716 201h1v1h-1zM307 202h1v1h-1zM716 202h1v1h-1zM306 203h1v1h-1zM717 203h1v1h-1zM306 204h1v1h-1zM717 204h1v1h-1zM306 205h1v1h-1zM718 205h1v1h-1zM305 206h1v1h-1zM718 206h1v1h-1zM305 207h1v1h-1zM718 207h1v1h-1zM304 208h1v1h-1zM719 208h1v1h-1zM304 209h1v1h-1zM719 209h1v1h-1zM304 210h1v1h-1zM719 210h1v1h-1zM303 211h1v1h-1zM720 211h1v1h-1zM303 212h1v1h-1zM720 212h1v1h-1zM303 213h1v1h-1zM720 213h1v1h-1zM303 214h1v1h-1zM721 214h1v1h-1zM302 215h1v1h-1zM721 215h1v1h-1zM302 216h1v1h-1zM721 216h1v1h-1zM302 217h1v1h-1zM722 217h1v1h-1zM301 218h1v1h-1zM722 218h1v1h-1zM301 219h1v1h-1zM722 219h1v1h-1zM301 220h1v1h-1zM722 220h1v1h-1zM300 221h1v1h-1zM723 221h1v1h-1zM300 222h1v1h-1zM723 222h1v1h-1zM300 223h1v1h-1zM723 223h1v1h-1zM300 224h1v1h-1zM723 224h1v1h-1zM299 225h1v1h-1zM724 225h1v1h-1zM299 226h1v1h-1zM724 226h1v1h-1zM299 227h1v1h-1zM724 227h1v1h-1zM299 228h1v1h-1zM724 228h1v1h-1zM298 229h1v1h-1zM725 229h1v1h-1zM298 230h1v1h-1zM725 230h1v1h-1zM298 231h1v1h-1zM725 231h1v1h-1zM298 232h1v1h-1zM725 232h1v1h-1zM297 233h1v1h-1zM726 233h1v1h-1zM297 234h1v1h-1zM726 234h1v1h-1zM297 235h1v1h-1zM726 235h1v1h-1zM297 236h1v1h-1zM726 236h1v1h-1zM297 237h1v1h-1zM726 237h1v1h-1zM296 238h1v1h-1zM727 238h1v1h-1zM296 239h1v1h-1zM727 239h1v1h-1zM296 240h1v1h-1zM727 240h1v1h-1zM296 241h1v1h-1zM727 241h1v1h-1zM296 242h1v1h-1zM727 242h1v1h-1zM296 243h1v1h-1zM728 243h1v1h-1zM295 244h1v1h-1zM728 244h1v1h-1zM295 245h1v1h-1zM728 245h1v1h-1zM295 246h1v1h-1zM728 246h1v1h-1zM295 247h1v1h-1zM728 247h1v1h-1zM295 248h1v1h-1zM728 248h1v1h-1zM295 249h1v1h-1zM728 249h1v1h-1zM294 250h1v1h-1zM729 250h1v1h-1zM294 251h1v1h-1zM729 251h1v1h-1zM294 252h1v1h-1zM729 252h1v1h-1zM294 253h1v1h-1zM729 253h1v1h-1zM294 254h1v1h-1zM729 254h1v1h-1zM294 255h1v1h-1zM729 255h1v1h-1zM294 256h1v1h-1zM729 256h1v1h-1zM294 257h1v1h-1zM729 257h1v1h-1zM294 258h1v1h-1zM730 258h1v1h-1zM293 259h1v1h-1zM730 259h1v1h-1zM293 260h1v1h-1zM730 260h1v1h-1zM293 261h1v1h-1zM730 261h1v1h-1zM293 262h1v1h-1zM730 262h1v1h-1zM293 263h1v1h-1zM730 263h1v1h-1zM293 264h1v1h-1zM730 264h1v1h-1zM293 265h1v1h-1zM730 265h1v1h-1zM293 266h1v1h-1zM730 266h1v1h-1zM293 267h1v1h-1zM730 267h1v1h-1zM293 268h1v1h-1zM730 268h1v1h-1zM293 269h1v1h-1zM730 269h1v1h-1zM293 270h1v1h-1zM730 270h1v1h-1zM293 271h1v1h-1zM730 271h1v1h-1zM293 272h1v1h-1zM730 272h1v1h-1zM293 273h1v1h-1zM731 273h1v1h-1zM293 274h1v1h-1zM731 274h1v1h-1zM293 275h1v1h-1zM731 275h1v1h-1zM293 276h1v1h-1zM731 276h1v1h-1zM293 277h1v1h-1zM731 277h1v1h-1zM293 278h1v1h-1zM731 278h1v1h-1zM293 279h1v1h-1zM731 279h1v1h-1zM293 280h1v1h-1zM731 280h1v1h-1zM293 281h1v1h-1zM731 281h1v1h-1zM293 282h1v1h-1zM731 282h1v1h-1zM293 283h1v1h-1zM731 283h1v1h-1zM293 284h1v1h-1zM731 284h1v1h-1zM293 285h1v1h-1zM731 285h1v1h-1zM293 286h1v1h-1zM731 286h1v1h-1zM293 287h1v1h-1zM730 287h1v1h-1zM293 288h1v1h-1zM730 288h1v1h-1zM293 289h1v1h-1zM730 289h1v1h-1zM293 290h1v1h-1zM730 290h1v1h-1zM293 291h1v1h-1zM730 291h1v1h-1zM293 292h1v1h-1zM730 292h1v1h-1zM293 293h1v1h-1zM730 293h1v1h-1zM293 294h1v1h-1zM730 294h1v1h-1zM293 295h1v1h-1zM730 295h1v1h-1zM293 296h1v1h-1zM730 296h1v1h-1zM293 297h1v1h-1zM730 297h1v1h-1zM293 298h1v1h-1zM730 298h1v1h-1zM293 299h1v1h-1zM730 299h1v1h-1zM293 300h1v1h-1zM730 300h1v1h-1zM294 301h1v1h-1zM730 301h1v1h-1zM294 302h1v1h-1zM729 302h1v1h-1zM294 303h1v1h-1zM729 303h1v1h-1zM294 304h1v1h-1zM729 304h1v1h-1zM294 305h1v1h-1zM729 305h1v1h-1zM294 306h1v1h-1zM729 306h1v1h-1zM294 307h1v1h-1zM729 307h1v1h-1zM294 308h1v1h-1zM729 308h1v1h-1zM295 309h1v1h-1zM729 309h1v1h-1zM295 310h1v1h-1zM728 310h1v1h-1zM295 311h1v1h-1zM728 311h1v1h-1zM295 312h1v1h-1zM728 312h1v1h-1zM295 313h1v1h-1zM728 313h1v1h-1zM295 314h1v1h-1zM728 314h1v1h-1zM295 315h1v1h-1zM728 315h1v1h-1zM296 316h1v1h-1zM728 316h1v1h-1zM296 317h1v1h-1zM727 317h1v1h-1zM296 318h1v1h-1zM727 318h1v1h-1zM296 319h1v1h-1zM727 319h1v1h-1zM296 320h1v1h-1zM727 320h1v1h-1zM296 321h1v1h-1zM727 321h1v1h-1zM297 322h1v1h-1zM726 322h1v1h-1zM297 323h1v1h-1zM726 323h1v1h-1zM297 324h1v1h-1zM726 324h1v1h-1zM297 325h1v1h-1zM726 325h1v1h-1zM298 326h1v1h-1zM726 326h1v1h-1zM298 327h1v1h-1zM725 327h1v1h-1zM298 328h1v1h-1zM725 328h1v1h-1zM298 329h1v1h-1zM725 329h1v1h-1zM298 330h1v1h-1zM725 330h1v1h-1zM299 331h1v1h-1zM724 331h1v1h-1zM299 332h1v1h-1zM724 332h1v1h-1zM299 333h1v1h-1zM724 333h1v1h-1zM299 334h1v1h-1zM724 334h1v1h-1zM300 335h1v1h-1zM723 335h1v1h-1zM300 336h1v1h-1zM723 336h1v1h-1zM300 337h1v1h-1zM723 337h1v1h-1zM300 338h1v1h-1zM723 338h1v1h-1zM301 339h1v1h-1zM722 339h1v1h-1zM301 340h1v1h-1zM722 340h1v1h-1zM301 341h1v1h-1zM722 341h1v1h-1zM302 342h1v1h-1zM721 342h1v1h-1zM302 343h1v1h-1zM721 343h1v1h-1zM302 344h1v1h-1zM721 344h1v1h-1zM303 345h1v1h-1zM721 345h1v1h-1zM303 346h1v1h-1zM720 346h1v1h-1zM303 347h1v1h-1zM720 347h1v1h-1zM304 348h1v1h-1zM720 348h1v1h-1zM304 349h1v1h-1zM719 349h1v1h-1zM304 350h1v1h-1zM719 350h1v1h-1zM305 351h1v1h-1zM719 351h1v1h-1zM305 352h1v1h-1zM718 352h1v1h-1zM305 353h1v1h-1zM718 353h1v1h-1zM306 354h1v1h-1zM718 354h1v1h-1zM306 355h1v1h-1zM717 355h1v1h-1zM306 356h1v1h-1zM717 356h1v1h-1zM307 357h1v1h-1zM716 357h1v1h-1zM307 358h1v1h-1zM716 358h1v1h-1zM307 359h1v1h-1zM716 359h1v1h-1zM308 360h1v1h-1zM715 360h1v1h-1zM308 361h1v1h-1zM715 361h1v1h-1zM309 362h1v1h-1zM714 362h1v1h-1zM309 363h1v1h-1zM714 363h1v1h-1zM309 364h1v1h-1zM714 364h1v1h-1zM310 365h1v1h-1zM713 365h1v1h-1zM310 366h1v1h-1zM713 366h1v1h-1zM311 367h1v1h-1zM712 367h1v1h-1zM311 368h1v1h-1zM712 368h1v1h-1zM312 369h1v1h-1zM711 369h1v1h-1zM312 370h1v1h-1zM711 370h1v1h-1zM313 371h1v1h-1zM711 371h1v1h-1zM313 372h1v1h-1zM710 372h1v1h-1zM313 373h1v1h-1zM710 373h1v1h-1zM314 374h1v1h-1zM709 374h1v1h-1zM314 375h1v1h-1zM709 375h1v1h-1zM315 376h1v1h-1zM708 376h1v1h-1zM315 377h1v1h-1zM708 377h1v1h-1zM316 378h1v1h-1zM707 378h1v1h-1zM316 379h1v1h-1zM707 379h1v1h-1zM317 380h1v1h-1zM706 380h1v1h-1zM317 381h1v1h-1zM706 381h1v1h-1zM318 382h1v1h-1zM705 382h1v1h-1zM319 383h1v1h-1zM705 383h1v1h-1zM319 384h1v1h-1zM704 384h1v1h-1zM320 385h1v1h-1zM704 385h1v1h-1zM320 386h1v1h-1zM703 386h1v1h-1zM321 387h1v1h-1zM702 387h1v1h-1zM321 388h1v1h-1zM702 388h1v1h-1zM322 389h1v1h-1zM701 389h1v1h-1zM322 390h1v1h-1zM701 390h1v1h-1zM323 391h1v1h-1zM700 391h1v1h-1zM324 392h1v1h-1zM699 392h1v1h-1zM324 393h1v1h-1zM699 393h1v1h-1zM325 394h1v1h-1zM698 394h1v1h-1zM325 395h1v1h-1zM698 395h1v1h-1zM326 396h1v1h-1zM697 396h1v1h-1zM327 397h1v1h-1zM696 397h1v1h-1zM327 398h1v1h-1zM696 398h1v1h-1zM328 399h1v1h-1zM695 399h1v1h-1zM329 400h1v1h-1zM694 400h1v1h-1zM329 401h1v1h-1zM694 401h1v1h-1zM330 402h1v1h-1zM693 402h1v1h-1zM331 403h1v1h-1zM692 403h1v1h-1zM331 404h1v1h-1zM692 404h1v1h-1zM332 405h1v1h-1zM691 405h1v1h-1zM333 406h1v1h-1zM690 406h1v1h-1zM333 407h1v1h-1zM690 407h1v1h-1zM334 408h1v1h-1zM689 408h1v1h-1zM335 409h1v1h-1zM688 409h1v1h-1zM336 410h1v1h-1zM687 410h1v1h-1zM336 411h1v1h-1zM687 411h1v1h-1zM337 412h1v1h-1zM686 412h1v1h-1zM338 413h1v1h-1zM685 413h1v1h-1zM339 414h1v1h-1zM684 414h1v1h-1zM339 415h1v1h-1zM684 415h1v1h-1zM340 416h1v1h-1zM683 416h1v1h-1zM341 417h1v1h-1zM682 417h1v1h-1zM342 418h1v1h-1zM681 418h1v1h-1zM343 419h1v1h-1zM680 419h1v1h-1zM344 420h1v1h-1zM680 420h1v1h-1zM344 421h1v1h-1zM679 421h1v1h-1zM345 422h1v1h-1zM678 422h1v1h-1zM346 423h1v1h-1zM677 423h1v1h-1zM347 424h1v1h-1zM676 424h1v1h-1zM348 425h1v1h-1zM675 425h1v1h-1zM349 426h1v1h-1zM674 426h1v1h-1zM350 427h1v1h-1zM673 427h1v1h-1zM351 428h1v1h-1zM673 428h1v1h-1zM351 429h1v1h-1zM672 429h1v1h-1zM352 430h1v1h-1zM671 430h1v1h-1zM353 431h1v1h-1zM670 431h1v1h-1zM354 432h1v1h-1zM669 432h1v1h-1zM355 433h1v1h-1zM668 433h1v1h-1zM356 434h1v1h-1zM667 434h1v1h-1zM357 435h1v1h-1zM666 435h1v1h-1zM358 436h1v1h-1zM665 436h1v1h-1zM359 437h1v1h-1zM664 437h1v1h-1zM360 438h1v1h-1zM663 438h1v1h-1zM361 439h1v1h-1zM662 439h1v1h-1zM362 440h2v1h-2zM661 440h1v1h-1zM364 441h1v1h-1zM659 441h2v1h-2zM365 442h1v1h-1zM658 442h1v1h-1zM366 443h1v1h-1zM657 443h1v1h-1zM367 444h1v1h-1zM656 444h1v1h-1zM368 445h1v1h-1zM655 445h1v1h-1zM369 446h1v1h-1zM654 446h1v1h-1zM370 447h2v1h-2zM653 447h1v1h-1zM372 448h1v1h-1zM651 448h2v1h-2zM373 449h1v1h-1zM650 449h1v1h-1zM374 450h1v1h-1zM649 450h1v1h-1zM375 451h1v1h-1zM648 451h1v1h-1zM376 452h2v1h-2zM646 452h2v1h-2zM378 453h1v1h-1zM645 453h1v1h-1zM379 454h1v1h-1zM644 454h1v1h-1zM380 455h2v1h-2zM642 455h2v1h-2zM382 456h1v1h-1zM641 456h1v1h-1zM383 457h1v1h-1zM640 457h1v1h-1zM384 458h2v1h-2zM638 458h2v1h-2zM386 459h1v1h-1zM637 459h1v1h-1zM387 460h2v1h-2zM635 460h2v1h-2zM389 461h1v1h-1zM634 461h1v1h-1zM390 462h2v1h-2zM632 462h2v1h-2zM392 463h1v1h-1zM631 463h1v1h-1zM393 464h2v1h-2zM629 464h2v1h-2zM395 465h1v1h-1zM628 465h1v1h-1zM396 466h2v1h-2zM626 466h2v1h-2zM398 467h2v1h-2zM624 467h2v1h-2zM400 468h1v1h-1zM623 468h1v1h-1zM401 469h2v1h-2zM621 469h2v1h-2zM403 470h2v1h-2zM619 470h2v1h-2zM405 471h2v1h-2zM617 471h2v1h-2zM407 472h1v1h-1zM616 472h1v1h-1zM408 473h2v1h-2zM614 473h2v1h-2zM410 474h2v1h-2zM612 474h2v1h-2zM412 475h2v1h-2zM610 475h2v1h-2zM414 476h2v1h-2zM608 476h2v1h-2zM416 477h2v1h-2zM606 477h2v1h-2zM418 478h3v1h-3zM604 478h2v1h-2zM421 479h2v1h-2zM601 479h3v1h-3zM423 480h2v1h-2zM599 480h2v1h-2zM425 481h2v1h-2zM597 481h2v1h-2zM427 482h3v1h-3zM594 482h3v1h-3zM430 483h2v1h-2zM592 483h2v1h-2zM432 484h3v1h-3zM589 484h3v1h-3zM435 485h3v1h-3zM587 485h2v1h-2zM438 486h2v1h-2zM584 486h3v1h-3zM440 487h3v1h-3zM581 487h3v1h-3zM443 488h3v1h-3zM578 488h3v1h-3zM446 489h4v1h-4zM574 489h4v1h-4zM450 490h3v1h-3zM571 490h3v1h-3zM453 491h4v1h-4zM567 491h4v1h-4zM457 492h4v1h-4zM563 492h4v1h-4zM461 493h4v1h-4zM559 493h4v1h-4zM465 494h5v1h-5zM554 494h5v1h-5zM470 495h6v1h-6zM548 495h6v1h-6zM476 496h6v1h-6zM542 496h6v1h-6zM482 497h9v1h-9zM533 497h9v1h-9zM491 498h16v1h-16zM517 498h16v1h-16zM507 499h10v1h-10z" fill="#62D662" shape-rendering="crispEdges"/><path d="M41.5 509V529.5H61" stroke="#30C030" fill="none"/><path d="M41 529.5H61" stroke="#C83030"/><path d="M912.5 533V557M1008.5 533V557M912 545.5H1009" stroke="#F0F080"/></svg>
<svg class="a" style="left:289px;top:134px" width="6" height="7" shape-rendering="crispEdges"><path d="M0 0h2v1h-2zM3 0h2v1h-2zM1 1h1v1h-1zM3 1h1v1h-1zM2 2h1v1h-1zM2 3h1v1h-1zM2 4h1v1h-1zM1 5h1v1h-1zM3 5h1v1h-1zM0 6h2v1h-2zM3 6h2v1h-2z" fill="#000"/></svg>
<svg class="a" style="left:341px;top:622px" width="6" height="8" shape-rendering="crispEdges"><path d="M0 0h3v1h-3zM3 0h3v1h-3zM1 1h2v1h-2zM3 1h2v1h-2zM1 2h4v1h-4zM2 3h2v1h-2zM2 4h2v1h-2zM2 5h2v1h-2zM2 6h2v1h-2zM1 7h4v1h-4z" fill="#30E030"/></svg>
<svg class="a" style="left:370px;top:652px" width="6" height="8" shape-rendering="crispEdges"><path d="M0 0h3v1h-3zM3 0h3v1h-3zM1 1h2v1h-2zM3 1h2v1h-2zM1 2h2v1h-2zM3 2h2v1h-2zM2 3h2v1h-2zM2 4h2v1h-2zM1 5h2v1h-2zM3 5h2v1h-2zM1 6h2v1h-2zM3 6h2v1h-2zM0 7h3v1h-3zM3 7h3v1h-3z" fill="#F01818"/></svg>
<svg class="a" style="left:311px;top:676px;" width="73" height="12" shape-rendering="crispEdges"><path d="M1 0h2v1h-2zM5 0h6v1h-6zM2 1h2v1h-2zM5 1h2v1h-2zM9 1h2v1h-2zM0 2h5v1h-5zM5 2h2v1h-2zM7 2h2v1h-2zM9 2h2v1h-2zM3 3h2v1h-2zM5 3h2v1h-2zM7 3h2v1h-2zM9 3h2v1h-2zM2 4h2v1h-2zM5 4h2v1h-2zM7 4h2v1h-2zM9 4h2v1h-2zM1 5h4v1h-4zM5 5h2v1h-2zM7 5h2v1h-2zM9 5h2v1h-2zM0 6h2v1h-2zM2 6h2v1h-2zM5 6h2v1h-2zM7 6h2v1h-2zM9 6h2v1h-2zM2 7h2v1h-2zM7 7h2v1h-2zM2 8h2v1h-2zM6 8h3v1h-3zM10 8h2v1h-2zM2 9h2v1h-2zM5 9h2v1h-2zM7 9h2v1h-2zM10 9h2v1h-2zM2 10h2v1h-2zM4 10h2v1h-2zM8 10h4v1h-4zM16 0h2v1h-2zM16 1h6v1h-6zM15 2h2v1h-2zM19 2h2v1h-2zM14 3h10v1h-10zM13 4h2v1h-2zM15 4h2v1h-2zM18 4h2v1h-2zM22 4h2v1h-2zM15 5h9v1h-9zM15 6h2v1h-2zM18 6h2v1h-2zM22 6h2v1h-2zM15 7h9v1h-9zM15 8h2v1h-2zM18 8h2v1h-2zM22 8h2v1h-2zM14 9h2v1h-2zM18 9h2v1h-2zM20 9h2v1h-2zM22 9h2v1h-2zM13 10h2v1h-2zM21 10h2v1h-2zM29 3h2v1h-2zM29 4h2v1h-2zM29 7h2v1h-2zM29 8h2v1h-2zM36 0h2v1h-2zM40 0h2v1h-2zM36 1h9v1h-9zM35 2h2v1h-2zM37 2h2v1h-2zM39 2h2v1h-2zM42 2h2v1h-2zM35 3h2v1h-2zM37 3h2v1h-2zM39 3h2v1h-2zM42 3h2v1h-2zM34 4h3v1h-3zM37 4h2v1h-2zM39 4h6v1h-6zM33 5h2v1h-2zM35 5h2v1h-2zM37 5h4v1h-4zM42 5h2v1h-2zM35 6h2v1h-2zM37 6h2v1h-2zM39 6h3v1h-3zM42 6h2v1h-2zM35 7h2v1h-2zM37 7h2v1h-2zM39 7h2v1h-2zM41 7h3v1h-3zM35 8h2v1h-2zM37 8h2v1h-2zM39 8h2v1h-2zM42 8h2v1h-2zM35 9h2v1h-2zM37 9h2v1h-2zM39 9h2v1h-2zM42 9h2v1h-2zM35 10h3v1h-3zM39 10h2v1h-2zM41 10h3v1h-3zM47 0h2v1h-2zM51 0h6v1h-6zM48 1h2v1h-2zM51 1h2v1h-2zM55 1h2v1h-2zM46 2h5v1h-5zM51 2h2v1h-2zM53 2h2v1h-2zM55 2h2v1h-2zM49 3h2v1h-2zM51 3h2v1h-2zM53 3h2v1h-2zM55 3h2v1h-2zM48 4h2v1h-2zM51 4h2v1h-2zM53 4h2v1h-2zM55 4h2v1h-2zM47 5h4v1h-4zM51 5h2v1h-2zM53 5h2v1h-2zM55 5h2v1h-2zM46 6h2v1h-2zM48 6h2v1h-2zM51 6h2v1h-2zM53 6h2v1h-2zM55 6h2v1h-2zM48 7h2v1h-2zM53 7h2v1h-2zM48 8h2v1h-2zM52 8h3v1h-3zM56 8h2v1h-2zM48 9h2v1h-2zM51 9h2v1h-2zM53 9h2v1h-2zM56 9h2v1h-2zM48 10h2v1h-2zM50 10h2v1h-2zM54 10h4v1h-4zM60 0h11v1h-11zM60 1h2v1h-2zM63 1h2v1h-2zM69 1h2v1h-2zM60 2h2v1h-2zM63 2h6v1h-6zM69 2h2v1h-2zM60 3h2v1h-2zM62 3h3v1h-3zM66 3h2v1h-2zM69 3h2v1h-2zM60 4h3v1h-3zM64 4h3v1h-3zM69 4h2v1h-2zM60 5h2v1h-2zM63 5h2v1h-2zM66 5h2v1h-2zM69 5h2v1h-2zM60 6h4v1h-4zM64 6h2v1h-2zM67 6h4v1h-4zM60 7h2v1h-2zM65 7h2v1h-2zM69 7h2v1h-2zM60 8h2v1h-2zM64 8h2v1h-2zM69 8h2v1h-2zM60 9h2v1h-2zM65 9h2v1h-2zM69 9h2v1h-2zM60 10h11v1h-11z" fill="#D0D0D0"/></svg>
<svg class="a" style="left:404px;top:676px;" width="68" height="12" shape-rendering="crispEdges"><path d="M1 1h2v1h-2zM5 1h2v1h-2zM1 2h2v1h-2zM5 2h2v1h-2zM1 3h2v1h-2zM3 3h2v1h-2zM5 3h2v1h-2zM1 4h2v1h-2zM3 4h2v1h-2zM5 4h2v1h-2zM1 5h2v1h-2zM3 5h2v1h-2zM5 5h2v1h-2zM1 6h2v1h-2zM3 6h2v1h-2zM5 6h2v1h-2zM2 7h2v1h-2zM4 7h2v1h-2zM2 8h2v1h-2zM4 8h2v1h-2zM8 1h5v1h-5zM7 2h2v1h-2zM12 2h2v1h-2zM7 3h2v1h-2zM7 4h2v1h-2zM7 5h2v1h-2zM7 6h2v1h-2zM7 7h2v1h-2zM12 7h2v1h-2zM8 8h5v1h-5zM16 1h5v1h-5zM15 2h2v1h-2zM15 3h2v1h-2zM16 4h4v1h-4zM19 5h2v1h-2zM19 6h2v1h-2zM19 7h2v1h-2zM15 8h5v1h-5zM24 3h2v1h-2zM24 4h2v1h-2zM24 7h2v1h-2zM24 8h2v1h-2zM31 0h2v1h-2zM35 0h2v1h-2zM31 1h9v1h-9zM30 2h2v1h-2zM32 2h2v1h-2zM34 2h2v1h-2zM37 2h2v1h-2zM30 3h2v1h-2zM32 3h2v1h-2zM34 3h2v1h-2zM37 3h2v1h-2zM29 4h3v1h-3zM32 4h2v1h-2zM34 4h6v1h-6zM28 5h2v1h-2zM30 5h2v1h-2zM32 5h4v1h-4zM37 5h2v1h-2zM30 6h2v1h-2zM32 6h2v1h-2zM34 6h3v1h-3zM37 6h2v1h-2zM30 7h2v1h-2zM32 7h2v1h-2zM34 7h2v1h-2zM36 7h3v1h-3zM30 8h2v1h-2zM32 8h2v1h-2zM34 8h2v1h-2zM37 8h2v1h-2zM30 9h2v1h-2zM32 9h2v1h-2zM34 9h2v1h-2zM37 9h2v1h-2zM30 10h3v1h-3zM34 10h2v1h-2zM36 10h3v1h-3zM42 0h2v1h-2zM46 0h6v1h-6zM43 1h2v1h-2zM46 1h2v1h-2zM50 1h2v1h-2zM41 2h5v1h-5zM46 2h2v1h-2zM48 2h2v1h-2zM50 2h2v1h-2zM44 3h2v1h-2zM46 3h2v1h-2zM48 3h2v1h-2zM50 3h2v1h-2zM43 4h2v1h-2zM46 4h2v1h-2zM48 4h2v1h-2zM50 4h2v1h-2zM42 5h4v1h-4zM46 5h2v1h-2zM48 5h2v1h-2zM50 5h2v1h-2zM41 6h2v1h-2zM43 6h2v1h-2zM46 6h2v1h-2zM48 6h2v1h-2zM50 6h2v1h-2zM43 7h2v1h-2zM48 7h2v1h-2zM43 8h2v1h-2zM47 8h3v1h-3zM51 8h2v1h-2zM43 9h2v1h-2zM46 9h2v1h-2zM48 9h2v1h-2zM51 9h2v1h-2zM43 10h2v1h-2zM45 10h2v1h-2zM49 10h4v1h-4zM55 0h11v1h-11zM55 1h2v1h-2zM58 1h2v1h-2zM64 1h2v1h-2zM55 2h2v1h-2zM58 2h6v1h-6zM64 2h2v1h-2zM55 3h2v1h-2zM57 3h3v1h-3zM61 3h2v1h-2zM64 3h2v1h-2zM55 4h3v1h-3zM59 4h3v1h-3zM64 4h2v1h-2zM55 5h2v1h-2zM58 5h2v1h-2zM61 5h2v1h-2zM64 5h2v1h-2zM55 6h4v1h-4zM59 6h2v1h-2zM62 6h4v1h-4zM55 7h2v1h-2zM60 7h2v1h-2zM64 7h2v1h-2zM55 8h2v1h-2zM59 8h2v1h-2zM64 8h2v1h-2zM55 9h2v1h-2zM60 9h2v1h-2zM64 9h2v1h-2zM55 10h11v1h-11z" fill="#D0D0D0"/></svg>
<svg class="a" style="left:493px;top:676px;" width="119" height="12" shape-rendering="crispEdges"><path d="M1 1h10v1h-10zM4 2h2v1h-2zM9 2h2v1h-2zM4 3h2v1h-2zM9 3h2v1h-2zM4 4h2v1h-2zM9 4h2v1h-2zM4 5h2v1h-2zM9 5h2v1h-2zM4 6h2v1h-2zM9 6h2v1h-2zM3 7h2v1h-2zM9 7h2v1h-2zM3 8h2v1h-2zM9 8h2v1h-2zM2 9h2v1h-2zM9 9h2v1h-2zM1 10h2v1h-2zM7 10h3v1h-3zM15 0h8v1h-8zM15 1h2v1h-2zM21 1h2v1h-2zM15 2h8v1h-8zM15 3h2v1h-2zM21 3h2v1h-2zM15 4h8v1h-8zM15 5h2v1h-2zM21 5h2v1h-2zM15 6h8v1h-8zM15 7h2v1h-2zM21 7h2v1h-2zM13 8h12v1h-12zM16 9h2v1h-2zM20 9h2v1h-2zM13 10h4v1h-4zM21 10h4v1h-4zM30 -2h2v1h-2zM30 -1h2v1h-2zM30 0h2v1h-2zM29 1h2v1h-2zM29 2h2v1h-2zM29 3h2v1h-2zM28 4h2v1h-2zM28 5h2v1h-2zM28 6h2v1h-2zM27 7h2v1h-2zM27 8h2v1h-2zM27 9h2v1h-2zM35 0h2v1h-2zM40 0h2v1h-2zM35 1h2v1h-2zM40 1h2v1h-2zM34 2h2v1h-2zM39 2h2v1h-2zM41 2h2v1h-2zM34 3h2v1h-2zM36 3h2v1h-2zM38 3h2v1h-2zM42 3h2v1h-2zM33 4h4v1h-4zM37 4h2v1h-2zM39 4h4v1h-4zM43 4h2v1h-2zM35 5h2v1h-2zM34 6h2v1h-2zM36 6h2v1h-2zM38 6h7v1h-7zM33 7h4v1h-4zM40 7h2v1h-2zM36 8h2v1h-2zM39 8h2v1h-2zM42 8h2v1h-2zM35 9h2v1h-2zM38 9h2v1h-2zM42 9h2v1h-2zM33 10h3v1h-3zM38 10h5v1h-5zM43 10h2v1h-2zM47 0h11v1h-11zM47 1h2v1h-2zM50 1h2v1h-2zM56 1h2v1h-2zM47 2h2v1h-2zM50 2h6v1h-6zM56 2h2v1h-2zM47 3h2v1h-2zM49 3h3v1h-3zM53 3h2v1h-2zM56 3h2v1h-2zM47 4h3v1h-3zM51 4h3v1h-3zM56 4h2v1h-2zM47 5h2v1h-2zM50 5h2v1h-2zM53 5h2v1h-2zM56 5h2v1h-2zM47 6h4v1h-4zM51 6h2v1h-2zM54 6h4v1h-4zM47 7h2v1h-2zM52 7h2v1h-2zM56 7h2v1h-2zM47 8h2v1h-2zM51 8h2v1h-2zM56 8h2v1h-2zM47 9h2v1h-2zM52 9h2v1h-2zM56 9h2v1h-2zM47 10h11v1h-11zM60 0h11v1h-11zM64 1h2v1h-2zM63 2h2v1h-2zM60 3h11v1h-11zM60 4h2v1h-2zM63 4h2v1h-2zM66 4h2v1h-2zM69 4h2v1h-2zM60 5h2v1h-2zM63 5h5v1h-5zM69 5h2v1h-2zM60 6h2v1h-2zM63 6h2v1h-2zM66 6h2v1h-2zM69 6h2v1h-2zM60 7h2v1h-2zM63 7h5v1h-5zM69 7h2v1h-2zM60 8h2v1h-2zM63 8h2v1h-2zM66 8h2v1h-2zM69 8h2v1h-2zM60 9h11v1h-11zM60 10h2v1h-2zM69 10h2v1h-2zM75 3h2v1h-2zM75 4h2v1h-2zM75 7h2v1h-2zM75 8h2v1h-2zM82 0h2v1h-2zM86 0h2v1h-2zM82 1h9v1h-9zM81 2h2v1h-2zM83 2h2v1h-2zM85 2h2v1h-2zM88 2h2v1h-2zM81 3h2v1h-2zM83 3h2v1h-2zM85 3h2v1h-2zM88 3h2v1h-2zM80 4h3v1h-3zM83 4h2v1h-2zM85 4h6v1h-6zM79 5h2v1h-2zM81 5h2v1h-2zM83 5h4v1h-4zM88 5h2v1h-2zM81 6h2v1h-2zM83 6h2v1h-2zM85 6h3v1h-3zM88 6h2v1h-2zM81 7h2v1h-2zM83 7h2v1h-2zM85 7h2v1h-2zM87 7h3v1h-3zM81 8h2v1h-2zM83 8h2v1h-2zM85 8h2v1h-2zM88 8h2v1h-2zM81 9h2v1h-2zM83 9h2v1h-2zM85 9h2v1h-2zM88 9h2v1h-2zM81 10h3v1h-3zM85 10h2v1h-2zM87 10h3v1h-3zM93 0h2v1h-2zM97 0h6v1h-6zM94 1h2v1h-2zM97 1h2v1h-2zM101 1h2v1h-2zM92 2h5v1h-5zM97 2h2v1h-2zM99 2h2v1h-2zM101 2h2v1h-2zM95 3h2v1h-2zM97 3h2v1h-2zM99 3h2v1h-2zM101 3h2v1h-2zM94 4h2v1h-2zM97 4h2v1h-2zM99 4h2v1h-2zM101 4h2v1h-2zM93 5h4v1h-4zM97 5h2v1h-2zM99 5h2v1h-2zM101 5h2v1h-2zM92 6h2v1h-2zM94 6h2v1h-2zM97 6h2v1h-2zM99 6h2v1h-2zM101 6h2v1h-2zM94 7h2v1h-2zM99 7h2v1h-2zM94 8h2v1h-2zM98 8h3v1h-3zM102 8h2v1h-2zM94 9h2v1h-2zM97 9h2v1h-2zM99 9h2v1h-2zM102 9h2v1h-2zM94 10h2v1h-2zM96 10h2v1h-2zM100 10h4v1h-4zM106 0h11v1h-11zM106 1h2v1h-2zM109 1h2v1h-2zM115 1h2v1h-2zM106 2h2v1h-2zM109 2h6v1h-6zM115 2h2v1h-2zM106 3h2v1h-2zM108 3h3v1h-3zM112 3h2v1h-2zM115 3h2v1h-2zM106 4h3v1h-3zM110 4h3v1h-3zM115 4h2v1h-2zM106 5h2v1h-2zM109 5h2v1h-2zM112 5h2v1h-2zM115 5h2v1h-2zM106 6h4v1h-4zM110 6h2v1h-2zM113 6h4v1h-4zM106 7h2v1h-2zM111 7h2v1h-2zM115 7h2v1h-2zM106 8h2v1h-2zM110 8h2v1h-2zM115 8h2v1h-2zM106 9h2v1h-2zM111 9h2v1h-2zM115 9h2v1h-2zM106 10h11v1h-11z" fill="#D0D0D0"/></svg>
<svg class="a" style="left:1257px;top:660px;" width="36" height="12" shape-rendering="crispEdges"><path d="M2 1h4v1h-4zM1 2h2v1h-2zM1 3h2v1h-2zM1 4h5v1h-5zM1 5h2v1h-2zM5 5h2v1h-2zM1 6h2v1h-2zM5 6h2v1h-2zM1 7h2v1h-2zM5 7h2v1h-2zM2 8h4v1h-4zM10 7h2v1h-2zM10 8h2v1h-2zM15 1h5v1h-5zM15 2h2v1h-2zM15 3h2v1h-2zM15 4h5v1h-5zM19 5h2v1h-2zM19 6h2v1h-2zM19 7h2v1h-2zM15 8h5v1h-5zM23 1h4v1h-4zM22 2h2v1h-2zM22 3h2v1h-2zM22 4h5v1h-5zM22 5h2v1h-2zM26 5h2v1h-2zM22 6h2v1h-2zM26 6h2v1h-2zM22 7h2v1h-2zM26 7h2v1h-2zM23 8h4v1h-4zM31 1h3v1h-3zM30 2h2v1h-2zM32 2h2v1h-2zM29 3h2v1h-2zM32 3h2v1h-2zM29 4h2v1h-2zM32 4h2v1h-2zM28 5h2v1h-2zM32 5h2v1h-2zM28 6h7v1h-7zM32 7h2v1h-2zM32 8h2v1h-2z" fill="#40E040"/></svg>
<svg class="a" style="left:1239px;top:673px;" width="27" height="12" shape-rendering="crispEdges"><path d="M7 0h2v1h-2zM3 1h2v1h-2zM7 1h2v1h-2zM3 2h2v1h-2zM8 2h2v1h-2zM2 3h2v1h-2zM8 3h2v1h-2zM2 4h2v1h-2zM5 4h2v1h-2zM9 4h2v1h-2zM1 5h2v1h-2zM5 5h2v1h-2zM10 5h2v1h-2zM0 6h2v1h-2zM4 6h2v1h-2zM4 7h2v1h-2zM7 7h2v1h-2zM3 8h2v1h-2zM8 8h2v1h-2zM2 9h9v1h-9zM3 10h2v1h-2zM9 10h2v1h-2zM16 0h2v1h-2zM23 0h2v1h-2zM14 1h2v1h-2zM16 1h2v1h-2zM21 1h2v1h-2zM23 1h2v1h-2zM14 2h7v1h-7zM21 2h2v1h-2zM23 2h2v1h-2zM13 3h2v1h-2zM16 3h2v1h-2zM21 3h2v1h-2zM23 3h2v1h-2zM13 4h8v1h-8zM21 4h2v1h-2zM23 4h2v1h-2zM16 5h2v1h-2zM21 5h2v1h-2zM23 5h2v1h-2zM14 6h7v1h-7zM21 6h2v1h-2zM23 6h2v1h-2zM14 7h2v1h-2zM16 7h2v1h-2zM19 7h2v1h-2zM21 7h2v1h-2zM23 7h2v1h-2zM14 8h2v1h-2zM16 8h2v1h-2zM19 8h2v1h-2zM23 8h2v1h-2zM14 9h2v1h-2zM16 9h2v1h-2zM18 9h3v1h-3zM23 9h2v1h-2zM16 10h2v1h-2zM21 10h4v1h-4z" fill="#D0D0D0"/></svg>
<div class="a" style="left:1335px;top:128px;width:31px;height:569px;background:#D4D0C8;"></div>
<div class="a" style="left:1336px;top:129px;width:1px;height:234px;background:#FFFFFF;"></div>
<div class="a" style="left:1336px;top:128px;width:30px;height:1px;background:#808080;"></div>
<div class="a" style="left:1336px;top:129px;width:30px;height:1px;background:#FFFFFF;"></div>
<div class="a" style="left:1340px;top:132px;width:23px;height:3px;background:#808080;"></div>
<div class="a" style="left:1340px;top:132px;width:22px;height:2px;background:#FFFFFF;"></div>
<div class="a" style="left:1341px;top:133px;width:21px;height:1px;background:#D4D0C8;"></div>
<div class="a" style="left:1336px;top:362px;width:30px;height:1px;background:#808080;"></div>
<div class="a" style="left:1336px;top:363px;width:30px;height:1px;background:#FFFFFF;"></div>
<div class="a" style="left:1336px;top:364px;width:1px;height:333px;background:#FFFFFF;"></div>
<div class="a" style="left:1340px;top:367px;width:23px;height:3px;background:#808080;"></div>
<div class="a" style="left:1340px;top:367px;width:22px;height:2px;background:#FFFFFF;"></div>
<div class="a" style="left:1341px;top:368px;width:21px;height:1px;background:#D4D0C8;"></div>
<svg class="a" style="left:1342px;top:142px" width="16" height="16" viewBox="0 0 16 16"><path d="M4.5 4C6.5 2.2 10.5 2 12 4.2C13.5 6.8 11.5 9.8 7.5 12" stroke="#A818A8" stroke-width="2.7" fill="none"/><path d="M0.3 8.8L1.8 2.8L7.2 8.8Z" fill="#B020B8"/></svg>
<svg class="a" style="left:1342px;top:165px" width="16" height="16" viewBox="0 0 16 16"><rect x="2.5" y="2.5" width="11" height="13" fill="#F8E8A0" stroke="#B09030"/><rect x="5" y="1" width="6" height="3" fill="#fff" stroke="#808080"/></svg>
<svg class="a" style="left:1342px;top:187px" width="16" height="16" viewBox="0 0 16 16"><path d="M1.5 1.5H7L9 3.5V11.5H1.5Z" fill="#E0ECFA" stroke="#6F8FC0"/><path d="M6.5 4.5H12L14.5 7V15.5H6.5Z" fill="#E0ECFA" stroke="#6F8FC0"/><path d="M8 8H13M8 10H13M8 12H13" stroke="#6F8FC0"/></svg>
<svg class="a" style="left:1342px;top:209px" width="16" height="16" viewBox="0 0 16 16"><rect x="1" y="1" width="14" height="14" fill="#4A4AAE" stroke="#2C2C80"/><rect x="3.5" y="1.5" width="9" height="6" fill="#E8E8F4"/><rect x="4.5" y="3" width="7" height="1" fill="#9AA"/><rect x="4.5" y="5" width="7" height="1" fill="#9AA"/><rect x="4" y="10" width="8" height="5" fill="#E8E8F4"/><rect x="5" y="11" width="2" height="4" fill="#2C2C80"/></svg>
<svg class="a" style="left:1342px;top:231px" width="16" height="16" viewBox="0 0 16 16"><path d="M10.5 0.9A7.2 7.2 0 1 0 15.3 6.5" fill="none" stroke="#1A5A1A" stroke-width="1.1"/><path d="M5.5 8H10.5M8 5.5V10.5M10.5 3H15.5M13 0.5V5.5" stroke="#F05A10" stroke-width="2"/></svg>
<svg class="a" style="left:1342px;top:253px" width="16" height="16" viewBox="0 0 16 16"><path d="M2 12L12 2L15 5L5 15Z" fill="#F4D020" stroke="#806000" stroke-width=".8"/><path d="M2 12L5 15L2 16L0 14Z" fill="#F06060"/></svg>
<svg class="a" style="left:1342px;top:377px" width="16" height="16" viewBox="0 0 16 16"><path d="M5 0L1 6H4L0 11" stroke="#F0A000" stroke-width="1.3" fill="none"/><path d="M6 1L2 7" stroke="#F06000" stroke-width=".8"/><path d="M2 14C2 9 5 6 9 6C12 6 14 9 15 14" stroke="#E02020" stroke-width="2.4" fill="#A8D0F8"/></svg>
<svg class="a" style="left:1342px;top:399px" width="16" height="16" viewBox="0 0 16 16"><path d="M5 0L1 6H4L0 11" stroke="#F0A000" stroke-width="1.3" fill="none"/><path d="M6 1L2 7" stroke="#F06000" stroke-width=".8"/><path d="M7 3H11V7H15V11H11V15H7V11H3V7H7Z" fill="#38B030" stroke="#208020" stroke-width=".6"/></svg>
<svg class="a" style="left:1342px;top:421px" width="16" height="16" viewBox="0 0 16 16"><path d="M5 0L1 6H4L0 11" stroke="#F0A000" stroke-width="1.3" fill="none"/><path d="M6 1L2 7" stroke="#F06000" stroke-width=".8"/><path d="M3 14L13 4" stroke="#208020" stroke-width="1.4"/><path d="M11 3.5H16M13.5 1V6M0 13.5H5M2.5 11V16" stroke="#5A5AA0" stroke-width="1.2"/></svg>
<svg class="a" style="left:1342px;top:443px" width="16" height="16" viewBox="0 0 16 16"><path d="M5 0L1 6H4L0 11" stroke="#F0A000" stroke-width="1.3" fill="none"/><path d="M6 1L2 7" stroke="#F06000" stroke-width=".8"/><circle cx="9" cy="9" r="6" fill="none" stroke="#208020" stroke-width="1.3"/></svg>
<svg class="a" style="left:1342px;top:465px" width="16" height="16" viewBox="0 0 16 16"><path d="M5 0L1 6H4L0 11" stroke="#F0A000" stroke-width="1.3" fill="none"/><path d="M6 1L2 7" stroke="#F06000" stroke-width=".8"/><path d="M2 15V10H14V3" stroke="#208020" stroke-width="2" fill="none"/></svg>
<svg class="a" style="left:1342px;top:487px" width="16" height="16" viewBox="0 0 16 16"><path d="M5 0L1 6H4L0 11" stroke="#F0A000" stroke-width="1.3" fill="none"/><path d="M6 1L2 7" stroke="#F06000" stroke-width=".8"/><rect x="2" y="2" width="13" height="13" fill="#fff" stroke="#E02020" stroke-width="1.6"/><path d="M8.5 2V15M2 8.5H15" stroke="#E02020" stroke-width="1.6"/><rect x="9.5" y="9.5" width="4" height="4" fill="#808080"/></svg>
<svg class="a" style="left:1342px;top:510px" width="16" height="16" viewBox="0 0 16 16"><path d="M5 0L1 6H4L0 11" stroke="#F0A000" stroke-width="1.3" fill="none"/><path d="M6 1L2 7" stroke="#F06000" stroke-width=".8"/><path d="M9 1L15 4V11L9 15L3 11V4Z" fill="#3A8AE8"/><path d="M3 4L9 7L15 4L9 1Z" fill="#A8D8FF"/><path d="M9 7V15L15 11V4Z" fill="#1A5AB8"/></svg>
<svg class="a" style="left:1342px;top:532px" width="16" height="16" viewBox="0 0 16 16"><path d="M5 0L1 6H4L0 11" stroke="#F0A000" stroke-width="1.3" fill="none"/><path d="M6 1L2 7" stroke="#F06000" stroke-width=".8"/><circle cx="9" cy="9" r="6" fill="none" stroke="#1E60C8" stroke-width="1.2"/><ellipse cx="9" cy="9" rx="2.5" ry="6" fill="none" stroke="#1E60C8"/><path d="M3 7H15M3 11H15" stroke="#1E60C8"/></svg>
<svg class="a" style="left:1342px;top:554px" width="16" height="16" viewBox="0 0 16 16"><circle cx="8" cy="8" r="6.3" fill="none" stroke="#909090" stroke-width="2.4"/><path d="M3.5 12.5L12.5 3.5" stroke="#909090" stroke-width="2.4"/></svg>
<svg class="a" style="left:1342px;top:582px" width="16" height="16" viewBox="0 0 16 16"><path d="M5 0L1 6H4L0 11" stroke="#F0A000" stroke-width="1.3" fill="none"/><path d="M6 1L2 7" stroke="#F06000" stroke-width=".8"/><rect x="1.5" y="9.5" width="6" height="6" fill="#808080" stroke="#202020"/><rect x="9" y="2" width="6" height="6" fill="#8A2AE8"/></svg>
<svg class="a" style="left:1342px;top:604px" width="16" height="16" viewBox="0 0 16 16"><path d="M5 0L1 6H4L0 11" stroke="#F0A000" stroke-width="1.3" fill="none"/><path d="M6 1L2 7" stroke="#F06000" stroke-width=".8"/><rect x="1" y="9" width="7" height="7" fill="#D01040"/><rect x="8.5" y="2.5" width="6" height="6" fill="#808080" stroke="#202020"/></svg>
<svg class="a" style="left:1342px;top:636px" width="16" height="16" viewBox="0 0 16 16"><path d="M5 0L1 6H4L0 11" stroke="#F0A000" stroke-width="1.3" fill="none"/><path d="M6 1L2 7" stroke="#F06000" stroke-width=".8"/><rect x="2" y="3" width="14" height="12" fill="#101010"/><rect x="3" y="4" width="3.5" height="3.5" fill="#F8E000"/><rect x="7" y="4" width="3.5" height="3.5" fill="#E02020"/><rect x="11" y="4" width="3.5" height="3.5" fill="#20C020"/><rect x="3" y="8" width="3.5" height="3.5" fill="#20D0F0"/><rect x="7" y="8" width="3.5" height="3.5" fill="#2040E0"/><rect x="11" y="8" width="3.5" height="3.5" fill="#E020E0"/></svg>
<svg class="a" style="left:1342px;top:658px" width="16" height="16" viewBox="0 0 16 16"><path d="M5 0L1 6H4L0 11" stroke="#F0A000" stroke-width="1.3" fill="none"/><path d="M6 1L2 7" stroke="#F06000" stroke-width=".8"/><rect x="3" y="3" width="12" height="12" fill="#202020"/><rect x="4" y="4" width="10" height="5" fill="#F8D040"/><rect x="4" y="10" width="10" height="4" fill="#fff"/></svg>
<svg class="a" style="left:1342px;top:685px" width="16" height="16" viewBox="0 0 16 16"><path d="M5 1L1 7H4L1 11" stroke="#F0A000" stroke-width="1.3" fill="none"/><path d="M1 14H15M2 14L8 11L13 14M14 8V14" stroke="#5050A0" stroke-width="1.2" fill="none"/></svg>
<div class="a" style="left:1340px;top:576px;width:23px;height:1px;background:#808080;"></div>
<div class="a" style="left:1340px;top:577px;width:23px;height:1px;background:#FFFFFF;"></div>
<div class="a" style="left:1340px;top:628px;width:23px;height:1px;background:#808080;"></div>
<div class="a" style="left:1340px;top:629px;width:23px;height:1px;background:#FFFFFF;"></div>
<div class="a" style="left:1340px;top:680px;width:23px;height:1px;background:#808080;"></div>
<div class="a" style="left:1340px;top:681px;width:23px;height:1px;background:#FFFFFF;"></div>
<div class="a" style="left:0px;top:697px;width:1366px;height:32px;background:#D4D0C8;"></div>
<div class="a" style="left:0px;top:697px;width:1366px;height:1px;background:#808080;"></div>
<div class="a" style="left:0px;top:698px;width:1366px;height:1px;background:#FFFFFF;"></div>
<svg class="a" style="left:2px;top:707px;" width="97" height="12" shape-rendering="crispEdges"><path d="M3 0h1v1h-1zM1 1h5v1h-5zM7 1h4v1h-4zM3 2h1v1h-1zM7 2h1v1h-1zM10 2h1v1h-1zM1 3h5v1h-5zM7 3h1v1h-1zM9 3h1v1h-1zM3 4h1v1h-1zM7 4h1v1h-1zM10 4h1v1h-1zM0 5h6v1h-6zM7 5h4v1h-4zM2 6h1v1h-1zM5 6h1v1h-1zM7 6h1v1h-1zM1 7h9v1h-9zM2 8h1v1h-1zM5 8h1v1h-1zM9 8h1v1h-1zM2 9h1v1h-1zM5 9h1v1h-1zM8 9h2v1h-2zM5 10h1v1h-1zM19 0h1v1h-1zM13 1h4v1h-4zM19 1h1v1h-1zM13 2h1v1h-1zM16 2h1v1h-1zM19 2h1v1h-1zM13 3h1v1h-1zM16 3h1v1h-1zM18 3h5v1h-5zM13 4h4v1h-4zM19 4h1v1h-1zM22 4h1v1h-1zM13 5h1v1h-1zM16 5h1v1h-1zM19 5h1v1h-1zM22 5h1v1h-1zM13 6h4v1h-4zM19 6h1v1h-1zM22 6h1v1h-1zM13 7h1v1h-1zM16 7h1v1h-1zM19 7h1v1h-1zM22 7h1v1h-1zM13 8h1v1h-1zM15 8h4v1h-4zM22 8h1v1h-1zM12 9h3v1h-3zM18 9h1v1h-1zM20 9h1v1h-1zM22 9h1v1h-1zM17 10h1v1h-1zM21 10h1v1h-1zM26 7h2v1h-2zM27 8h1v1h-1zM26 9h1v1h-1zM38 0h1v1h-1zM43 0h1v1h-1zM38 1h1v1h-1zM44 1h1v1h-1zM36 2h11v1h-11zM38 3h1v1h-1zM41 3h1v1h-1zM43 3h1v1h-1zM46 3h1v1h-1zM38 4h1v1h-1zM40 4h1v1h-1zM43 4h1v1h-1zM38 5h2v1h-2zM41 5h6v1h-6zM37 6h2v1h-2zM42 6h1v1h-1zM45 6h1v1h-1zM36 7h1v1h-1zM38 7h1v1h-1zM41 7h2v1h-2zM45 7h1v1h-1zM38 8h1v1h-1zM43 8h2v1h-2zM38 9h1v1h-1zM42 9h1v1h-1zM44 9h1v1h-1zM36 10h3v1h-3zM40 10h2v1h-2zM45 10h2v1h-2zM57 1h1v1h-1zM57 2h1v1h-1zM56 3h1v1h-1zM58 3h1v1h-1zM56 4h1v1h-1zM58 4h1v1h-1zM56 5h1v1h-1zM58 5h1v1h-1zM55 6h5v1h-5zM55 7h1v1h-1zM59 7h1v1h-1zM55 8h1v1h-1zM59 8h1v1h-1zM63 1h1v1h-1zM63 2h1v1h-1zM63 3h1v1h-1zM63 4h1v1h-1zM63 5h1v1h-1zM63 6h1v1h-1zM63 7h1v1h-1zM63 8h1v1h-1zM68 1h1v1h-1zM68 2h1v1h-1zM68 3h3v1h-3zM68 4h1v1h-1zM68 5h1v1h-1zM68 6h1v1h-1zM68 7h1v1h-1zM69 8h2v1h-2zM75 3h1v1h-1zM75 4h1v1h-1zM73 5h5v1h-5zM75 6h1v1h-1zM75 7h1v1h-1zM78 1h1v1h-1zM83 1h1v1h-1zM78 2h1v1h-1zM83 2h1v1h-1zM78 3h1v1h-1zM83 3h1v1h-1zM78 4h6v1h-6zM78 5h1v1h-1zM83 5h1v1h-1zM78 6h1v1h-1zM83 6h1v1h-1zM78 7h1v1h-1zM83 7h1v1h-1zM78 8h1v1h-1zM83 8h1v1h-1zM88 6h2v1h-2zM87 7h1v1h-1zM90 7h1v1h-1zM87 8h1v1h-1zM90 8h1v1h-1zM88 9h2v1h-2z" fill="#000"/></svg>
<div class="a" style="left:476px;top:701px;width:30px;height:23px;background:#D4D0C8;border-top:1px solid #808080;border-left:1px solid #808080;border-right:1px solid #fff;border-bottom:1px solid #fff"></div>
<svg class="a" style="left:485px;top:707px;" width="13" height="12" shape-rendering="crispEdges"><path d="M1 1h4v1h-4zM5 2h1v1h-1zM5 3h1v1h-1zM2 4h3v1h-3zM5 5h1v1h-1zM5 6h1v1h-1zM5 7h1v1h-1zM1 8h4v1h-4zM7 1h4v1h-4zM7 2h1v1h-1zM11 2h1v1h-1zM7 3h1v1h-1zM11 3h1v1h-1zM7 4h1v1h-1zM11 4h1v1h-1zM7 5h1v1h-1zM11 5h1v1h-1zM7 6h1v1h-1zM11 6h1v1h-1zM7 7h1v1h-1zM11 7h1v1h-1zM7 8h4v1h-4z" fill="#000"/></svg>
<div class="a" style="left:508px;top:701px;width:66px;height:23px;background:#D4D0C8;border-top:1px solid #808080;border-left:1px solid #808080;border-right:1px solid #fff;border-bottom:1px solid #fff"></div>
<svg class="a" style="left:511px;top:707px;" width="49" height="12" shape-rendering="crispEdges"><path d="M2 0h9v1h-9zM2 1h1v1h-1zM10 1h1v1h-1zM2 2h9v1h-9zM2 3h1v1h-1zM4 3h1v1h-1zM9 3h1v1h-1zM2 4h1v1h-1zM5 4h1v1h-1zM8 4h1v1h-1zM2 5h9v1h-9zM2 6h1v1h-1zM5 6h1v1h-1zM8 6h1v1h-1zM2 7h9v1h-9zM2 8h1v1h-1zM5 8h1v1h-1zM8 8h1v1h-1zM1 9h1v1h-1zM4 9h1v1h-1zM8 9h1v1h-1zM0 10h1v1h-1zM3 10h1v1h-1zM8 10h1v1h-1zM12 0h11v1h-11zM15 1h1v1h-1zM19 1h1v1h-1zM14 2h7v1h-7zM14 3h1v1h-1zM20 3h1v1h-1zM14 4h7v1h-7zM14 5h1v1h-1zM16 5h1v1h-1zM20 5h1v1h-1zM12 6h11v1h-11zM15 7h1v1h-1zM17 7h1v1h-1zM20 7h1v1h-1zM12 8h11v1h-11zM14 9h1v1h-1zM17 9h1v1h-1zM20 9h1v1h-1zM14 10h1v1h-1zM17 10h1v1h-1zM19 10h2v1h-2zM25 0h1v1h-1zM29 0h5v1h-5zM26 1h1v1h-1zM29 1h1v1h-1zM33 1h1v1h-1zM24 2h4v1h-4zM29 2h1v1h-1zM31 2h1v1h-1zM33 2h1v1h-1zM27 3h1v1h-1zM29 3h1v1h-1zM31 3h1v1h-1zM33 3h1v1h-1zM26 4h1v1h-1zM29 4h1v1h-1zM31 4h1v1h-1zM33 4h1v1h-1zM25 5h3v1h-3zM29 5h1v1h-1zM31 5h1v1h-1zM33 5h1v1h-1zM24 6h1v1h-1zM26 6h1v1h-1zM29 6h1v1h-1zM31 6h1v1h-1zM33 6h1v1h-1zM26 7h1v1h-1zM31 7h1v1h-1zM26 8h1v1h-1zM30 8h2v1h-2zM34 8h1v1h-1zM26 9h1v1h-1zM29 9h1v1h-1zM31 9h1v1h-1zM34 9h1v1h-1zM26 10h1v1h-1zM28 10h1v1h-1zM32 10h3v1h-3zM39 0h1v1h-1zM39 1h5v1h-5zM38 2h1v1h-1zM42 2h1v1h-1zM37 3h9v1h-9zM36 4h1v1h-1zM38 4h1v1h-1zM41 4h1v1h-1zM45 4h1v1h-1zM38 5h8v1h-8zM38 6h1v1h-1zM41 6h1v1h-1zM45 6h1v1h-1zM38 7h8v1h-8zM38 8h1v1h-1zM41 8h1v1h-1zM45 8h1v1h-1zM37 9h1v1h-1zM41 9h1v1h-1zM43 9h1v1h-1zM45 9h1v1h-1zM36 10h1v1h-1zM44 10h1v1h-1z" fill="#000"/></svg>
<div class="a" style="left:576px;top:701px;width:30px;height:23px;background:#D4D0C8;border-top:1px solid #808080;border-left:1px solid #808080;border-right:1px solid #fff;border-bottom:1px solid #fff"></div>
<svg class="a" style="left:579px;top:707px;" width="25" height="12" shape-rendering="crispEdges"><path d="M1 0h9v1h-9zM5 1h1v1h-1zM2 2h1v1h-1zM5 2h1v1h-1zM8 2h1v1h-1zM3 3h1v1h-1zM5 3h1v1h-1zM7 3h1v1h-1zM5 4h1v1h-1zM0 5h11v1h-11zM5 6h1v1h-1zM5 7h1v1h-1zM5 8h1v1h-1zM5 9h1v1h-1zM5 10h1v1h-1zM13 0h10v1h-10zM17 1h1v1h-1zM16 2h1v1h-1zM13 3h10v1h-10zM13 4h1v1h-1zM16 4h1v1h-1zM19 4h1v1h-1zM22 4h1v1h-1zM13 5h1v1h-1zM16 5h4v1h-4zM22 5h1v1h-1zM13 6h1v1h-1zM16 6h1v1h-1zM19 6h1v1h-1zM22 6h1v1h-1zM13 7h1v1h-1zM16 7h4v1h-4zM22 7h1v1h-1zM13 8h1v1h-1zM16 8h1v1h-1zM19 8h1v1h-1zM22 8h1v1h-1zM13 9h10v1h-10zM13 10h1v1h-1zM22 10h1v1h-1z" fill="#000"/></svg>
<div class="a" style="left:608px;top:701px;width:134px;height:23px;background:#D4D0C8;border-top:1px solid #808080;border-left:1px solid #808080;border-right:1px solid #fff;border-bottom:1px solid #fff"></div>
<svg class="a" style="left:611px;top:705px;" width="7" height="12" shape-rendering="crispEdges"><path d="M0 1h7v1h-7zM5 2h1v1h-1zM4 3h1v1h-1zM3 4h1v1h-1zM2 5h1v1h-1zM1 6h1v1h-1zM0 7h1v1h-1zM0 8h7v1h-7z" fill="#000"/></svg>
<div class="a" style="left:628px;top:703px;width:110px;height:18px;background:#FFFF90;border-top:1px solid #808080;border-left:1px solid #808080;border-right:1px solid #fff;border-bottom:1px solid #fff;box-shadow:inset 1px 1px 0 #404040"></div>
<div class="a" style="left:630px;top:705px;width:19px;height:12px;background:#0A246A;"></div>
<svg class="a" style="left:630px;top:706px;" width="19" height="12" shape-rendering="crispEdges"><path d="M2 1h3v1h-3zM1 2h1v1h-1zM5 2h1v1h-1zM1 3h1v1h-1zM5 3h1v1h-1zM1 4h1v1h-1zM5 4h1v1h-1zM1 5h1v1h-1zM5 5h1v1h-1zM1 6h1v1h-1zM5 6h1v1h-1zM1 7h1v1h-1zM5 7h1v1h-1zM2 8h3v1h-3zM9 7h1v1h-1zM9 8h1v1h-1zM14 1h3v1h-3zM13 2h1v1h-1zM17 2h1v1h-1zM13 3h1v1h-1zM17 3h1v1h-1zM13 4h1v1h-1zM17 4h1v1h-1zM13 5h1v1h-1zM17 5h1v1h-1zM13 6h1v1h-1zM17 6h1v1h-1zM13 7h1v1h-1zM17 7h1v1h-1zM14 8h3v1h-3z" fill="#fff"/></svg>
<div class="a" style="left:721px;top:705px;width:16px;height:15px;background:#D4D0C8;border-top:1px solid #fff;border-left:1px solid #fff;border-right:1px solid #404040;border-bottom:1px solid #404040;box-shadow:inset -1px -1px 0 #808080"></div>
<svg class="a" style="left:725px;top:711px" width="8" height="4" viewBox="0 0 8 4"><path d="M0 0H8L4 4Z" fill="#000"/></svg>
<div class="a" style="left:740px;top:701px;width:74px;height:23px;background:#D4D0C8;border-top:1px solid #808080;border-left:1px solid #808080;border-right:1px solid #fff;border-bottom:1px solid #fff"></div>
<div class="a" style="left:742px;top:703px;width:55px;height:19px;background:#00FF00;border-top:1px solid #808080;border-left:1px solid #808080;border-right:1px solid #fff;border-bottom:1px solid #fff"></div>
<svg class="a" style="left:763px;top:703px;" width="13" height="12" shape-rendering="crispEdges"><path d="M1 1h3v1h-3zM3 2h1v1h-1zM3 3h1v1h-1zM3 4h1v1h-1zM3 5h1v1h-1zM3 6h1v1h-1zM3 7h1v1h-1zM1 8h5v1h-5zM8 1h3v1h-3zM7 2h1v1h-1zM11 2h1v1h-1zM7 3h1v1h-1zM11 3h1v1h-1zM7 4h1v1h-1zM11 4h1v1h-1zM7 5h1v1h-1zM11 5h1v1h-1zM7 6h1v1h-1zM11 6h1v1h-1zM7 7h1v1h-1zM11 7h1v1h-1zM8 8h3v1h-3z" fill="#000"/></svg>
<svg class="a" style="left:800px;top:708px" width="10" height="9" viewBox="0 0 10 9"><path d="M0 0H10L5 9Z" fill="#000"/></svg>
<div class="a" style="left:816px;top:701px;width:179px;height:23px;background:#D4D0C8;border-top:1px solid #808080;border-left:1px solid #808080;border-right:1px solid #fff;border-bottom:1px solid #fff"></div>
<svg class="a" style="left:818px;top:705px;" width="25" height="12" shape-rendering="crispEdges"><path d="M2 0h8v1h-8zM2 1h1v1h-1zM9 1h1v1h-1zM2 2h8v1h-8zM2 3h1v1h-1zM2 4h1v1h-1zM4 4h6v1h-6zM2 5h1v1h-1zM2 6h9v1h-9zM2 7h1v1h-1zM6 7h1v1h-1zM2 8h1v1h-1zM5 8h1v1h-1zM8 8h1v1h-1zM1 9h1v1h-1zM4 9h1v1h-1zM9 9h1v1h-1zM0 10h1v1h-1zM4 10h7v1h-7zM13 0h5v1h-5zM22 0h1v1h-1zM13 1h1v1h-1zM17 1h1v1h-1zM22 1h1v1h-1zM13 2h1v1h-1zM17 2h1v1h-1zM20 2h1v1h-1zM22 2h1v1h-1zM13 3h5v1h-5zM20 3h1v1h-1zM22 3h1v1h-1zM15 4h1v1h-1zM20 4h1v1h-1zM22 4h1v1h-1zM12 5h7v1h-7zM20 5h1v1h-1zM22 5h1v1h-1zM15 6h1v1h-1zM18 6h1v1h-1zM20 6h1v1h-1zM22 6h1v1h-1zM14 7h1v1h-1zM18 7h1v1h-1zM20 7h1v1h-1zM22 7h1v1h-1zM14 8h1v1h-1zM18 8h1v1h-1zM22 8h1v1h-1zM13 9h1v1h-1zM18 9h1v1h-1zM22 9h1v1h-1zM12 10h1v1h-1zM16 10h2v1h-2zM20 10h3v1h-3z" fill="#000"/></svg>
<div class="a" style="left:847px;top:703px;width:146px;height:18px;background:#FFFFFF;border-top:1px solid #808080;border-left:1px solid #808080;border-right:1px solid #fff;border-bottom:1px solid #fff;box-shadow:inset 1px 1px 0 #404040"></div>
<svg class="a" style="left:850px;top:706px;" width="7" height="12" shape-rendering="crispEdges"><path d="M1 1h3v1h-3zM3 2h1v1h-1zM3 3h1v1h-1zM3 4h1v1h-1zM3 5h1v1h-1zM3 6h1v1h-1zM3 7h1v1h-1zM1 8h5v1h-5z" fill="#000"/></svg>
<div class="a" style="left:976px;top:705px;width:16px;height:15px;background:#D4D0C8;border-top:1px solid #fff;border-left:1px solid #fff;border-right:1px solid #404040;border-bottom:1px solid #404040;box-shadow:inset -1px -1px 0 #808080"></div>
<svg class="a" style="left:980px;top:711px" width="8" height="4" viewBox="0 0 8 4"><path d="M0 0H8L4 4Z" fill="#000"/></svg>
<div class="a" style="left:998px;top:701px;width:42px;height:23px;background:#D4D0C8;border-top:1px solid #808080;border-left:1px solid #808080;border-right:1px solid #fff;border-bottom:1px solid #fff"></div>
<svg class="a" style="left:1007px;top:707px;" width="25" height="12" shape-rendering="crispEdges"><path d="M1 0h9v1h-9zM1 1h1v1h-1zM9 1h1v1h-1zM1 2h9v1h-9zM1 3h1v1h-1zM9 3h1v1h-1zM1 4h1v1h-1zM3 4h6v1h-6zM1 5h1v1h-1zM6 5h1v1h-1zM1 6h1v1h-1zM3 6h7v1h-7zM1 7h1v1h-1zM3 7h1v1h-1zM6 7h1v1h-1zM9 7h1v1h-1zM0 8h1v1h-1zM2 8h9v1h-9zM0 9h1v1h-1zM2 9h1v1h-1zM6 9h1v1h-1zM10 9h1v1h-1zM0 10h1v1h-1zM2 10h1v1h-1zM4 10h4v1h-4zM9 10h2v1h-2zM14 0h1v1h-1zM19 0h1v1h-1zM14 1h1v1h-1zM17 1h1v1h-1zM19 1h1v1h-1zM12 2h1v1h-1zM14 2h2v1h-2zM17 2h1v1h-1zM19 2h1v1h-1zM12 3h1v1h-1zM14 3h1v1h-1zM16 3h7v1h-7zM12 4h1v1h-1zM14 4h1v1h-1zM16 4h1v1h-1zM19 4h1v1h-1zM12 5h1v1h-1zM14 5h2v1h-2zM19 5h1v1h-1zM14 6h1v1h-1zM17 6h5v1h-5zM14 7h1v1h-1zM19 7h1v1h-1zM14 8h1v1h-1zM19 8h1v1h-1zM14 9h1v1h-1zM19 9h1v1h-1zM14 10h1v1h-1zM16 10h7v1h-7z" fill="#000"/></svg>
<div class="a" style="left:1041px;top:701px;width:35px;height:23px;background:#D4D0C8;border-top:1px solid #808080;border-left:1px solid #808080;border-right:1px solid #fff;border-bottom:1px solid #fff"></div>
<div class="a" style="left:1043px;top:703px;width:32px;height:18px;background:#FFFFFF;border-top:1px solid #808080;border-left:1px solid #808080;border-right:1px solid #fff;border-bottom:1px solid #fff;box-shadow:inset 1px 1px 0 #404040"></div>
<svg class="a" style="left:1046px;top:709px" width="9" height="12" viewBox="0 0 9 12"><path d="M4.5 0V9M0.5 2.5L8.5 6.5M8.5 2.5L0.5 6.5" stroke="#000" stroke-width="1.1"/></svg>
<div class="a" style="left:1058px;top:705px;width:16px;height:15px;background:#D4D0C8;border-top:1px solid #fff;border-left:1px solid #fff;border-right:1px solid #404040;border-bottom:1px solid #404040;box-shadow:inset -1px -1px 0 #808080"></div>
<svg class="a" style="left:1062px;top:711px" width="8" height="4" viewBox="0 0 8 4"><path d="M0 0H8L4 4Z" fill="#000"/></svg>
<div class="a" style="left:1080px;top:701px;width:64px;height:23px;background:#D4D0C8;border-top:1px solid #808080;border-left:1px solid #808080;border-right:1px solid #fff;border-bottom:1px solid #fff"></div>
<div class="a" style="left:1082px;top:703px;width:61px;height:18px;background:#FFFFFF;border-top:1px solid #808080;border-left:1px solid #808080;border-right:1px solid #fff;border-bottom:1px solid #fff;box-shadow:inset 1px 1px 0 #404040"></div>
<div class="a" style="left:1084px;top:711px;width:42px;height:3px;background:#000;"></div>
<div class="a" style="left:1126px;top:705px;width:16px;height:15px;background:#D4D0C8;border-top:1px solid #fff;border-left:1px solid #fff;border-right:1px solid #404040;border-bottom:1px solid #404040;box-shadow:inset -1px -1px 0 #808080"></div>
<svg class="a" style="left:1130px;top:711px" width="8" height="4" viewBox="0 0 8 4"><path d="M0 0H8L4 4Z" fill="#000"/></svg>
<div class="a" style="left:1147px;top:701px;width:65px;height:23px;background:#D4D0C8;border-top:1px solid #808080;border-left:1px solid #808080;border-right:1px solid #fff;border-bottom:1px solid #fff"></div>
<div class="a" style="left:1149px;top:703px;width:62px;height:18px;background:#FFFFFF;border-top:1px solid #808080;border-left:1px solid #808080;border-right:1px solid #fff;border-bottom:1px solid #fff;box-shadow:inset 1px 1px 0 #404040"></div>
<div class="a" style="left:1151px;top:712px;width:42px;height:1px;background:#000;"></div>
<div class="a" style="left:1194px;top:705px;width:16px;height:15px;background:#D4D0C8;border-top:1px solid #fff;border-left:1px solid #fff;border-right:1px solid #404040;border-bottom:1px solid #404040;box-shadow:inset -1px -1px 0 #808080"></div>
<svg class="a" style="left:1198px;top:711px" width="8" height="4" viewBox="0 0 8 4"><path d="M0 0H8L4 4Z" fill="#000"/></svg>
<div class="a" style="left:1215px;top:701px;width:49px;height:23px;background:#D4D0C8;border-top:1px solid #808080;border-left:1px solid #808080;border-right:1px solid #fff;border-bottom:1px solid #fff"></div>
<svg class="a" style="left:1230px;top:707px;" width="19" height="12" shape-rendering="crispEdges"><path d="M1 1h1v1h-1zM5 1h1v1h-1zM1 2h1v1h-1zM5 2h1v1h-1zM1 3h1v1h-1zM3 3h1v1h-1zM5 3h1v1h-1zM1 4h1v1h-1zM3 4h1v1h-1zM5 4h1v1h-1zM1 5h1v1h-1zM3 5h1v1h-1zM5 5h1v1h-1zM1 6h1v1h-1zM3 6h1v1h-1zM5 6h1v1h-1zM2 7h1v1h-1zM4 7h1v1h-1zM2 8h1v1h-1zM4 8h1v1h-1zM7 1h4v1h-4zM6 2h1v1h-1zM11 2h1v1h-1zM6 3h1v1h-1zM6 4h1v1h-1zM6 5h1v1h-1zM6 6h1v1h-1zM6 7h1v1h-1zM11 7h1v1h-1zM7 8h4v1h-4zM14 1h4v1h-4zM13 2h1v1h-1zM13 3h1v1h-1zM14 4h3v1h-3zM17 5h1v1h-1zM17 6h1v1h-1zM17 7h1v1h-1zM13 8h4v1h-4z" fill="#000"/></svg>
<div class="a" style="left:1266px;top:701px;width:54px;height:23px;background:#D4D0C8;border-top:1px solid #808080;border-left:1px solid #808080;border-right:1px solid #fff;border-bottom:1px solid #fff"></div>
<svg class="a" style="left:1281px;top:707px;" width="25" height="12" shape-rendering="crispEdges"><path d="M1 0h4v1h-4zM6 0h1v1h-1zM10 0h1v1h-1zM2 1h1v1h-1zM4 1h1v1h-1zM7 1h1v1h-1zM9 1h1v1h-1zM0 2h11v1h-11zM2 3h1v1h-1zM4 3h1v1h-1zM8 3h1v1h-1zM1 4h4v1h-4zM6 4h5v1h-5zM2 5h1v1h-1zM8 5h1v1h-1zM1 6h4v1h-4zM8 6h1v1h-1zM0 7h1v1h-1zM2 7h1v1h-1zM4 7h7v1h-7zM2 8h1v1h-1zM4 8h1v1h-1zM8 8h1v1h-1zM2 9h1v1h-1zM4 9h1v1h-1zM8 9h1v1h-1zM2 10h3v1h-3zM8 10h1v1h-1zM14 0h1v1h-1zM14 1h1v1h-1zM17 1h5v1h-5zM13 2h1v1h-1zM17 2h1v1h-1zM21 2h1v1h-1zM13 3h1v1h-1zM15 3h1v1h-1zM17 3h1v1h-1zM21 3h1v1h-1zM12 4h3v1h-3zM17 4h5v1h-5zM14 5h1v1h-1zM17 5h1v1h-1zM21 5h1v1h-1zM13 6h1v1h-1zM17 6h1v1h-1zM21 6h1v1h-1zM12 7h4v1h-4zM17 7h5v1h-5zM17 8h1v1h-1zM21 8h1v1h-1zM14 9h2v1h-2zM17 9h1v1h-1zM21 9h1v1h-1zM12 10h2v1h-2zM16 10h7v1h-7z" fill="#000"/></svg>
<div class="a" style="left:1322px;top:701px;width:24px;height:23px;background:#D4D0C8;border-top:1px solid #808080;border-left:1px solid #808080;border-right:1px solid #fff;border-bottom:1px solid #fff"></div>
<svg class="a" style="left:1331px;top:707px;" width="7" height="12" shape-rendering="crispEdges"><path d="M3 0h1v1h-1zM3 1h1v1h-1zM3 2h1v1h-1zM3 3h1v1h-1zM3 4h1v1h-1zM3 5h1v1h-1zM3 8h1v1h-1z" fill="#000"/></svg>
<div class="a" style="left:1348px;top:701px;width:18px;height:23px;background:#D4D0C8;border-top:1px solid #808080;border-left:1px solid #808080;border-right:1px solid #fff;border-bottom:1px solid #fff"></div>
<svg class="a" style="left:1354px;top:707px;" width="7" height="12" shape-rendering="crispEdges"><path d="M2 0h3v1h-3zM1 1h1v1h-1zM5 1h1v1h-1zM1 2h1v1h-1zM5 2h1v1h-1zM5 3h1v1h-1zM3 4h2v1h-2zM3 5h1v1h-1zM3 7h1v1h-1zM3 8h1v1h-1z" fill="#000"/></svg>
<div class="a" style="left:0px;top:728px;width:1366px;height:1px;background:#E8E8E8;"></div>
</body></html>
